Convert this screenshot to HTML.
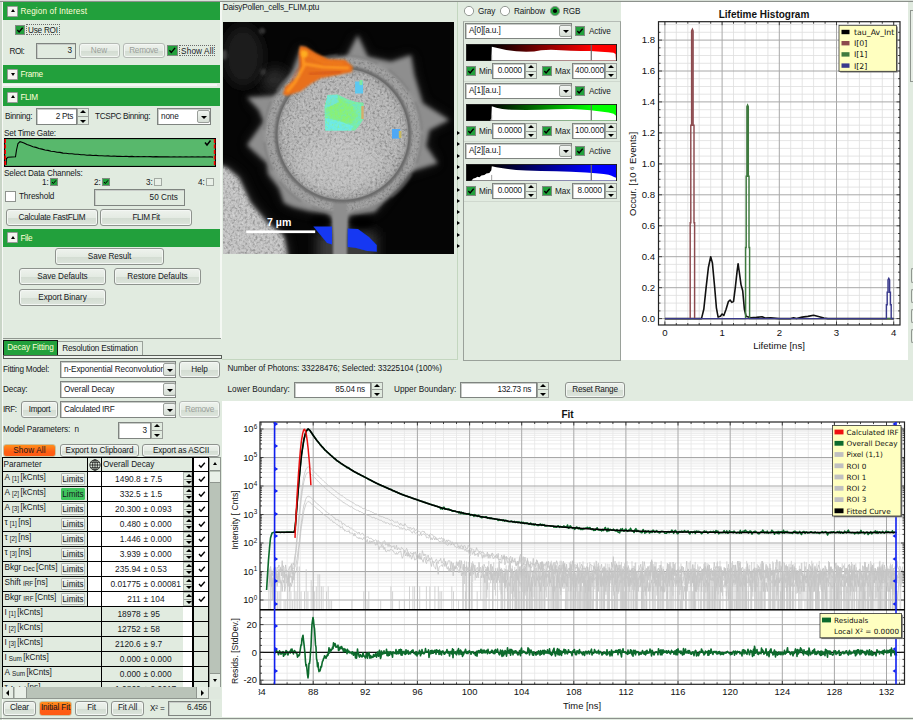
<!DOCTYPE html><html><head><meta charset="utf-8"><title>FLIM</title><style>
*{box-sizing:border-box;margin:0;padding:0}
html,body{width:913px;height:720px;overflow:hidden;background:#e1ebe0}
body{position:relative;font-family:"Liberation Sans",sans-serif;font-size:8.2px;color:#15181c;line-height:13px}
.a{position:absolute;white-space:nowrap}
.hdr{position:absolute;left:3px;width:217px;background:#22a03c;color:#ffffd8;height:18px}
.hdr span{position:absolute;left:17.5px;top:3.3px}
.hdr i{position:absolute;left:4px;top:3.6px;width:11px;height:11px;background:#f4f4f0;border:1px solid #9a9a9a;border-radius:1px}
.hdr i:after{content:"";position:absolute;left:2.5px;top:2.5px;border:2.5px solid transparent;border-bottom:3px solid #000;border-top:0}
.hdr i.dn:after{border-bottom:0;border-top:3px solid #000;top:3px}
.btn{position:absolute;border:1px solid #8e938e;border-radius:3px;background:linear-gradient(#eef2ed 0%,#e4ebe3 50%,#d3dcd2 52%,#dde5dc 100%);text-align:center;white-space:nowrap;box-shadow:inset 0 0 0 1px #f4f7f4}
.btn.dis{color:#9aa09a;border-color:#b5bab5}
.fld{position:absolute;border:1px solid #7f8480;background:#fff;box-shadow:inset 1px 1px 0 #c8ccc8;text-align:right;white-space:nowrap}
.fld.g{background:#e1ebe0}
.cb{position:absolute;width:11px;height:11px;background:#22a03c;border:1px solid #7f8a80}
.cb.off{background:#fff;border-color:#8e938e}
.cb.off.s{background:#e9f0e8;border-color:#a3aaa3}
.cb svg{position:absolute;left:0;top:0}
.spin{position:absolute;width:12px;border:1px solid #9a9f9a;background:#e1ebe0}
.spin:before,.spin:after{content:"";position:absolute;left:2px;border:3px solid transparent}
.spin:before{top:1px;border-top:0;border-bottom:3.5px solid #000}
.spin:after{bottom:1px;border-bottom:0;border-top:3.5px solid #000}
.spin b{position:absolute;left:0;right:0;top:50%;height:1px;background:#9a9f9a;margin-top:-0.5px}
.dd{position:absolute;width:13px;border:1px solid #9a9f9a;background:linear-gradient(#f2f5f2,#d5ddd4);border-radius:2px}
.dd:after{content:"";position:absolute;left:2.5px;top:50%;margin-top:-1px;border:3.5px solid transparent;border-top:3.5px solid #000;border-bottom:0}
</style></head><body>
<div class="a" style="left:0;top:0;width:913px;height:2px;background:linear-gradient(#d9e0d8 0,#d9e0d8 50%,#8c918c 50%,#8c918c 100%)"></div>
<div class="a" style="left:0;top:2px;width:3px;height:718px;background:linear-gradient(90deg,#c9d5c7 0,#c9d5c7 62%,#f6f9f5 62%,#f6f9f5 100%)"></div>
<div class="a" style="left:219.8px;top:2px;width:2.6px;height:337px;background:linear-gradient(90deg,#f4f8f3 0,#f4f8f3 27%,#a3a3a8 27%,#a3a3a8 73%,#f4f8f3 73%)"></div>
<div class="hdr" style="top:2px"><i class=""></i><span style="letter-spacing:0.11px;">Region of Interest</span></div>
<div class="cb" style="left:14.5px;top:25px;width:10px;height:10px"><svg width="8" height="8" viewBox="0 0 9 9"><path d="M1.5 4.5 L3.5 6.8 L7.5 2" stroke="#000" stroke-width="1.5" fill="none"/></svg></div>
<div class="a" style="left:26.3px;top:24.3px;letter-spacing:-0.25px;border:1px dotted #6a6a6a;padding:0 0.8px;height:11.2px;line-height:11px">Use ROI</div>
<div class="a" style="left:9.5px;top:44.5px;letter-spacing:-0.49px;">ROI:</div>
<div class="fld g" style="left:36px;top:43px;width:40px;height:16px;line-height:14px;padding:0 3px;text-align:right;letter-spacing:-0.12px;">3</div>
<div class="btn dis" style="left:78.5px;top:43.3px;width:41px;height:15.2px;line-height:13.2px;letter-spacing:-0.00px;">New</div>
<div class="btn dis" style="left:122.8px;top:43.3px;width:41.8px;height:15.2px;line-height:13.2px;letter-spacing:-0.26px;">Remove</div>
<div class="cb" style="left:167px;top:45px;width:10.5px;height:10.5px"><svg width="8.5" height="8.5" viewBox="0 0 9 9"><path d="M1.5 4.5 L3.5 6.8 L7.5 2" stroke="#000" stroke-width="1.5" fill="none"/></svg></div>
<div class="a" style="left:179.3px;top:44.7px;letter-spacing:0.14px;border:1px dotted #6a6a6a;padding:0 0.8px;height:11.2px;line-height:11px">Show All</div>
<div class="hdr" style="top:65px"><i class="dn"></i><span style="letter-spacing:-0.30px;">Frame</span></div>
<div class="a" style="left:3px;top:84px;width:214px;height:2px;background:#f4f7f4"></div>
<div class="hdr" style="top:88px"><i class=""></i><span style="letter-spacing:-0.39px;">FLIM</span></div>
<div class="a" style="left:5px;top:110px;letter-spacing:-0.30px;">Binning:</div>
<div class="fld " style="left:36px;top:108px;width:41px;height:17px;line-height:15px;padding:0 3px;text-align:right;letter-spacing:-0.26px;">2 Pts</div>
<div class="spin" style="left:77px;top:108px;height:17px"><b></b></div>
<div class="a" style="left:95px;top:110px;letter-spacing:-0.32px;">TCSPC Binning:</div>
<div class="fld " style="left:157px;top:108px;width:54px;height:17px;line-height:15px;padding:0 3px;text-align:left;letter-spacing:-0.16px;">none</div>
<div class="dd" style="left:197px;top:110px;height:13px"></div>
<div class="a" style="left:4px;top:127px;letter-spacing:-0.19px;">Set Time Gate:</div>
<svg class="a" style="left:4px;top:138px" width="212" height="29" viewBox="0 0 212 29"><rect x="0.5" y="0.5" width="211" height="28" fill="#58b86c" stroke="#000" stroke-width="1.2"/><path d="M2 27 L2.5 20.5 L4 19.2 L8 19 L11.5 18.8 L12.5 12 L14 5.5 L16 3.6 L18 4.2 L20 5.1 L23 6.6 L26 7.5 L29 8.7 L32 9.4 L35 10.5 L38 11.1 L41 12.0 L44 12.4 L47 13.2 L50 13.5 L53 14.2 L56 14.4 L59 15.1 L62 15.2 L65 15.8 L68 15.8 L71 16.3 L74 16.3 L77 16.8 L80 16.8 L83 17.2 L86 17.1 L89 17.5 L92 17.4 L95 17.8 L98 17.7 L101 18.0 L104 17.9 L107 18.2 L110 18.0 L113 18.4 L116 18.2 L119 18.5 L122 18.3 L125 18.6 L128 18.4 L131 18.7 L134 18.5 L137 18.7 L140 18.5 L143 18.8 L146 18.6 L149 18.9 L152 18.6 L155 18.9 L158 18.7 L161 18.9 L164 18.7 L167 19.0 L170 18.7 L173 19.0 L176 18.7 L179 19.0 L182 18.8 L185 19.0 L188 18.8 L191 19.0 L194 18.8 L197 19.0 L200 18.8 L203 19.0 L206 18.8 L209 19.1 " fill="none" stroke="#000" stroke-width="1.1"/><path d="M1.2 1 V28 M210.6 1 V28" stroke="#f00" stroke-width="1.6" stroke-dasharray="4 1.5"/><path d="M201 4.5 L203 7 L206.5 2.5" stroke="#000" stroke-width="1.5" fill="none"/></svg>
<div class="a" style="left:4px;top:167px;letter-spacing:-0.14px;">Select Data Channels:</div>
<div class="a" style="left:42px;top:176px;letter-spacing:-0.12px;">1:</div>
<div class="cb" style="left:50px;top:178px;width:8px;height:8px"><svg width="6" height="6" viewBox="0 0 9 9"><path d="M1.5 4.5 L3.5 6.8 L7.5 2" stroke="#000" stroke-width="1.5" fill="none"/></svg></div>
<div class="a" style="left:94px;top:176px;letter-spacing:-0.12px;">2:</div>
<div class="cb" style="left:102px;top:178px;width:8px;height:8px"><svg width="6" height="6" viewBox="0 0 9 9"><path d="M1.5 4.5 L3.5 6.8 L7.5 2" stroke="#000" stroke-width="1.5" fill="none"/></svg></div>
<div class="a" style="left:146px;top:176px;letter-spacing:-0.12px;">3:</div>
<div class="cb off s" style="left:154px;top:178px;width:8px;height:8px"></div>
<div class="a" style="left:198px;top:176px;letter-spacing:-0.12px;">4:</div>
<div class="cb off s" style="left:206px;top:178px;width:8px;height:8px"></div>
<div class="cb off" style="left:5px;top:191px;width:11px;height:11px"></div>
<div class="a" style="left:19px;top:190px;letter-spacing:-0.13px;">Threshold</div>
<div class="fld g" style="left:94px;top:189px;width:91px;height:17px;line-height:15px;padding:0 6px;text-align:right;letter-spacing:0.03px;">50 Cnts</div>
<div class="btn " style="left:6px;top:209px;width:92px;height:17px;line-height:15px;letter-spacing:-0.23px;">Calculate FastFLIM</div>
<div class="btn " style="left:100px;top:209px;width:92px;height:17px;line-height:15px;letter-spacing:-0.36px;">FLIM Fit</div>
<div class="hdr" style="top:228.5px"><i class=""></i><span style="letter-spacing:-0.40px;">File</span></div>
<div class="btn " style="left:55px;top:248px;width:109px;height:17px;line-height:15px;letter-spacing:-0.08px;">Save Result</div>
<div class="btn " style="left:19px;top:268px;width:87px;height:17px;line-height:15px;letter-spacing:-0.05px;">Save Defaults</div>
<div class="btn " style="left:114px;top:268px;width:87px;height:17px;line-height:15px;letter-spacing:-0.04px;">Restore Defaults</div>
<div class="btn " style="left:19px;top:289px;width:87px;height:17px;line-height:15px;letter-spacing:-0.05px;">Export Binary</div>
<div class="a" style="left:3px;top:338px;width:218px;height:1px;background:#8f968f"></div>
<div class="a" style="left:2.5px;top:355.2px;width:219px;height:4.2px;background:#eef3ed;border:1.2px solid #5a5f5a"></div>
<div class="a" style="left:3px;top:339.8px;width:55px;height:15.6px;background:#22a03c;border:1.5px solid #111;border-bottom:0;color:#ffffd8;text-align:center;line-height:14.5px;letter-spacing:-0.1px">Decay Fitting</div>
<div class="a" style="left:58px;top:341px;width:85px;height:14.4px;background:#e6eee5;border:1px solid #9aa19a;border-bottom:0;border-left:0;text-align:center;line-height:14px;letter-spacing:-0.17px">Resolution Estimation</div>
<div class="a" style="left:3px;top:363px;letter-spacing:-0.22px;">Fitting Model:</div>
<div class="fld " style="left:60px;top:361px;width:116px;height:17px;line-height:15px;padding:0 3px;text-align:left;letter-spacing:-0.12px;">n-Exponential Reconvolution</div>
<div class="dd" style="left:163px;top:363px;height:13px"></div>
<div class="btn " style="left:179px;top:361px;width:41px;height:17px;line-height:15px;letter-spacing:-0.07px;">Help</div>
<div class="a" style="left:3px;top:383px;letter-spacing:-0.17px;">Decay:</div>
<div class="fld " style="left:60px;top:381px;width:116px;height:17px;line-height:15px;padding:0 3px;text-align:left;letter-spacing:-0.09px;">Overall Decay</div>
<div class="dd" style="left:163px;top:383px;height:13px"></div>
<div class="a" style="left:3px;top:403px;letter-spacing:-0.45px;">IRF:</div>
<div class="btn " style="left:21px;top:401px;width:37px;height:17px;line-height:15px;letter-spacing:-0.27px;">Import</div>
<div class="fld " style="left:60px;top:401px;width:116px;height:17px;line-height:15px;padding:0 3px;text-align:left;letter-spacing:-0.27px;">Calculated IRF</div>
<div class="dd" style="left:163px;top:403px;height:13px"></div>
<div class="btn dis" style="left:179px;top:401px;width:41px;height:17px;line-height:15px;letter-spacing:-0.26px;">Remove</div>
<div class="a" style="left:3px;top:423px;letter-spacing:-0.12px;">Model Parameters:&nbsp; n</div>
<div class="fld " style="left:118px;top:422px;width:33px;height:17px;line-height:15px;padding:0 3px;text-align:right;letter-spacing:-0.12px;">3</div>
<div class="spin" style="left:151px;top:422px;height:17px"><b></b></div>
<div class="btn " style="left:3px;top:444px;width:53px;height:13px;line-height:11px;letter-spacing:0.14px;background:linear-gradient(#ff8f1c,#ff5f14 60%,#ff5a14);box-shadow:none;border-color:#c9c2a0">Show All</div>
<div class="btn " style="left:60px;top:444px;width:79px;height:13px;line-height:11px;letter-spacing:-0.12px;">Export to Clipboard</div>
<div class="btn " style="left:142px;top:444px;width:78px;height:13px;line-height:11px;letter-spacing:-0.11px;">Export as ASCII</div>
<div class="a" style="left:2px;top:457px;width:207px;height:231px;overflow:hidden;background:#000"><div class="a" style="left:1px;top:1px;width:84px;height:13px;background:#e1ebe0;padding-left:0.5px;line-height:13px">Parameter</div><div class="a" style="left:86px;top:1px;width:13px;height:13px;background:#e1ebe0;"><svg width="12" height="12" viewBox="0 0 12 12" style="position:absolute;left:0.5px;top:0.5px"><g fill="none" stroke="#000" stroke-width="0.7"><circle cx="6" cy="6" r="5.2"/><ellipse cx="6" cy="6" rx="2.4" ry="5.2"/><path d="M6 .8V11.2M.8 6H11.2M1.6 3.3H10.4M1.6 8.7H10.4"/></g></svg></div><div class="a" style="left:100px;top:1px;width:90px;height:13px;background:#e1ebe0;padding-left:1px;line-height:13px">Overall Decay</div><div class="a" style="left:192px;top:1px;width:14px;height:13px;background:#fff;"><svg width="10" height="10" viewBox="0 0 10 10" style="position:absolute;left:3px;top:2px"><path d="M2 5 L4 7.3 L7.8 2.8" stroke="#000" stroke-width="1.35" fill="none"/></svg></div><div class="a" style="left:1px;top:15px;width:84px;height:14px;background:#e1ebe0;"><span style="position:absolute;left:1.5px;top:-1px;line-height:13px">A<span style="font-size:6.4px;position:relative;top:1.3px;margin:0 1.3px 0 2px">[1]</span>[kCnts]</span><div class="btn" style="left:58px;top:1px;width:24px;height:12px;line-height:11px;border-radius:1px;border-color:#b4bab4">Limits</div></div><div class="a" style="left:86px;top:15px;width:13px;height:14px;background:#fff;"></div><div class="a" style="left:100px;top:15px;width:90px;height:14px;background:#fff;"><span style="position:absolute;line-height:14px;top:0;font-size:8.4px;white-space:nowrap;right:51.3px">1490.8</span><span style="position:absolute;line-height:14px;top:0;font-size:8.4px;white-space:nowrap;left:41.6px">±</span><span style="position:absolute;line-height:14px;top:0;font-size:8.4px;white-space:nowrap;left:48.6px">7.5</span><div class="spin" style="left:81px;top:0;height:14px;width:9px;border-color:#b0b6b0"><b></b></div></div><div class="a" style="left:192px;top:15px;width:14px;height:14px;background:#fff;"><svg width="10" height="10" viewBox="0 0 10 10" style="position:absolute;left:3px;top:2px"><path d="M2 5 L4 7.3 L7.8 2.8" stroke="#000" stroke-width="1.35" fill="none"/></svg></div><div class="a" style="left:1px;top:30px;width:84px;height:14px;background:#e1ebe0;"><span style="position:absolute;left:1.5px;top:-1px;line-height:13px">A<span style="font-size:6.4px;position:relative;top:1.3px;margin:0 1.3px 0 2px">[2]</span>[kCnts]</span><div class="btn" style="left:58px;top:1px;width:24px;height:12px;line-height:11px;border-radius:1px;background:#40c45e;border-color:#40c45e;box-shadow:none">Limits</div></div><div class="a" style="left:86px;top:30px;width:13px;height:14px;background:#fff;"></div><div class="a" style="left:100px;top:30px;width:90px;height:14px;background:#fff;"><span style="position:absolute;line-height:14px;top:0;font-size:8.4px;white-space:nowrap;right:51.3px">332.5</span><span style="position:absolute;line-height:14px;top:0;font-size:8.4px;white-space:nowrap;left:41.6px">±</span><span style="position:absolute;line-height:14px;top:0;font-size:8.4px;white-space:nowrap;left:48.6px">1.5</span><div class="spin" style="left:81px;top:0;height:14px;width:9px;border-color:#b0b6b0"><b></b></div></div><div class="a" style="left:192px;top:30px;width:14px;height:14px;background:#fff;"><svg width="10" height="10" viewBox="0 0 10 10" style="position:absolute;left:3px;top:2px"><path d="M2 5 L4 7.3 L7.8 2.8" stroke="#000" stroke-width="1.35" fill="none"/></svg></div><div class="a" style="left:1px;top:45px;width:84px;height:14px;background:#e1ebe0;"><span style="position:absolute;left:1.5px;top:-1px;line-height:13px">A<span style="font-size:6.4px;position:relative;top:1.3px;margin:0 1.3px 0 2px">[3]</span>[kCnts]</span><div class="btn" style="left:58px;top:1px;width:24px;height:12px;line-height:11px;border-radius:1px;border-color:#b4bab4">Limits</div></div><div class="a" style="left:86px;top:45px;width:13px;height:14px;background:#fff;"></div><div class="a" style="left:100px;top:45px;width:90px;height:14px;background:#fff;"><span style="position:absolute;line-height:14px;top:0;font-size:8.4px;white-space:nowrap;right:51.3px">20.300</span><span style="position:absolute;line-height:14px;top:0;font-size:8.4px;white-space:nowrap;left:41.6px">±</span><span style="position:absolute;line-height:14px;top:0;font-size:8.4px;white-space:nowrap;left:48.6px">0.093</span><div class="spin" style="left:81px;top:0;height:14px;width:9px;border-color:#b0b6b0"><b></b></div></div><div class="a" style="left:192px;top:45px;width:14px;height:14px;background:#fff;"><svg width="10" height="10" viewBox="0 0 10 10" style="position:absolute;left:3px;top:2px"><path d="M2 5 L4 7.3 L7.8 2.8" stroke="#000" stroke-width="1.35" fill="none"/></svg></div><div class="a" style="left:1px;top:60px;width:84px;height:14px;background:#e1ebe0;"><span style="position:absolute;left:1.5px;top:-1px;line-height:13px">τ<span style="font-size:6.4px;position:relative;top:1.3px;margin:0 1.3px 0 2px">[1]</span>[ns]</span><div class="btn" style="left:58px;top:1px;width:24px;height:12px;line-height:11px;border-radius:1px;border-color:#b4bab4">Limits</div></div><div class="a" style="left:86px;top:60px;width:13px;height:14px;background:#fff;"></div><div class="a" style="left:100px;top:60px;width:90px;height:14px;background:#fff;"><span style="position:absolute;line-height:14px;top:0;font-size:8.4px;white-space:nowrap;right:51.3px">0.480</span><span style="position:absolute;line-height:14px;top:0;font-size:8.4px;white-space:nowrap;left:41.6px">±</span><span style="position:absolute;line-height:14px;top:0;font-size:8.4px;white-space:nowrap;left:48.6px">0.000</span><div class="spin" style="left:81px;top:0;height:14px;width:9px;border-color:#b0b6b0"><b></b></div></div><div class="a" style="left:192px;top:60px;width:14px;height:14px;background:#fff;"><svg width="10" height="10" viewBox="0 0 10 10" style="position:absolute;left:3px;top:2px"><path d="M2 5 L4 7.3 L7.8 2.8" stroke="#000" stroke-width="1.35" fill="none"/></svg></div><div class="a" style="left:1px;top:75px;width:84px;height:14px;background:#e1ebe0;"><span style="position:absolute;left:1.5px;top:-1px;line-height:13px">τ<span style="font-size:6.4px;position:relative;top:1.3px;margin:0 1.3px 0 2px">[2]</span>[ns]</span><div class="btn" style="left:58px;top:1px;width:24px;height:12px;line-height:11px;border-radius:1px;border-color:#b4bab4">Limits</div></div><div class="a" style="left:86px;top:75px;width:13px;height:14px;background:#fff;"></div><div class="a" style="left:100px;top:75px;width:90px;height:14px;background:#fff;"><span style="position:absolute;line-height:14px;top:0;font-size:8.4px;white-space:nowrap;right:51.3px">1.446</span><span style="position:absolute;line-height:14px;top:0;font-size:8.4px;white-space:nowrap;left:41.6px">±</span><span style="position:absolute;line-height:14px;top:0;font-size:8.4px;white-space:nowrap;left:48.6px">0.000</span><div class="spin" style="left:81px;top:0;height:14px;width:9px;border-color:#b0b6b0"><b></b></div></div><div class="a" style="left:192px;top:75px;width:14px;height:14px;background:#fff;"><svg width="10" height="10" viewBox="0 0 10 10" style="position:absolute;left:3px;top:2px"><path d="M2 5 L4 7.3 L7.8 2.8" stroke="#000" stroke-width="1.35" fill="none"/></svg></div><div class="a" style="left:1px;top:90px;width:84px;height:14px;background:#e1ebe0;"><span style="position:absolute;left:1.5px;top:-1px;line-height:13px">τ<span style="font-size:6.4px;position:relative;top:1.3px;margin:0 1.3px 0 2px">[3]</span>[ns]</span><div class="btn" style="left:58px;top:1px;width:24px;height:12px;line-height:11px;border-radius:1px;border-color:#b4bab4">Limits</div></div><div class="a" style="left:86px;top:90px;width:13px;height:14px;background:#fff;"></div><div class="a" style="left:100px;top:90px;width:90px;height:14px;background:#fff;"><span style="position:absolute;line-height:14px;top:0;font-size:8.4px;white-space:nowrap;right:51.3px">3.939</span><span style="position:absolute;line-height:14px;top:0;font-size:8.4px;white-space:nowrap;left:41.6px">±</span><span style="position:absolute;line-height:14px;top:0;font-size:8.4px;white-space:nowrap;left:48.6px">0.000</span><div class="spin" style="left:81px;top:0;height:14px;width:9px;border-color:#b0b6b0"><b></b></div></div><div class="a" style="left:192px;top:90px;width:14px;height:14px;background:#fff;"><svg width="10" height="10" viewBox="0 0 10 10" style="position:absolute;left:3px;top:2px"><path d="M2 5 L4 7.3 L7.8 2.8" stroke="#000" stroke-width="1.35" fill="none"/></svg></div><div class="a" style="left:1px;top:105px;width:84px;height:14px;background:#e1ebe0;"><span style="position:absolute;left:1.5px;top:-1px;line-height:13px">Bkgr<span style="font-size:6.4px;position:relative;top:1.3px;margin:0 1.3px 0 2px">Dec</span>[Cnts]</span><div class="btn" style="left:58px;top:1px;width:24px;height:12px;line-height:11px;border-radius:1px;border-color:#b4bab4">Limits</div></div><div class="a" style="left:86px;top:105px;width:13px;height:14px;background:#fff;"></div><div class="a" style="left:100px;top:105px;width:90px;height:14px;background:#fff;"><span style="position:absolute;line-height:14px;top:0;font-size:8.4px;white-space:nowrap;right:51.3px">235.94</span><span style="position:absolute;line-height:14px;top:0;font-size:8.4px;white-space:nowrap;left:41.6px">±</span><span style="position:absolute;line-height:14px;top:0;font-size:8.4px;white-space:nowrap;left:48.6px">0.53</span><div class="spin" style="left:81px;top:0;height:14px;width:9px;border-color:#b0b6b0"><b></b></div></div><div class="a" style="left:192px;top:105px;width:14px;height:14px;background:#fff;"><svg width="10" height="10" viewBox="0 0 10 10" style="position:absolute;left:3px;top:2px"><path d="M2 5 L4 7.3 L7.8 2.8" stroke="#000" stroke-width="1.35" fill="none"/></svg></div><div class="a" style="left:1px;top:120px;width:84px;height:14px;background:#e1ebe0;"><span style="position:absolute;left:1.5px;top:-1px;line-height:13px">Shift<span style="font-size:6.4px;position:relative;top:1.3px;margin:0 1.3px 0 2px">IRF</span>[ns]</span><div class="btn" style="left:58px;top:1px;width:24px;height:12px;line-height:11px;border-radius:1px;border-color:#b4bab4">Limits</div></div><div class="a" style="left:86px;top:120px;width:13px;height:14px;background:#fff;"></div><div class="a" style="left:100px;top:120px;width:90px;height:14px;background:#fff;"><span style="position:absolute;line-height:14px;top:0;font-size:8.4px;white-space:nowrap;right:51.3px">0.01775</span><span style="position:absolute;line-height:14px;top:0;font-size:8.4px;white-space:nowrap;left:41.6px">±</span><span style="position:absolute;line-height:14px;top:0;font-size:8.4px;white-space:nowrap;left:48.6px">0.00081</span><div class="spin" style="left:81px;top:0;height:14px;width:9px;border-color:#b0b6b0"><b></b></div></div><div class="a" style="left:192px;top:120px;width:14px;height:14px;background:#fff;"><svg width="10" height="10" viewBox="0 0 10 10" style="position:absolute;left:3px;top:2px"><path d="M2 5 L4 7.3 L7.8 2.8" stroke="#000" stroke-width="1.35" fill="none"/></svg></div><div class="a" style="left:1px;top:135px;width:84px;height:14px;background:#e1ebe0;"><span style="position:absolute;left:1.5px;top:-1px;line-height:13px">Bkgr<span style="font-size:6.4px;position:relative;top:1.3px;margin:0 1.3px 0 2px">IRF</span>[Cnts]</span><div class="btn" style="left:58px;top:1px;width:24px;height:12px;line-height:11px;border-radius:1px;border-color:#b4bab4">Limits</div></div><div class="a" style="left:86px;top:135px;width:13px;height:14px;background:#fff;"></div><div class="a" style="left:100px;top:135px;width:90px;height:14px;background:#fff;"><span style="position:absolute;line-height:14px;top:0;font-size:8.4px;white-space:nowrap;right:51.3px">211</span><span style="position:absolute;line-height:14px;top:0;font-size:8.4px;white-space:nowrap;left:41.6px">±</span><span style="position:absolute;line-height:14px;top:0;font-size:8.4px;white-space:nowrap;left:48.6px">104</span><div class="spin" style="left:81px;top:0;height:14px;width:9px;border-color:#b0b6b0"><b></b></div></div><div class="a" style="left:192px;top:135px;width:14px;height:14px;background:#fff;"><svg width="10" height="10" viewBox="0 0 10 10" style="position:absolute;left:3px;top:2px"><path d="M2 5 L4 7.3 L7.8 2.8" stroke="#000" stroke-width="1.35" fill="none"/></svg></div><div class="a" style="left:1px;top:150px;width:98px;height:14px;background:#e1ebe0;"><span style="position:absolute;left:1.5px;top:-1px;line-height:13px">I<span style="font-size:6.4px;position:relative;top:1.3px;margin:0 1.3px 0 2px">[1]</span>[kCnts]</span></div><div class="a" style="left:100px;top:150px;width:90px;height:14px;background:#e1ebe0;"><span style="position:absolute;line-height:14px;top:0;font-size:8.4px;white-space:nowrap;right:51.3px">18978</span><span style="position:absolute;line-height:14px;top:0;font-size:8.4px;white-space:nowrap;left:41.6px">±</span><span style="position:absolute;line-height:14px;top:0;font-size:8.4px;white-space:nowrap;left:48.6px">95</span><div style="position:absolute;left:81px;top:0;width:9px;height:14px;background:#fff"></div></div><div class="a" style="left:192px;top:150px;width:14px;height:14px;background:#e1ebe0;"></div><div class="a" style="left:1px;top:165px;width:98px;height:14px;background:#e1ebe0;"><span style="position:absolute;left:1.5px;top:-1px;line-height:13px">I<span style="font-size:6.4px;position:relative;top:1.3px;margin:0 1.3px 0 2px">[2]</span>[kCnts]</span></div><div class="a" style="left:100px;top:165px;width:90px;height:14px;background:#e1ebe0;"><span style="position:absolute;line-height:14px;top:0;font-size:8.4px;white-space:nowrap;right:51.3px">12752</span><span style="position:absolute;line-height:14px;top:0;font-size:8.4px;white-space:nowrap;left:41.6px">±</span><span style="position:absolute;line-height:14px;top:0;font-size:8.4px;white-space:nowrap;left:48.6px">58</span><div style="position:absolute;left:81px;top:0;width:9px;height:14px;background:#fff"></div></div><div class="a" style="left:192px;top:165px;width:14px;height:14px;background:#e1ebe0;"></div><div class="a" style="left:1px;top:180px;width:98px;height:14px;background:#e1ebe0;"><span style="position:absolute;left:1.5px;top:-1px;line-height:13px">I<span style="font-size:6.4px;position:relative;top:1.3px;margin:0 1.3px 0 2px">[3]</span>[kCnts]</span></div><div class="a" style="left:100px;top:180px;width:90px;height:14px;background:#e1ebe0;"><span style="position:absolute;line-height:14px;top:0;font-size:8.4px;white-space:nowrap;right:51.3px">2120.6</span><span style="position:absolute;line-height:14px;top:0;font-size:8.4px;white-space:nowrap;left:41.6px">±</span><span style="position:absolute;line-height:14px;top:0;font-size:8.4px;white-space:nowrap;left:48.6px">9.7</span><div style="position:absolute;left:81px;top:0;width:9px;height:14px;background:#fff"></div></div><div class="a" style="left:192px;top:180px;width:14px;height:14px;background:#e1ebe0;"></div><div class="a" style="left:1px;top:195px;width:98px;height:14px;background:#e1ebe0;"><span style="position:absolute;left:1.5px;top:-1px;line-height:13px">I<span style="font-size:6.4px;position:relative;top:1.3px;margin:0 1.3px 0 2px">Sum</span>[kCnts]</span></div><div class="a" style="left:100px;top:195px;width:90px;height:14px;background:#e1ebe0;"><span style="position:absolute;line-height:14px;top:0;font-size:8.4px;white-space:nowrap;right:51.3px">0.000</span><span style="position:absolute;line-height:14px;top:0;font-size:8.4px;white-space:nowrap;left:41.6px">±</span><span style="position:absolute;line-height:14px;top:0;font-size:8.4px;white-space:nowrap;left:48.6px">0.000</span><div style="position:absolute;left:81px;top:0;width:9px;height:14px;background:#fff"></div></div><div class="a" style="left:192px;top:195px;width:14px;height:14px;background:#e1ebe0;"></div><div class="a" style="left:1px;top:210px;width:98px;height:14px;background:#e1ebe0;"><span style="position:absolute;left:1.5px;top:-1px;line-height:13px">A<span style="font-size:6.4px;position:relative;top:1.3px;margin:0 1.3px 0 2px">Sum</span>[kCnts]</span></div><div class="a" style="left:100px;top:210px;width:90px;height:14px;background:#e1ebe0;"><span style="position:absolute;line-height:14px;top:0;font-size:8.4px;white-space:nowrap;right:51.3px">0.000</span><span style="position:absolute;line-height:14px;top:0;font-size:8.4px;white-space:nowrap;left:41.6px">±</span><span style="position:absolute;line-height:14px;top:0;font-size:8.4px;white-space:nowrap;left:48.6px">0.000</span><div style="position:absolute;left:81px;top:0;width:9px;height:14px;background:#fff"></div></div><div class="a" style="left:192px;top:210px;width:14px;height:14px;background:#e1ebe0;"></div><div class="a" style="left:1px;top:225px;width:98px;height:14px;background:#e1ebe0;"><span style="position:absolute;left:1.5px;top:-1px;line-height:13px">τ<span style="font-size:6.4px;position:relative;top:1.3px;margin:0 1.3px 0 2px">Av Int</span>[ns]</span></div><div class="a" style="left:100px;top:225px;width:90px;height:14px;background:#e1ebe0;"><span style="position:absolute;line-height:14px;top:0;font-size:8.4px;white-space:nowrap;right:51.3px">1.0860</span><span style="position:absolute;line-height:14px;top:0;font-size:8.4px;white-space:nowrap;left:41.6px">±</span><span style="position:absolute;line-height:14px;top:0;font-size:8.4px;white-space:nowrap;left:48.6px">0.0017</span><div style="position:absolute;left:81px;top:0;width:9px;height:14px;background:#fff"></div></div><div class="a" style="left:192px;top:225px;width:14px;height:14px;background:#e1ebe0;"></div></div>
<div class="a" style="left:209px;top:457px;width:12px;height:231px;background:#b9c3b8;border:1px solid #8f968f"></div>
<div class="a" style="left:210px;top:458px;width:10px;height:13px;background:#e6eee5;border-bottom:1px solid #8f968f"></div>
<div class="a" style="left:212.5px;top:462px;border:2.5px solid transparent;border-top:0;border-bottom:3px solid #000"></div>
<div class="a" style="left:210px;top:472px;width:10px;height:11px;background:#e9f0e8;border-bottom:1px solid #8f968f"></div>
<div class="a" style="left:210px;top:673px;width:10px;height:14px;background:#e6eee5;border-top:1px solid #8f968f"></div>
<div class="a" style="left:212.5px;top:679px;border:2.5px solid transparent;border-bottom:0;border-top:3px solid #000"></div>
<div class="a" style="left:2px;top:687.3px;width:219px;height:12px;background:#dfe8de"></div>
<div class="a" style="left:2px;top:687.3px;width:207px;height:11.7px;background:#b9c3b8;border:1px solid #8f968f;border-top:0"></div>
<div class="a" style="left:3px;top:687.3px;width:11px;height:10.7px;background:#e6eee5;border-right:1px solid #8f968f"></div>
<div class="a" style="left:5.5px;top:689.7px;border:3px solid transparent;border-left:0;border-right:3.5px solid #000"></div>
<div class="a" style="left:15px;top:687.3px;width:12px;height:10.7px;background:#e9f0e8;border-right:1px solid #8f968f"></div>
<div class="a" style="left:196px;top:687.3px;width:12px;height:10.7px;background:#e6eee5;border-left:1px solid #8f968f"></div>
<div class="a" style="left:200.5px;top:689.7px;border:3px solid transparent;border-right:0;border-left:3.5px solid #000"></div>
<div class="btn " style="left:3px;top:701.3px;width:33px;height:14.8px;line-height:12.8px;letter-spacing:-0.12px;">Clear</div>
<div class="btn " style="left:39px;top:701.3px;width:33px;height:14.8px;line-height:12.8px;letter-spacing:-0.12px;background:linear-gradient(#ff8f1c,#ff5f14 60%,#ff5a14);box-shadow:none;border-color:#c9c2a0">Initial Fit</div>
<div class="btn " style="left:75px;top:701.3px;width:33px;height:14.8px;line-height:12.8px;letter-spacing:-0.12px;">Fit</div>
<div class="btn " style="left:111px;top:701.3px;width:33px;height:14.8px;line-height:12.8px;letter-spacing:-0.12px;">Fit All</div>
<div class="a" style="left:150px;top:702px;letter-spacing:-0.12px;">X² =</div>
<div class="fld g" style="left:168px;top:701.3px;width:43px;height:14.8px;line-height:12.8px;padding:0 3px;text-align:right;letter-spacing:-0.12px;">6.456</div>
<div class="a" style="left:222.7px;top:1.2px;letter-spacing:-0.18px;">DaisyPollen_cells_FLIM.ptu</div>
<div class="a" style="left:222px;top:2px;width:235.5px;height:358px;border:1px solid #c3d6bf;border-top:0;border-left:0"></div>
<svg class="a" style="left:223px;top:22px" width="231" height="232" viewBox="0 0 231 232"><defs><filter id="b1" x="-20%" y="-20%" width="140%" height="140%"><feGaussianBlur stdDeviation="2.2"/></filter><filter id="b2" x="-20%" y="-20%" width="140%" height="140%"><feGaussianBlur stdDeviation="1.1"/></filter><filter id="b3" x="-20%" y="-20%" width="140%" height="140%"><feGaussianBlur stdDeviation="0.6"/></filter><filter id="b4" x="-30%" y="-30%" width="160%" height="160%"><feGaussianBlur stdDeviation="6"/></filter><filter id="nz" x="0" y="0" width="100%" height="100%"><feTurbulence type="fractalNoise" baseFrequency="0.42" numOctaves="2" seed="3" result="t"/><feColorMatrix in="t" type="matrix" values="0 0 0 0 0  0 0 0 0 0  0 0 0 0 0  2.0 0 0 0 -0.95" result="a"/><feComposite in="SourceGraphic" in2="a" operator="in"/></filter><filter id="nz2" x="0" y="0" width="100%" height="100%"><feTurbulence type="fractalNoise" baseFrequency="0.4" numOctaves="2" seed="8" result="t"/><feColorMatrix in="t" type="matrix" values="0 0 0 0 0  0 0 0 0 0  0 0 0 0 0  0 2.0 0 0 -0.9" result="a"/><feComposite in="SourceGraphic" in2="a" operator="in"/></filter><radialGradient id="disc" cx="0.5" cy="0.5" r="0.5"><stop offset="0" stop-color="#bcbcbc"/><stop offset="0.85" stop-color="#b4b4b4"/><stop offset="0.96" stop-color="#a6a6a6"/><stop offset="1" stop-color="#8c8c8c"/></radialGradient><clipPath id="cl"><rect width="231" height="232"/></clipPath></defs><rect width="231" height="232" fill="#050505"/><g clip-path="url(#cl)"><circle cx="39" cy="9" r="3.2" fill="#363636" filter="url(#b2)"/><circle cx="40" cy="50" r="3.2" fill="#3a3a3a" filter="url(#b2)"/><ellipse cx="2" cy="33" rx="3" ry="5" fill="#6a6a6a" filter="url(#b2)"/><ellipse cx="52" cy="58" rx="14" ry="12" fill="#2a2a2a" filter="url(#b4)"/><ellipse cx="20" cy="34" rx="20" ry="30" fill="#1f1f1f" filter="url(#b4)"/><polygon points="79,24 90,42 108,40 123,36.3 134.7,13 144.7,34.7 168,39.7 188,33 191.3,53 199.7,81.3 226.3,98 206.3,108 203,124 214.8,141.3 181.4,151.3 161.4,178 152,190 128,192.5 124.8,196 124.8,236 109.2,236 109.2,196 104,191 86,189 70,185 61,181 56,166 45,152 44,141.3 24,123 40.7,99.7 36,88 24,75.5 50,74 60.7,71.3" fill="#484848" filter="url(#b4)" opacity="0.5"/><polygon points="79,24 90,42 108,40 123,36.3 134.7,13 144.7,34.7 168,39.7 188,33 191.3,53 199.7,81.3 226.3,98 206.3,108 203,124 214.8,141.3 181.4,151.3 161.4,178 152,190 128,192.5 124.8,196 124.8,236 109.2,236 109.2,196 104,191 86,189 70,185 61,181 56,166 45,152 44,141.3 24,123 40.7,99.7 36,88 24,75.5 50,74 60.7,71.3" fill="#8e8e8e" filter="url(#b1)"/><rect x="94" y="210" width="60" height="34" fill="#3a3a3a" filter="url(#b4)"/><polygon points="-6,142 4,146 15.7,155.7 27.3,180.7 44,200.7 60.7,214 65,236 -6,236" fill="#707070" filter="url(#b4)" opacity="0.6"/><polygon points="-6,142 4,146 15.7,155.7 27.3,180.7 44,200.7 60.7,214 65,236 -6,236" fill="#c4c4c4" filter="url(#b1)"/><polygon points="-6,142 4,146 15.7,155.7 27.3,180.7 44,200.7 60.7,214 65,236 -6,236" fill="#fff" filter="url(#nz)" opacity="0.4"/><polygon points="-6,142 4,146 15.7,155.7 27.3,180.7 44,200.7 60.7,214 65,236 -6,236" fill="#444" filter="url(#nz2)" opacity="0.5"/><circle cx="120" cy="112.3" r="78" fill="#a0a0a0" filter="url(#b1)" opacity="0.9"/><circle cx="120" cy="112.3" r="77" fill="#333" filter="url(#nz)" opacity="0.4"/><circle cx="120" cy="112.3" r="77" fill="#fff" filter="url(#nz2)" opacity="0.15"/><circle cx="120" cy="112.3" r="79" fill="none" stroke="#707070" stroke-width="2" filter="url(#b2)" opacity="0.55" stroke-dasharray="30 12"/><rect x="110" y="180" width="14" height="60" fill="#8e8e8e" filter="url(#b2)"/><ellipse cx="96" cy="200" rx="10" ry="5" fill="#060606" filter="url(#b1)"/><ellipse cx="139.5" cy="200.5" rx="11.5" ry="5" fill="#060606" filter="url(#b1)"/><circle cx="120" cy="112.3" r="68.5" fill="#6a6a6a" filter="url(#b2)"/><circle cx="120" cy="112.3" r="65.5" fill="url(#disc)" filter="url(#b3)"/><circle cx="120" cy="112.3" r="64.5" fill="#303030" filter="url(#nz)" opacity="0.5"/><circle cx="120" cy="112.3" r="64.5" fill="#fff" filter="url(#nz2)" opacity="0.35"/><ellipse cx="116" cy="142.3" rx="42" ry="26" fill="#d4d4d4" opacity="0.3" filter="url(#b4)"/><path d="M76.9 24 L83 24.7 L93 30.9 L105.3 37 L122.2 37.8 L129.8 44.7 L129 50 L114.5 53.1 L97.6 56.2 L88.4 61.5 L77.7 69.2 L63.9 73.8 L60 72.3 L62.3 64.6 L76.1 53.9 L76.9 41.6 L76.1 29.3 Z" fill="#e8701c" filter="url(#b2)"/><path d="M79 28 L81 44 L72 60 L64 70 M82 42 L100 45 L126 46" fill="none" stroke="#ff9a22" stroke-width="3.2" filter="url(#b2)" opacity="0.9"/><path d="M86 33 L100 40 L120 42" fill="none" stroke="#f07c1c" stroke-width="3" filter="url(#b2)" opacity="0.8"/><path d="M86 52 L100 51 L118 50" fill="none" stroke="#d0501a" stroke-width="1.8" filter="url(#b2)" opacity="0.8"/><path d="M76.5 30 L77 44 L68 60" fill="none" stroke="#c84a14" stroke-width="1.4" filter="url(#b2)" opacity="0.7"/><circle cx="81.5" cy="32" r="3.4" fill="#ffb020" filter="url(#b2)" opacity="0.95"/><path d="M104.5 73 L114.5 72.5 L124 77 L133 80 L140.5 80.7 L140.5 96.8 L136 104 L132 108.5 L102.2 108.5 L101.5 85 Z" fill="#78ecb0" filter="url(#b3)"/><path d="M104 80 L116 76 L128 82 L134 94 L128 102 L114 100 L104 92 Z" fill="#8cf268" opacity="0.7" filter="url(#b2)"/><path d="M102 96 L116 99 L130 104 L128 108.5 L102.2 108.5 Z" fill="#70ece8" opacity="0.9" filter="url(#b3)"/><path d="M104.5 73.5 L114 73 L116 80 L108 84 L102 86Z" fill="#70e4e8" opacity="0.75" filter="url(#b3)"/><path d="M104.5 73 L114.5 72.5 L124 77 L133 80 L140.5 80.7 L140.5 96.8 L136 104 L132 108.5 L102.2 108.5 L101.5 85 Z" fill="#a8f040" filter="url(#nz)" opacity="0.55"/><path d="M104.5 73 L114.5 72.5 L124 77 L133 80 L140.5 80.7 L140.5 96.8 L136 104 L132 108.5 L102.2 108.5 L101.5 85 Z" fill="#60d8f8" filter="url(#nz2)" opacity="0.5"/><rect x="138.3" y="84" width="2.4" height="13" fill="#e8a060" opacity="0.85"/><rect x="132.1" y="59.5" width="8" height="12" fill="#5cc8f0" filter="url(#b3)"/><rect x="136.5" y="58" width="3" height="5" fill="#7fe8a0"/><rect x="169" y="107" width="8.2" height="9.6" fill="#50a8f6" filter="url(#b3)"/><rect x="175.8" y="109" width="2.6" height="7" fill="#c8b860"/><path d="M90.3 204.5 L109 204.5 L109 222.5 L104 221 Z" fill="#1238f2" filter="url(#b3)"/><path d="M124.7 206.5 L135 207 L146 215 L153.8 223 L153.8 229.8 L144 229 L133 226 L124.7 225 Z" fill="#1238f2" filter="url(#b3)"/><rect x="23.2" y="208.4" width="69" height="2.7" fill="#fff"/><text x="44" y="204" font-family="Liberation Sans, sans-serif" font-weight="bold" font-size="10.6" fill="#fff">7 µm</text></g></svg>
<div class="a" style="left:457px;top:131.0px;border:2px solid transparent;border-right:0;border-left:3px solid #000"></div>
<div class="a" style="left:457px;top:142.3px;border:2px solid transparent;border-right:0;border-left:3px solid #000"></div>
<div class="a" style="left:457px;top:153.6px;border:2px solid transparent;border-right:0;border-left:3px solid #000"></div>
<div class="a" style="left:457px;top:164.9px;border:2px solid transparent;border-right:0;border-left:3px solid #000"></div>
<div class="a" style="left:457px;top:176.2px;border:2px solid transparent;border-right:0;border-left:3px solid #000"></div>
<div class="a" style="left:457px;top:187.5px;border:2px solid transparent;border-right:0;border-left:3px solid #000"></div>
<div class="a" style="left:457px;top:198.8px;border:2px solid transparent;border-right:0;border-left:3px solid #000"></div>
<div class="a" style="left:457px;top:210.1px;border:2px solid transparent;border-right:0;border-left:3px solid #000"></div>
<div class="a" style="left:457px;top:221.4px;border:2px solid transparent;border-right:0;border-left:3px solid #000"></div>
<div class="a" style="left:457px;top:232.7px;border:2px solid transparent;border-right:0;border-left:3px solid #000"></div>
<div class="a" style="left:457px;top:244.0px;border:2px solid transparent;border-right:0;border-left:3px solid #000"></div>
<svg class="a" style="left:463px;top:5px" width="12" height="12"><circle cx="6" cy="6" r="4.6" fill="#fff" stroke="#8a908a" stroke-width="0.9"/></svg>
<div class="a" style="left:478px;top:5px;letter-spacing:-0.12px;">Gray</div>
<svg class="a" style="left:499px;top:5px" width="12" height="12"><circle cx="6" cy="6" r="4.6" fill="#fff" stroke="#8a908a" stroke-width="0.9"/></svg>
<div class="a" style="left:514px;top:5px;letter-spacing:-0.12px;">Rainbow</div>
<svg class="a" style="left:548.5px;top:5px" width="12" height="12"><circle cx="6" cy="6" r="4.6" fill="#22a03c" stroke="#8a908a" stroke-width="0.9"/><circle cx="6" cy="6" r="2.1" fill="#000"/></svg>
<div class="a" style="left:563px;top:5px;letter-spacing:-0.12px;">RGB</div>
<div class="a" style="left:463px;top:21px;width:158px;height:339.6px;border:1px solid #9aa19a;border-top-color:#b5bcb5"></div>
<div class="a" style="left:464px;top:22px;width:156px;height:60px;border-bottom:1px solid #cfd8ce"></div>
<div class="fld " style="left:465px;top:23px;width:107px;height:16px;line-height:14px;padding:0 3px;text-align:left;letter-spacing:-0.12px;">A[0][a.u.]</div>
<div class="dd" style="left:559px;top:25px;height:12px"></div>
<div class="cb" style="left:575px;top:26px;width:10px;height:10px"><svg width="8" height="8" viewBox="0 0 9 9"><path d="M1.5 4.5 L3.5 6.8 L7.5 2" stroke="#000" stroke-width="1.5" fill="none"/></svg></div>
<div class="a" style="left:589px;top:25px;letter-spacing:-0.12px;">Active</div>
<svg class="a" style="left:465.5px;top:43.8px" width="151" height="17.3" viewBox="0 0 152 19" preserveAspectRatio="none"><defs><linearGradient id="cg0" x1="0" x2="1"><stop offset="0" stop-color="#000"/><stop offset="1" stop-color="#ff0000"/></linearGradient></defs><rect width="152" height="19" fill="#222"/><rect x="1" y="1" width="25" height="17" fill="#000"/><rect x="26" y="1" width="100" height="17" fill="url(#cg0)"/><rect x="126" y="1" width="25" height="17" fill="#ff0000"/><polygon points="25,17 25.5,2 30,3.2 40,5.5 50,7 60,7.6 68,7.2 75,5.8 85,5.2 95,5.8 105,6.4 115,6.6 125,6.8 135,7.4 143,8 148,8.6 150,10 150.5,17" fill="#fff" transform="translate(0.5,1)"/><rect x="125.5" y="1" width="1.2" height="17" fill="#6a6a6a"/><rect x="25.5" y="12" width="0.8" height="6" fill="#888"/></svg>
<div class="cb" style="left:466px;top:66px;width:10px;height:10px"><svg width="8" height="8" viewBox="0 0 9 9"><path d="M1.5 4.5 L3.5 6.8 L7.5 2" stroke="#000" stroke-width="1.5" fill="none"/></svg></div>
<div class="a" style="left:479px;top:65px;letter-spacing:-0.12px;">Min</div>
<div class="fld " style="left:492px;top:63px;width:33px;height:16px;line-height:14px;padding:0 2px;text-align:right;letter-spacing:-0.12px;">0.0000</div>
<div class="spin" style="left:525px;top:63px;height:16px"><b></b></div>
<div class="cb" style="left:542px;top:66px;width:10px;height:10px"><svg width="8" height="8" viewBox="0 0 9 9"><path d="M1.5 4.5 L3.5 6.8 L7.5 2" stroke="#000" stroke-width="1.5" fill="none"/></svg></div>
<div class="a" style="left:555px;top:65px;letter-spacing:-0.12px;">Max</div>
<div class="fld" style="left:572px;top:63px;width:33px;height:16px;line-height:14px;padding:0 2px;text-align:left;overflow:hidden;letter-spacing:-0.1px">400.000</div>
<div class="spin" style="left:605px;top:63px;height:16px"><b></b></div>
<div class="a" style="left:464px;top:82px;width:156px;height:60px;border-bottom:1px solid #cfd8ce"></div>
<div class="fld " style="left:465px;top:83px;width:107px;height:16px;line-height:14px;padding:0 3px;text-align:left;letter-spacing:-0.12px;">A[1][a.u.]</div>
<div class="dd" style="left:559px;top:85px;height:12px"></div>
<div class="cb" style="left:575px;top:86px;width:10px;height:10px"><svg width="8" height="8" viewBox="0 0 9 9"><path d="M1.5 4.5 L3.5 6.8 L7.5 2" stroke="#000" stroke-width="1.5" fill="none"/></svg></div>
<div class="a" style="left:589px;top:85px;letter-spacing:-0.12px;">Active</div>
<svg class="a" style="left:465.5px;top:103.8px" width="151" height="17.3" viewBox="0 0 152 19" preserveAspectRatio="none"><defs><linearGradient id="cg1" x1="0" x2="1"><stop offset="0" stop-color="#000"/><stop offset="1" stop-color="#00ff00"/></linearGradient></defs><rect width="152" height="19" fill="#222"/><rect x="1" y="1" width="25" height="17" fill="#000"/><rect x="26" y="1" width="100" height="17" fill="url(#cg1)"/><rect x="126" y="1" width="25" height="17" fill="#00ff00"/><polygon points="24,17 25,14 25.5,1.5 30,3 36,4.6 45,5.4 60,5.6 75,5.2 90,4.8 105,4.6 115,5 125,6 135,7.2 143,8.4 148,9.6 150.5,12 150.5,17" fill="#fff" transform="translate(0.5,1)"/><rect x="125.5" y="1" width="1.2" height="17" fill="#6a6a6a"/><rect x="25.5" y="12" width="0.8" height="6" fill="#888"/></svg>
<div class="cb" style="left:466px;top:126px;width:10px;height:10px"><svg width="8" height="8" viewBox="0 0 9 9"><path d="M1.5 4.5 L3.5 6.8 L7.5 2" stroke="#000" stroke-width="1.5" fill="none"/></svg></div>
<div class="a" style="left:479px;top:125px;letter-spacing:-0.12px;">Min</div>
<div class="fld " style="left:492px;top:123px;width:33px;height:16px;line-height:14px;padding:0 2px;text-align:right;letter-spacing:-0.12px;">0.0000</div>
<div class="spin" style="left:525px;top:123px;height:16px"><b></b></div>
<div class="cb" style="left:542px;top:126px;width:10px;height:10px"><svg width="8" height="8" viewBox="0 0 9 9"><path d="M1.5 4.5 L3.5 6.8 L7.5 2" stroke="#000" stroke-width="1.5" fill="none"/></svg></div>
<div class="a" style="left:555px;top:125px;letter-spacing:-0.12px;">Max</div>
<div class="fld" style="left:572px;top:123px;width:33px;height:16px;line-height:14px;padding:0 2px;text-align:left;overflow:hidden;letter-spacing:-0.1px">100.000</div>
<div class="spin" style="left:605px;top:123px;height:16px"><b></b></div>
<div class="a" style="left:464px;top:142px;width:156px;height:60px;border-bottom:1px solid #cfd8ce"></div>
<div class="fld " style="left:465px;top:143px;width:107px;height:16px;line-height:14px;padding:0 3px;text-align:left;letter-spacing:-0.12px;">A[2][a.u.]</div>
<div class="dd" style="left:559px;top:145px;height:12px"></div>
<div class="cb" style="left:575px;top:146px;width:10px;height:10px"><svg width="8" height="8" viewBox="0 0 9 9"><path d="M1.5 4.5 L3.5 6.8 L7.5 2" stroke="#000" stroke-width="1.5" fill="none"/></svg></div>
<div class="a" style="left:589px;top:145px;letter-spacing:-0.12px;">Active</div>
<svg class="a" style="left:465.5px;top:163.8px" width="151" height="17.3" viewBox="0 0 152 19" preserveAspectRatio="none"><defs><linearGradient id="cg2" x1="0" x2="1"><stop offset="0" stop-color="#000"/><stop offset="1" stop-color="#0000ff"/></linearGradient></defs><rect width="152" height="19" fill="#222"/><rect x="1" y="1" width="25" height="17" fill="#000"/><rect x="26" y="1" width="100" height="17" fill="url(#cg2)"/><rect x="126" y="1" width="25" height="17" fill="#0000ff"/><polygon points="5,17 7,15 9,14.5 11,13 13,13.5 15,11.5 18,11 20,9.5 23,9 25,6 25.5,1.5 30,2.6 40,4.2 50,5.6 60,6.2 75,6.6 90,7 105,7.4 120,8.4 130,9.2 138,10 143,10.8 146,12 148,13 150.5,14 150.5,17" fill="#fff" transform="translate(0.5,1)"/><rect x="125.5" y="1" width="1.2" height="17" fill="#6a6a6a"/><rect x="25.5" y="12" width="0.8" height="6" fill="#888"/></svg>
<div class="cb" style="left:466px;top:186px;width:10px;height:10px"><svg width="8" height="8" viewBox="0 0 9 9"><path d="M1.5 4.5 L3.5 6.8 L7.5 2" stroke="#000" stroke-width="1.5" fill="none"/></svg></div>
<div class="a" style="left:479px;top:185px;letter-spacing:-0.12px;">Min</div>
<div class="fld " style="left:492px;top:183px;width:33px;height:16px;line-height:14px;padding:0 2px;text-align:right;letter-spacing:-0.12px;">0.0000</div>
<div class="spin" style="left:525px;top:183px;height:16px"><b></b></div>
<div class="cb" style="left:542px;top:186px;width:10px;height:10px"><svg width="8" height="8" viewBox="0 0 9 9"><path d="M1.5 4.5 L3.5 6.8 L7.5 2" stroke="#000" stroke-width="1.5" fill="none"/></svg></div>
<div class="a" style="left:555px;top:185px;letter-spacing:-0.12px;">Max</div>
<div class="fld" style="left:572px;top:183px;width:33px;height:16px;line-height:14px;padding:0 2px;text-align:right;overflow:hidden;letter-spacing:-0.1px">8.0000</div>
<div class="spin" style="left:605px;top:183px;height:16px"><b></b></div>
<div class="a" style="left:621.2px;top:2px;width:286.6px;height:358.3px;background:#fff"></div>
<svg class="a" style="left:622px;top:2px" width="286" height="357" viewBox="622 2 286 357"><rect x="622" y="2" width="286" height="357" fill="#fff"/><path d="M676.3 21.7V325M687.8 21.7V325M699.2 21.7V325M710.7 21.7V325M733.5 21.7V325M745.0 21.7V325M756.4 21.7V325M767.9 21.7V325M790.7 21.7V325M802.2 21.7V325M813.6 21.7V325M825.1 21.7V325M847.9 21.7V325M859.4 21.7V325M870.8 21.7V325M882.3 21.7V325M658.5 310.9H900M658.5 303.1H900M658.5 295.4H900M658.5 279.9H900M658.5 272.2H900M658.5 264.4H900M658.5 249.0H900M658.5 241.2H900M658.5 233.5H900M658.5 218.0H900M658.5 210.3H900M658.5 202.5H900M658.5 187.1H900M658.5 179.3H900M658.5 171.6H900M658.5 156.1H900M658.5 148.4H900M658.5 140.6H900M658.5 125.2H900M658.5 117.4H900M658.5 109.7H900M658.5 94.2H900M658.5 86.5H900M658.5 78.7H900M658.5 63.3H900M658.5 55.5H900M658.5 47.8H900M658.5 32.3H900M658.5 24.6H900" stroke="#dedede" stroke-width="0.8" fill="none"/><path d="M664.9 21.7V325M722.1 21.7V325M779.3 21.7V325M836.5 21.7V325M893.7 21.7V325M658.5 318.6H900M658.5 287.7H900M658.5 256.7H900M658.5 225.8H900M658.5 194.8H900M658.5 163.9H900M658.5 132.9H900M658.5 101.9H900M658.5 71.0H900M658.5 40.1H900" stroke="#a8a8a8" stroke-width="1" fill="none"/><path d="M664.9 21.7v3.5M664.9 325v-3.5M676.3 21.7v2M676.3 325v-2M687.8 21.7v2M687.8 325v-2M699.2 21.7v2M699.2 325v-2M710.7 21.7v2M710.7 325v-2M722.1 21.7v3.5M722.1 325v-3.5M733.5 21.7v2M733.5 325v-2M745.0 21.7v2M745.0 325v-2M756.4 21.7v2M756.4 325v-2M767.9 21.7v2M767.9 325v-2M779.3 21.7v3.5M779.3 325v-3.5M790.7 21.7v2M790.7 325v-2M802.2 21.7v2M802.2 325v-2M813.6 21.7v2M813.6 325v-2M825.1 21.7v2M825.1 325v-2M836.5 21.7v3.5M836.5 325v-3.5M847.9 21.7v2M847.9 325v-2M859.4 21.7v2M859.4 325v-2M870.8 21.7v2M870.8 325v-2M882.3 21.7v2M882.3 325v-2M893.7 21.7v3.5M893.7 325v-3.5M658.5 318.6h3.5M900 318.6h-3.5M658.5 310.9h2M900 310.9h-2M658.5 303.1h2M900 303.1h-2M658.5 295.4h2M900 295.4h-2M658.5 287.7h3.5M900 287.7h-3.5M658.5 279.9h2M900 279.9h-2M658.5 272.2h2M900 272.2h-2M658.5 264.4h2M900 264.4h-2M658.5 256.7h3.5M900 256.7h-3.5M658.5 249.0h2M900 249.0h-2M658.5 241.2h2M900 241.2h-2M658.5 233.5h2M900 233.5h-2M658.5 225.8h3.5M900 225.8h-3.5M658.5 218.0h2M900 218.0h-2M658.5 210.3h2M900 210.3h-2M658.5 202.5h2M900 202.5h-2M658.5 194.8h3.5M900 194.8h-3.5M658.5 187.1h2M900 187.1h-2M658.5 179.3h2M900 179.3h-2M658.5 171.6h2M900 171.6h-2M658.5 163.9h3.5M900 163.9h-3.5M658.5 156.1h2M900 156.1h-2M658.5 148.4h2M900 148.4h-2M658.5 140.6h2M900 140.6h-2M658.5 132.9h3.5M900 132.9h-3.5M658.5 125.2h2M900 125.2h-2M658.5 117.4h2M900 117.4h-2M658.5 109.7h2M900 109.7h-2M658.5 101.9h3.5M900 101.9h-3.5M658.5 94.2h2M900 94.2h-2M658.5 86.5h2M900 86.5h-2M658.5 78.7h2M900 78.7h-2M658.5 71.0h3.5M900 71.0h-3.5M658.5 63.3h2M900 63.3h-2M658.5 55.5h2M900 55.5h-2M658.5 47.8h2M900 47.8h-2M658.5 40.1h3.5M900 40.1h-3.5M658.5 32.3h2M900 32.3h-2" stroke="#222" stroke-width="0.8" fill="none"/><rect x="658.5" y="21.7" width="241.5" height="303.3" fill="none" stroke="#222" stroke-width="1.2"/><path d="M664.9 318.6 L701.5 318.6 L703.8 309.3 L706.1 287.7 L708.4 267.5 L710.7 256.7 L712.4 262.9 L714.7 287.7 L716.4 307.8 L718.1 317.1 L720.4 316.3 L722.1 314.0 L723.8 315.5 L726.1 309.3 L728.4 301.6 L730.1 300.0 L731.8 302.4 L733.5 301.6 L735.3 287.7 L737.0 272.2 L738.1 263.7 L739.3 272.2 L741.0 284.6 L742.7 290.7 L744.4 309.3 L746.1 316.3 L750.7 317.8 L756.4 317.4 L762.1 316.7 L765.0 318.0 L770.7 317.7 L779.3 318.6 L790.7 318.6 L793.6 317.7 L796.5 318.6 L802.2 317.1 L807.9 316.4 L813.6 315.2 L819.3 316.7 L823.9 318.0 L827.9 318.6 L893.7 318.6" fill="none" stroke="#111" stroke-width="1.6" stroke-linejoin="round"/><path d="M664.9 318.6 L689.7 318.6 L690.2 318.6 L690.2 222.7 L690.8 222.7 L690.8 125.2 L691.6 125.2 L691.6 30.8 L692.4 29.2 L693.1 30.8 L693.1 125.2 L694.0 125.2 L694.0 222.7 L694.6 222.7 L694.6 318.6 L893.7 318.6" fill="none" stroke="#8c4a4e" stroke-width="1.45"/><path d="M664.9 318.6 L745.1 318.6 L745.6 318.6 L745.6 247.4 L746.2 247.4 L746.2 176.2 L746.9 176.2 L746.9 106.6 L747.6 105.0 L748.3 106.6 L748.3 176.2 L749.0 176.2 L749.0 247.4 L749.6 247.4 L749.6 318.6 L893.7 318.6" fill="none" stroke="#3f7a3f" stroke-width="1.45"/><path d="M664.9 318.6 L885.9 318.6 L886.4 318.6 L886.4 304.7 L887.2 304.7 L887.2 292.3 L888.0 292.3 L888.0 279.9 L888.8 278.4 L889.6 279.9 L889.6 292.3 L890.4 292.3 L890.4 304.7 L891.2 304.7 L891.2 318.6 L893.7 318.6" fill="none" stroke="#3a3a8c" stroke-width="1.45"/><rect x="840.2" y="26.5" width="57.5" height="46" fill="#777"/><rect x="839" y="25.3" width="57.5" height="46" fill="#ffffc0" stroke="#333" stroke-width="0.8"/><rect x="841.5" y="29.8" width="8" height="4.4" fill="#000"/><text x="854" y="35.0" font-family="DejaVu Sans, Liberation Sans, sans-serif" font-size="7.8" fill="#111">tau_Av_Int</text><rect x="841.5" y="41.0" width="8" height="4.4" fill="#8c4a4e"/><text x="854" y="46.2" font-family="DejaVu Sans, Liberation Sans, sans-serif" font-size="7.8" fill="#111">I[0]</text><rect x="841.5" y="52.2" width="8" height="4.4" fill="#3f7a3f"/><text x="854" y="57.4" font-family="DejaVu Sans, Liberation Sans, sans-serif" font-size="7.8" fill="#111">I[1]</text><rect x="841.5" y="63.4" width="8" height="4.4" fill="#3a3a8c"/><text x="854" y="68.6" font-family="DejaVu Sans, Liberation Sans, sans-serif" font-size="7.8" fill="#111">I[2]</text><text x="764" y="18" text-anchor="middle" font-family="Liberation Sans, sans-serif" font-weight="bold" font-size="10" fill="#111">Lifetime Histogram</text><text x="655" y="321.8" text-anchor="end" font-family="Liberation Sans, sans-serif" font-size="9.6" fill="#111">0.0</text><text x="655" y="290.9" text-anchor="end" font-family="Liberation Sans, sans-serif" font-size="9.6" fill="#111">0.2</text><text x="655" y="259.9" text-anchor="end" font-family="Liberation Sans, sans-serif" font-size="9.6" fill="#111">0.4</text><text x="655" y="228.9" text-anchor="end" font-family="Liberation Sans, sans-serif" font-size="9.6" fill="#111">0.6</text><text x="655" y="198.0" text-anchor="end" font-family="Liberation Sans, sans-serif" font-size="9.6" fill="#111">0.8</text><text x="655" y="167.1" text-anchor="end" font-family="Liberation Sans, sans-serif" font-size="9.6" fill="#111">1.0</text><text x="655" y="136.1" text-anchor="end" font-family="Liberation Sans, sans-serif" font-size="9.6" fill="#111">1.2</text><text x="655" y="105.1" text-anchor="end" font-family="Liberation Sans, sans-serif" font-size="9.6" fill="#111">1.4</text><text x="655" y="74.2" text-anchor="end" font-family="Liberation Sans, sans-serif" font-size="9.6" fill="#111">1.6</text><text x="655" y="43.3" text-anchor="end" font-family="Liberation Sans, sans-serif" font-size="9.6" fill="#111">1.8</text><text x="664.9" y="336" text-anchor="middle" font-family="Liberation Sans, sans-serif" font-size="9.6" fill="#111">0</text><text x="722.1" y="336" text-anchor="middle" font-family="Liberation Sans, sans-serif" font-size="9.6" fill="#111">1</text><text x="779.3" y="336" text-anchor="middle" font-family="Liberation Sans, sans-serif" font-size="9.6" fill="#111">2</text><text x="836.5" y="336" text-anchor="middle" font-family="Liberation Sans, sans-serif" font-size="9.6" fill="#111">3</text><text x="893.7" y="336" text-anchor="middle" font-family="Liberation Sans, sans-serif" font-size="9.6" fill="#111">4</text><text x="779" y="349" text-anchor="middle" font-family="Liberation Sans, sans-serif" font-size="9.6" fill="#111">Lifetime [ns]</text><text transform="translate(635.5,174) rotate(-90)" text-anchor="middle" font-family="Liberation Sans, sans-serif" font-size="9.6" fill="#111">Occur. [10 <tspan font-size="5.5" dy="-1.5">6</tspan><tspan dy="1.5"> Events]</tspan></text></svg>
<div class="a" style="left:910px;top:10px;width:4px;height:72px;background:#e6ede5;border:1px solid #8f968f;border-right:0"></div>
<div class="a" style="left:911px;top:268px;width:4px;height:14.5px;background:#e6eee5;border:1px solid #8f968f;border-right:0;border-radius:2px 0 0 2px"></div>
<div class="a" style="left:911px;top:288.5px;width:4px;height:14.5px;background:#e6eee5;border:1px solid #8f968f;border-right:0;border-radius:2px 0 0 2px"></div>
<div class="a" style="left:911px;top:308.5px;width:4px;height:14.5px;background:#e6eee5;border:1px solid #8f968f;border-right:0;border-radius:2px 0 0 2px"></div>
<div class="a" style="left:911px;top:328.5px;width:4px;height:14.5px;background:#e6eee5;border:1px solid #8f968f;border-right:0;border-radius:2px 0 0 2px"></div>
<div class="a" style="left:227.5px;top:362.3px;letter-spacing:-0.06px;">Number of Photons: 33228476; Selected: 33225104 (100%)</div>
<div class="a" style="left:227.5px;top:382.5px;letter-spacing:0.03px;">Lower Boundary:</div>
<div class="fld " style="left:294px;top:381.5px;width:77px;height:16px;line-height:14px;padding:0 5px;text-align:right;letter-spacing:-0.22px;">85.04 ns</div>
<div class="spin" style="left:371px;top:381.5px;height:16px"><b></b></div>
<div class="a" style="left:394px;top:382.5px;letter-spacing:0.03px;">Upper Boundary:</div>
<div class="fld " style="left:460px;top:381.5px;width:77px;height:16px;line-height:14px;padding:0 5px;text-align:right;letter-spacing:-0.27px;">132.73 ns</div>
<div class="spin" style="left:537px;top:381.5px;height:16px"><b></b></div>
<div class="btn " style="left:565px;top:381.5px;width:60px;height:16px;line-height:14px;letter-spacing:-0.21px;">Reset Range</div>
<svg class="a" style="left:222px;top:401px" width="691" height="319" viewBox="222 401 691 319"><rect x="222" y="401" width="691" height="319" fill="#fff"/><defs><clipPath id="cu"><rect x="260" y="422" width="644.5" height="187.70000000000005"/></clipPath><clipPath id="cd"><rect x="260" y="609.7" width="644.5" height="74.59999999999991"/></clipPath></defs><path d="M274.1 422V684.3M287.1 422V684.3M300.2 422V684.3M326.2 422V684.3M339.3 422V684.3M352.3 422V684.3M378.3 422V684.3M391.4 422V684.3M404.4 422V684.3M430.5 422V684.3M443.5 422V684.3M456.5 422V684.3M482.6 422V684.3M495.6 422V684.3M508.6 422V684.3M534.7 422V684.3M547.7 422V684.3M560.8 422V684.3M586.8 422V684.3M599.9 422V684.3M612.9 422V684.3M639.0 422V684.3M652.0 422V684.3M665.0 422V684.3M691.1 422V684.3M704.1 422V684.3M717.1 422V684.3M743.2 422V684.3M756.2 422V684.3M769.2 422V684.3M795.3 422V684.3M808.3 422V684.3M821.4 422V684.3M847.4 422V684.3M860.5 422V684.3M873.5 422V684.3M899.5 422V684.3M260 591.4H904.5M260 586.4H904.5M260 582.8H904.5M260 580.1H904.5M260 577.8H904.5M260 575.9H904.5M260 574.3H904.5M260 572.8H904.5M260 562.9H904.5M260 557.9H904.5M260 554.3H904.5M260 551.6H904.5M260 549.3H904.5M260 547.4H904.5M260 545.8H904.5M260 544.3H904.5M260 534.4H904.5M260 529.4H904.5M260 525.8H904.5M260 523.1H904.5M260 520.8H904.5M260 518.9H904.5M260 517.3H904.5M260 515.8H904.5M260 505.9H904.5M260 500.9H904.5M260 497.3H904.5M260 494.6H904.5M260 492.3H904.5M260 490.4H904.5M260 488.8H904.5M260 487.3H904.5M260 477.4H904.5M260 472.4H904.5M260 468.8H904.5M260 466.1H904.5M260 463.8H904.5M260 461.9H904.5M260 460.3H904.5M260 458.8H904.5M260 448.9H904.5M260 443.9H904.5M260 440.3H904.5M260 437.6H904.5M260 435.3H904.5M260 433.4H904.5M260 431.8H904.5M260 430.3H904.5M260 673.2H904.5M260 666.3H904.5M260 659.4H904.5M260 645.4H904.5M260 638.5H904.5M260 631.5H904.5M260 617.6H904.5M260 610.7H904.5" stroke="#e6e6e6" stroke-width="0.8" fill="none"/><path d="M313.2 422V684.3M365.3 422V684.3M417.4 422V684.3M469.6 422V684.3M521.7 422V684.3M573.8 422V684.3M625.9 422V684.3M678.0 422V684.3M730.2 422V684.3M782.3 422V684.3M834.4 422V684.3M886.5 422V684.3M260 600.0H904.5M260 571.5H904.5M260 543.0H904.5M260 514.5H904.5M260 486.0H904.5M260 457.5H904.5M260 429.0H904.5M260 680.2H904.5M260 652.4H904.5M260 624.6H904.5" stroke="#a8a8a8" stroke-width="1" fill="none"/><g clip-path="url(#cu)"><path d="M268.9 574.3 L269.7 569.2 L270.6 566.5 L271.4 572.8 L272.2 575.9 L273.1 570.3 L273.9 568.3 L274.7 566.5 L275.6 574.3 L276.4 575.9 L277.2 567.3 L278.1 568.3 L278.9 564.9 L279.7 566.5 L280.6 570.3 L281.4 571.5 L282.2 560.7 L283.1 571.5 L283.9 572.8 L284.7 574.3 L285.6 570.3 L286.4 570.3 L287.2 571.5 L288.1 570.3 L288.9 569.2 L289.7 567.3 L290.6 565.7 L291.4 568.3 L292.2 574.3 L293.1 562.9 L293.9 564.9 L294.7 556.7 L295.6 552.6 L296.4 542.9 L297.3 535.5 L298.1 525.9 L298.9 515.5 L299.8 508.1 L300.6 499.7 L301.4 492.8 L302.3 486.2 L303.1 480.6 L303.9 476.2 L304.8 472.7 L305.6 470.1 L306.4 468.5 L307.3 467.3 L308.1 467.0 L308.9 466.9 L309.8 467.5 L310.6 468.1 L311.4 469.0 L312.3 469.8 L313.1 470.8 L313.9 471.5 L314.8 472.4 L315.6 473.2 L316.4 474.1 L317.3 474.9 L318.1 475.8 L318.9 476.5 L319.8 477.4 L320.6 478.1 L321.4 479.0 L322.3 479.7 L323.1 480.5 L323.9 481.3 L324.8 482.1 L325.6 482.9 L326.4 483.7 L327.3 484.5 L328.1 485.2 L328.9 485.8 L329.8 486.4 L330.6 487.1 L331.4 487.8 L332.3 488.5 L333.1 489.2 L333.9 490.0 L334.8 490.5 L335.6 491.0 L336.4 492.0 L337.3 492.7 L338.1 492.9 L338.9 493.8 L339.8 494.3 L340.6 494.9 L341.4 495.8 L342.3 495.7 L343.1 496.4 L344.0 497.3 L344.8 497.7 L345.6 498.4 L346.5 499.2 L347.3 499.5 L348.1 499.9 L349.0 500.3 L349.8 500.9 L350.6 501.5 L351.5 501.7 L352.3 502.7 L353.1 502.8 L354.0 503.2 L354.8 504.0 L355.6 504.9 L356.5 505.1 L357.3 505.2 L358.1 505.6 L359.0 505.7 L359.8 506.9 L360.6 507.0 L361.5 507.2 L362.3 507.9 L363.1 509.0 L364.0 508.4 L364.8 508.3 L365.6 509.1 L366.5 510.2 L367.3 510.4 L368.1 510.6 L369.0 510.2 L369.8 511.2 L370.6 511.7 L371.5 511.6 L372.3 512.5 L373.1 512.2 L374.0 513.5 L374.8 513.8 L375.6 513.7 L376.5 513.8 L377.3 514.4 L378.1 514.9 L379.0 516.1 L379.8 516.0 L380.6 516.3 L381.5 516.7 L382.3 516.5 L383.1 517.3 L384.0 517.1 L384.8 517.8 L385.6 518.3 L386.5 518.4 L387.3 518.6 L388.1 518.7 L389.0 519.7 L389.8 519.9 L390.7 520.8 L391.5 519.7 L392.3 520.0 L393.2 521.2 L394.0 521.7 L394.8 522.4 L395.7 522.0 L396.5 522.3 L397.3 521.5 L398.2 522.9 L399.0 523.8 L399.8 525.1 L400.7 523.2 L401.5 524.2 L402.3 525.6 L403.2 524.8 L404.0 526.2 L404.8 523.5 L405.7 525.2 L406.5 525.9 L407.3 526.6 L408.2 528.2 L409.0 527.2 L409.8 528.5 L410.7 527.4 L411.5 529.5 L412.3 529.0 L413.2 527.9 L414.0 527.9 L414.8 530.2 L415.7 530.7 L416.5 529.3 L417.3 529.6 L418.2 531.3 L419.0 531.4 L419.8 531.7 L420.7 532.4 L421.5 532.3 L422.3 531.1 L423.2 531.8 L424.0 531.0 L424.8 533.1 L425.7 533.4 L426.5 534.4 L427.3 534.0 L428.2 535.3 L429.0 536.1 L429.8 534.2 L430.7 533.8 L431.5 534.6 L432.3 534.5 L433.2 535.8 L434.0 537.0 L434.8 536.5 L435.7 537.3 L436.5 538.3 L437.3 539.2 L438.2 539.3 L439.0 538.1 L439.9 538.2 L440.7 539.2 L441.5 537.5 L442.4 539.1 L443.2 538.9 L444.0 538.5 L444.9 541.0 L445.7 542.6 L446.5 539.9 L447.4 541.8 L448.2 539.8 L449.0 541.2 L449.9 540.7 L450.7 541.2 L451.5 544.9 L452.4 541.8 L453.2 543.8 L454.0 544.2 L454.9 544.1 L455.7 542.8 L456.5 543.0 L457.4 543.1 L458.2 546.9 L459.0 545.7 L459.9 548.4 L460.7 545.6 L461.5 544.9 L462.4 547.1 L463.2 546.0 L464.0 546.2 L464.9 545.4 L465.7 548.3 L466.5 548.6 L467.4 548.8 L468.2 545.3 L469.0 546.5 L469.9 548.6 L470.7 548.4 L471.5 548.8 L472.4 548.9 L473.2 549.7 L474.0 550.4 L474.9 552.1 L475.7 551.3 L476.5 547.7 L477.4 550.0 L478.2 550.9 L479.0 551.6 L479.9 551.3 L480.7 551.1 L481.5 553.2 L482.4 551.8 L483.2 552.1 L484.0 554.0 L484.9 554.3 L485.7 555.0 L486.6 555.3 L487.4 552.1 L488.2 558.3 L489.1 554.7 L489.9 555.6 L490.7 556.0 L491.6 554.7 L492.4 552.9 L493.2 555.0 L494.1 555.6 L494.9 557.1 L495.7 556.4 L496.6 554.3 L497.4 557.1 L498.2 559.2 L499.1 559.7 L499.9 559.2 L500.7 560.2 L501.6 555.0 L502.4 556.7 L503.2 558.3 L504.1 554.7 L504.9 559.7 L505.7 556.7 L506.6 556.7 L507.4 562.3 L508.2 562.9 L509.1 561.2 L509.9 557.1 L510.7 556.4 L511.6 562.9 L512.4 557.5 L513.2 561.2 L514.1 561.2 L514.9 561.7 L515.7 561.2 L516.6 565.7 L517.4 563.6 L518.2 564.2 L519.1 560.2 L519.9 556.0 L520.7 554.3 L521.6 562.9 L522.4 566.5 L523.2 562.9 L524.1 564.9 L524.9 557.1 L525.7 561.2 L526.6 564.9 L527.4 560.2 L528.2 561.7 L529.1 567.3 L529.9 564.9 L530.7 564.2 L531.6 563.6 L532.4 563.6 L533.3 564.9 L534.1 563.6 L534.9 565.7 L535.8 566.5 L536.6 559.7 L537.4 563.6 L538.3 563.6 L539.1 569.2 L539.9 564.9 L540.8 562.3 L541.6 569.2 L542.4 561.7 L543.3 566.5 L544.1 564.2 L544.9 565.7 L545.8 564.9 L546.6 561.7 L547.4 567.3 L548.3 561.2 L549.1 568.3 L549.9 569.2 L550.8 563.6 L551.6 569.2 L552.4 567.3 L553.3 563.6 L554.1 562.3 L554.9 572.8 L555.8 564.9 L556.6 560.7 L557.4 562.9 L558.3 567.3 L559.1 569.2 L559.9 568.3 L560.8 570.3 L561.6 568.3 L562.4 568.3 L563.3 567.3 L564.1 563.6 L564.9 568.3 L565.8 572.8 L566.6 564.2 L567.4 571.5 L568.3 569.2 L569.1 568.3 L569.9 569.2 L570.8 571.5 L571.6 569.2 L572.4 560.7 L573.3 570.3 L574.1 568.3 L574.9 564.2 L575.8 565.7 L576.6 565.7 L577.4 565.7 L578.3 575.9 L579.1 571.5 L580.0 568.3 L580.8 566.5 L581.6 564.2 L582.5 567.3 L583.3 569.2 L584.1 568.3 L585.0 569.2 L585.8 568.3 L586.6 566.5 L587.5 570.3 L588.3 571.5 L589.1 571.5 L590.0 564.9 L590.8 564.2 L591.6 565.7 L592.5 565.7 L593.3 566.5 L594.1 569.2 L595.0 566.5 L595.8 572.8 L596.6 570.3 L597.5 571.5 L598.3 566.5 L599.1 571.5 L600.0 569.2 L600.8 568.3 L601.6 564.2 L602.5 572.8 L603.3 572.8 L604.1 566.5 L605.0 572.8 L605.8 568.3 L606.6 571.5 L607.5 570.3 L608.3 575.9 L609.1 567.3 L610.0 571.5 L610.8 572.8 L611.6 562.3 L612.5 567.3 L613.3 556.7 L614.1 568.3 L615.0 571.5 L615.8 569.2 L616.6 563.6 L617.5 570.3 L618.3 568.3 L619.1 568.3 L620.0 572.8 L620.8 569.2 L621.6 571.5 L622.5 574.3 L623.3 566.5 L624.1 567.3 L625.0 569.2 L625.8 572.8 L626.6 577.8 L627.5 568.3 L628.3 570.3 L629.2 575.9 L630.0 570.3 L630.8 575.9 L631.7 570.3 L632.5 569.2 L633.3 568.3 L634.2 569.2 L635.0 569.2 L635.8 574.3 L636.7 571.5 L637.5 571.5 L638.3 570.3 L639.2 569.2 L640.0 567.3 L640.8 564.2 L641.7 580.1 L642.5 568.3 L643.3 570.3 L644.2 561.7 L645.0 566.5 L645.8 575.9 L646.7 568.3 L647.5 571.5 L648.3 566.5 L649.2 574.3 L650.0 570.3 L650.8 570.3 L651.7 570.3 L652.5 572.8 L653.3 577.8 L654.2 568.3 L655.0 566.5 L655.8 570.3 L656.7 574.3 L657.5 569.2 L658.3 568.3 L659.2 570.3 L660.0 570.3 L660.8 564.9 L661.7 574.3 L662.5 572.8 L663.3 577.8 L664.2 572.8 L665.0 572.8 L665.8 574.3 L666.7 572.8 L667.5 563.6 L668.3 571.5 L669.2 570.3 L670.0 562.3 L670.8 570.3 L671.7 575.9 L672.5 568.3 L673.3 574.3 L674.2 564.2 L675.0 574.3 L675.9 572.8 L676.7 575.9 L677.5 570.3 L678.4 574.3 L679.2 570.3 L680.0 571.5 L680.9 572.8 L681.7 566.5 L682.5 566.5 L683.4 570.3 L684.2 574.3 L685.0 574.3 L685.9 569.2 L686.7 561.2 L687.5 571.5 L688.4 572.8 L689.2 572.8 L690.0 574.3 L690.9 574.3 L691.7 571.5 L692.5 564.9 L693.4 570.3 L694.2 572.8 L695.0 575.9 L695.9 569.2 L696.7 570.3 L697.5 574.3 L698.4 574.3 L699.2 570.3 L700.0 566.5 L700.9 568.3 L701.7 569.2 L702.5 571.5 L703.4 569.2 L704.2 570.3 L705.0 562.3 L705.9 574.3 L706.7 571.5 L707.5 565.7 L708.4 571.5 L709.2 564.9 L710.0 570.3 L710.9 569.2 L711.7 571.5 L712.5 575.9 L713.4 574.3 L714.2 562.3 L715.0 568.3 L715.9 568.3 L716.7 566.5 L717.5 568.3 L718.4 566.5 L719.2 571.5 L720.0 571.5 L720.9 566.5 L721.7 571.5 L722.6 575.9 L723.4 571.5 L724.2 572.8 L725.1 568.3 L725.9 572.8 L726.7 574.3 L727.6 571.5 L728.4 564.2 L729.2 570.3 L730.1 569.2 L730.9 570.3 L731.7 569.2 L732.6 566.5 L733.4 564.9 L734.2 575.9 L735.1 564.9 L735.9 570.3 L736.7 571.5 L737.6 561.2 L738.4 571.5 L739.2 562.9 L740.1 566.5 L740.9 574.3 L741.7 568.3 L742.6 567.3 L743.4 570.3 L744.2 580.1 L745.1 571.5 L745.9 571.5 L746.7 574.3 L747.6 563.6 L748.4 571.5 L749.2 571.5 L750.1 571.5 L750.9 572.8 L751.7 572.8 L752.6 570.3 L753.4 569.2 L754.2 572.8 L755.1 570.3 L755.9 575.9 L756.7 568.3 L757.6 572.8 L758.4 569.2 L759.2 574.3 L760.1 572.8 L760.9 569.2 L761.7 574.3 L762.6 561.2 L763.4 570.3 L764.2 570.3 L765.1 572.8 L765.9 564.2 L766.7 564.9 L767.6 569.2 L768.4 575.9 L769.2 572.8 L770.1 568.3 L770.9 572.8 L771.8 574.3 L772.6 574.3 L773.4 572.8 L774.3 570.3 L775.1 572.8 L775.9 570.3 L776.8 559.7 L777.6 563.6 L778.4 574.3 L779.3 569.2 L780.1 570.3 L780.9 570.3 L781.8 566.5 L782.6 571.5 L783.4 571.5 L784.3 571.5 L785.1 570.3 L785.9 565.7 L786.8 567.3 L787.6 575.9 L788.4 571.5 L789.3 572.8 L790.1 567.3 L790.9 569.2 L791.8 567.3 L792.6 570.3 L793.4 577.8 L794.3 568.3 L795.1 569.2 L795.9 568.3 L796.8 575.9 L797.6 570.3 L798.4 572.8 L799.3 572.8 L800.1 569.2 L800.9 569.2 L801.8 574.3 L802.6 575.9 L803.4 580.1 L804.3 572.8 L805.1 566.5 L805.9 570.3 L806.8 577.8 L807.6 574.3 L808.4 569.2 L809.3 564.2 L810.1 565.7 L810.9 569.2 L811.8 569.2 L812.6 574.3 L813.4 571.5 L814.3 571.5 L815.1 572.8 L815.9 570.3 L816.8 571.5 L817.6 569.2 L818.5 564.9 L819.3 567.3 L820.1 569.2 L821.0 571.5 L821.8 575.9 L822.6 570.3 L823.5 568.3 L824.3 574.3 L825.1 565.7 L826.0 571.5 L826.8 569.2 L827.6 571.5 L828.5 574.3 L829.3 562.3 L830.1 574.3 L831.0 566.5 L831.8 572.8 L832.6 569.2 L833.5 572.8 L834.3 571.5 L835.1 566.5 L836.0 562.9 L836.8 572.8 L837.6 570.3 L838.5 566.5 L839.3 572.8 L840.1 567.3 L841.0 572.8 L841.8 568.3 L842.6 568.3 L843.5 565.7 L844.3 569.2 L845.1 574.3 L846.0 568.3 L846.8 574.3 L847.6 567.3 L848.5 564.9 L849.3 568.3 L850.1 572.8 L851.0 565.7 L851.8 569.2 L852.6 574.3 L853.5 571.5 L854.3 564.9 L855.1 571.5 L856.0 570.3 L856.8 571.5 L857.6 575.9 L858.5 572.8 L859.3 569.2 L860.1 569.2 L861.0 571.5 L861.8 577.8 L862.6 565.7 L863.5 567.3 L864.3 566.5 L865.2 565.7 L866.0 571.5 L866.8 572.8 L867.7 569.2 L868.5 564.2 L869.3 575.9 L870.2 571.5 L871.0 572.8 L871.8 568.3 L872.7 564.9 L873.5 571.5 L874.3 574.3 L875.2 570.3 L876.0 571.5 L876.8 575.9 L877.7 567.3 L878.5 572.8 L879.3 567.3 L880.2 575.9 L881.0 566.5 L881.8 575.9 L882.7 566.5 L883.5 577.8 L884.3 564.9 L885.2 571.5 L886.0 575.9 L886.8 571.5 L887.7 569.2 L888.5 574.3 L889.3 572.8 L890.2 569.2 L891.0 571.5 L891.8 582.8 L892.7 571.5 L893.5 568.3 L894.3 569.2 L895.2 566.5 L896.0 572.8 L896.8 560.7 L897.7 567.3 L898.5 569.2 L899.3 566.5 L900.2 566.5 L901.0 570.3 L901.8 572.8 L902.7 566.5" fill="none" stroke="#c4c4c4" stroke-width="0.8" stroke-linejoin="round"/><path d="M268.9 572.8 L269.7 582.8 L270.6 580.1 L271.4 572.8 L272.2 574.3 L273.1 572.8 L273.9 571.5 L274.7 574.3 L275.6 567.3 L276.4 577.8 L277.2 575.9 L278.1 572.8 L278.9 571.5 L279.7 570.3 L280.6 567.3 L281.4 575.9 L282.2 569.2 L283.1 572.8 L283.9 577.8 L284.7 574.3 L285.6 564.9 L286.4 570.3 L287.2 575.9 L288.1 586.4 L288.9 577.8 L289.7 577.8 L290.6 574.3 L291.4 563.6 L292.2 569.2 L293.1 568.3 L293.9 569.2 L294.7 564.2 L295.6 555.3 L296.4 548.5 L297.3 536.6 L298.1 531.6 L298.9 522.7 L299.8 513.1 L300.6 505.3 L301.4 498.3 L302.3 491.4 L303.1 486.2 L303.9 481.8 L304.8 478.1 L305.6 475.6 L306.4 473.9 L307.3 472.8 L308.1 472.3 L308.9 472.5 L309.8 473.1 L310.6 473.8 L311.4 474.5 L312.3 475.3 L313.1 476.1 L313.9 477.0 L314.8 477.8 L315.6 478.8 L316.4 479.5 L317.3 480.6 L318.1 481.2 L318.9 482.1 L319.8 482.9 L320.6 483.8 L321.4 484.7 L322.3 485.3 L323.1 485.9 L323.9 486.9 L324.8 487.6 L325.6 488.5 L326.4 489.1 L327.3 490.0 L328.1 490.6 L328.9 491.4 L329.8 492.0 L330.6 492.8 L331.4 493.6 L332.3 494.2 L333.1 494.6 L333.9 495.2 L334.8 496.2 L335.6 496.6 L336.4 497.2 L337.3 497.9 L338.1 499.0 L338.9 499.2 L339.8 500.0 L340.6 500.2 L341.4 500.8 L342.3 501.4 L343.1 502.7 L344.0 502.5 L344.8 503.0 L345.6 504.1 L346.5 504.0 L347.3 504.8 L348.1 505.3 L349.0 506.0 L349.8 506.5 L350.6 506.9 L351.5 506.3 L352.3 507.6 L353.1 508.1 L354.0 508.8 L354.8 509.2 L355.6 509.6 L356.5 510.2 L357.3 510.0 L358.1 510.8 L359.0 510.9 L359.8 512.0 L360.6 511.6 L361.5 512.4 L362.3 512.5 L363.1 513.2 L364.0 513.9 L364.8 513.4 L365.6 514.4 L366.5 514.7 L367.3 515.4 L368.1 515.3 L369.0 515.9 L369.8 516.0 L370.6 516.3 L371.5 517.1 L372.3 517.7 L373.1 517.3 L374.0 517.4 L374.8 517.8 L375.6 519.0 L376.5 518.5 L377.3 519.0 L378.1 519.3 L379.0 519.6 L379.8 520.3 L380.6 520.3 L381.5 520.3 L382.3 521.3 L383.1 522.1 L384.0 521.8 L384.8 521.9 L385.6 523.3 L386.5 523.0 L387.3 522.6 L388.1 523.4 L389.0 523.5 L389.8 524.6 L390.7 523.7 L391.5 523.5 L392.3 524.9 L393.2 525.5 L394.0 526.1 L394.8 525.2 L395.7 525.9 L396.5 526.8 L397.3 525.8 L398.2 526.4 L399.0 526.8 L399.8 528.7 L400.7 527.9 L401.5 527.7 L402.3 529.2 L403.2 528.0 L404.0 528.0 L404.8 528.5 L405.7 530.1 L406.5 530.3 L407.3 529.4 L408.2 529.7 L409.0 529.8 L409.8 530.1 L410.7 531.4 L411.5 531.9 L412.3 533.3 L413.2 531.5 L414.0 530.6 L414.8 533.1 L415.7 533.4 L416.5 532.7 L417.3 533.3 L418.2 535.0 L419.0 534.8 L419.8 535.4 L420.7 532.9 L421.5 535.6 L422.3 534.5 L423.2 533.8 L424.0 534.1 L424.8 534.8 L425.7 534.9 L426.5 537.9 L427.3 537.3 L428.2 538.0 L429.0 537.8 L429.8 535.2 L430.7 539.8 L431.5 537.8 L432.3 539.9 L433.2 537.5 L434.0 537.8 L434.8 540.0 L435.7 537.5 L436.5 539.9 L437.3 538.9 L438.2 540.2 L439.0 541.5 L439.9 541.6 L440.7 541.5 L441.5 540.9 L442.4 541.8 L443.2 539.4 L444.0 542.7 L444.9 543.3 L445.7 543.9 L446.5 544.3 L447.4 545.4 L448.2 545.1 L449.0 542.9 L449.9 544.3 L450.7 544.9 L451.5 544.4 L452.4 543.7 L453.2 544.6 L454.0 544.6 L454.9 546.7 L455.7 546.6 L456.5 547.6 L457.4 546.9 L458.2 548.2 L459.0 547.8 L459.9 547.8 L460.7 548.1 L461.5 548.5 L462.4 549.1 L463.2 546.5 L464.0 549.3 L464.9 550.6 L465.7 549.0 L466.5 551.3 L467.4 551.6 L468.2 550.0 L469.0 553.2 L469.9 556.0 L470.7 550.4 L471.5 549.3 L472.4 554.3 L473.2 553.2 L474.0 550.9 L474.9 555.6 L475.7 554.0 L476.5 554.7 L477.4 553.2 L478.2 556.7 L479.0 551.6 L479.9 553.7 L480.7 553.2 L481.5 554.7 L482.4 558.3 L483.2 554.7 L484.0 557.5 L484.9 555.0 L485.7 556.7 L486.6 556.0 L487.4 556.0 L488.2 554.3 L489.1 554.3 L489.9 558.3 L490.7 556.7 L491.6 553.7 L492.4 556.0 L493.2 558.8 L494.1 557.5 L494.9 558.3 L495.7 555.6 L496.6 557.9 L497.4 557.5 L498.2 553.4 L499.1 561.7 L499.9 561.2 L500.7 562.9 L501.6 562.9 L502.4 557.5 L503.2 559.2 L504.1 556.0 L504.9 564.9 L505.7 562.3 L506.6 556.7 L507.4 558.3 L508.2 558.8 L509.1 558.8 L509.9 561.2 L510.7 561.7 L511.6 561.7 L512.4 559.7 L513.2 562.3 L514.1 561.2 L514.9 558.3 L515.7 565.7 L516.6 564.9 L517.4 561.2 L518.2 563.6 L519.1 563.6 L519.9 557.5 L520.7 562.3 L521.6 564.9 L522.4 560.7 L523.2 556.7 L524.1 567.3 L524.9 566.5 L525.7 564.2 L526.6 566.5 L527.4 558.3 L528.2 563.6 L529.1 566.5 L529.9 564.2 L530.7 568.3 L531.6 567.3 L532.4 565.7 L533.3 558.3 L534.1 572.8 L534.9 564.9 L535.8 562.3 L536.6 564.2 L537.4 560.7 L538.3 565.7 L539.1 566.5 L539.9 567.3 L540.8 570.3 L541.6 561.7 L542.4 571.5 L543.3 568.3 L544.1 569.2 L544.9 570.3 L545.8 575.9 L546.6 569.2 L547.4 567.3 L548.3 567.3 L549.1 565.7 L549.9 569.2 L550.8 570.3 L551.6 567.3 L552.4 566.5 L553.3 571.5 L554.1 574.3 L554.9 572.8 L555.8 565.7 L556.6 565.7 L557.4 572.8 L558.3 569.2 L559.1 566.5 L559.9 564.9 L560.8 572.8 L561.6 570.3 L562.4 564.9 L563.3 561.2 L564.1 564.2 L564.9 574.3 L565.8 568.3 L566.6 571.5 L567.4 570.3 L568.3 572.8 L569.1 572.8 L569.9 570.3 L570.8 564.2 L571.6 568.3 L572.4 569.2 L573.3 570.3 L574.1 574.3 L574.9 571.5 L575.8 566.5 L576.6 568.3 L577.4 563.6 L578.3 570.3 L579.1 571.5 L580.0 577.8 L580.8 570.3 L581.6 577.8 L582.5 565.7 L583.3 574.3 L584.1 571.5 L585.0 577.8 L585.8 574.3 L586.6 575.9 L587.5 567.3 L588.3 571.5 L589.1 575.9 L590.0 580.1 L590.8 572.8 L591.6 574.3 L592.5 575.9 L593.3 570.3 L594.1 572.8 L595.0 571.5 L595.8 574.3 L596.6 574.3 L597.5 574.3 L598.3 580.1 L599.1 570.3 L600.0 571.5 L600.8 580.1 L601.6 572.8 L602.5 568.3 L603.3 571.5 L604.1 567.3 L605.0 574.3 L605.8 572.8 L606.6 577.8 L607.5 575.9 L608.3 580.1 L609.1 575.9 L610.0 571.5 L610.8 570.3 L611.6 568.3 L612.5 572.8 L613.3 577.8 L614.1 571.5 L615.0 574.3 L615.8 565.7 L616.6 564.9 L617.5 569.2 L618.3 577.8 L619.1 575.9 L620.0 572.8 L620.8 575.9 L621.6 571.5 L622.5 570.3 L623.3 570.3 L624.1 572.8 L625.0 577.8 L625.8 577.8 L626.6 574.3 L627.5 568.3 L628.3 566.5 L629.2 569.2 L630.0 571.5 L630.8 570.3 L631.7 570.3 L632.5 568.3 L633.3 570.3 L634.2 580.1 L635.0 569.2 L635.8 571.5 L636.7 575.9 L637.5 571.5 L638.3 572.8 L639.2 574.3 L640.0 580.1 L640.8 572.8 L641.7 571.5 L642.5 574.3 L643.3 580.1 L644.2 571.5 L645.0 570.3 L645.8 572.8 L646.7 571.5 L647.5 575.9 L648.3 575.9 L649.2 571.5 L650.0 575.9 L650.8 572.8 L651.7 559.7 L652.5 570.3 L653.3 572.8 L654.2 580.1 L655.0 572.8 L655.8 570.3 L656.7 577.8 L657.5 574.3 L658.3 582.8 L659.2 571.5 L660.0 575.9 L660.8 571.5 L661.7 568.3 L662.5 574.3 L663.3 569.2 L664.2 572.8 L665.0 574.3 L665.8 575.9 L666.7 577.8 L667.5 568.3 L668.3 570.3 L669.2 577.8 L670.0 570.3 L670.8 577.8 L671.7 580.1 L672.5 569.2 L673.3 580.1 L674.2 569.2 L675.0 572.8 L675.9 570.3 L676.7 571.5 L677.5 569.2 L678.4 572.8 L679.2 571.5 L680.0 572.8 L680.9 569.2 L681.7 575.9 L682.5 569.2 L683.4 567.3 L684.2 574.3 L685.0 572.8 L685.9 575.9 L686.7 575.9 L687.5 572.8 L688.4 575.9 L689.2 577.8 L690.0 574.3 L690.9 572.8 L691.7 572.8 L692.5 571.5 L693.4 582.8 L694.2 568.3 L695.0 574.3 L695.9 577.8 L696.7 575.9 L697.5 572.8 L698.4 570.3 L699.2 575.9 L700.0 572.8 L700.9 580.1 L701.7 572.8 L702.5 574.3 L703.4 575.9 L704.2 570.3 L705.0 566.5 L705.9 569.2 L706.7 577.8 L707.5 567.3 L708.4 575.9 L709.2 574.3 L710.0 575.9 L710.9 572.8 L711.7 571.5 L712.5 574.3 L713.4 575.9 L714.2 574.3 L715.0 575.9 L715.9 570.3 L716.7 575.9 L717.5 574.3 L718.4 575.9 L719.2 577.8 L720.0 575.9 L720.9 580.1 L721.7 572.8 L722.6 571.5 L723.4 575.9 L724.2 567.3 L725.1 577.8 L725.9 571.5 L726.7 571.5 L727.6 575.9 L728.4 575.9 L729.2 570.3 L730.1 574.3 L730.9 572.8 L731.7 568.3 L732.6 572.8 L733.4 582.8 L734.2 577.8 L735.1 570.3 L735.9 574.3 L736.7 580.1 L737.6 582.8 L738.4 572.8 L739.2 567.3 L740.1 580.1 L740.9 582.8 L741.7 571.5 L742.6 575.9 L743.4 575.9 L744.2 575.9 L745.1 577.8 L745.9 572.8 L746.7 570.3 L747.6 572.8 L748.4 575.9 L749.2 569.2 L750.1 574.3 L750.9 571.5 L751.7 577.8 L752.6 571.5 L753.4 571.5 L754.2 568.3 L755.1 574.3 L755.9 572.8 L756.7 575.9 L757.6 570.3 L758.4 570.3 L759.2 569.2 L760.1 575.9 L760.9 580.1 L761.7 574.3 L762.6 575.9 L763.4 577.8 L764.2 571.5 L765.1 570.3 L765.9 572.8 L766.7 569.2 L767.6 572.8 L768.4 577.8 L769.2 575.9 L770.1 575.9 L770.9 571.5 L771.8 570.3 L772.6 574.3 L773.4 570.3 L774.3 577.8 L775.1 574.3 L775.9 567.3 L776.8 572.8 L777.6 569.2 L778.4 582.8 L779.3 582.8 L780.1 577.8 L780.9 570.3 L781.8 567.3 L782.6 577.8 L783.4 577.8 L784.3 577.8 L785.1 577.8 L785.9 571.5 L786.8 575.9 L787.6 566.5 L788.4 571.5 L789.3 577.8 L790.1 572.8 L790.9 574.3 L791.8 570.3 L792.6 570.3 L793.4 575.9 L794.3 570.3 L795.1 571.5 L795.9 574.3 L796.8 572.8 L797.6 571.5 L798.4 575.9 L799.3 577.8 L800.1 569.2 L800.9 574.3 L801.8 575.9 L802.6 572.8 L803.4 580.1 L804.3 574.3 L805.1 580.1 L805.9 575.9 L806.8 582.8 L807.6 577.8 L808.4 570.3 L809.3 574.3 L810.1 580.1 L810.9 566.5 L811.8 577.8 L812.6 568.3 L813.4 575.9 L814.3 580.1 L815.1 566.5 L815.9 575.9 L816.8 571.5 L817.6 569.2 L818.5 580.1 L819.3 574.3 L820.1 575.9 L821.0 571.5 L821.8 574.3 L822.6 580.1 L823.5 574.3 L824.3 571.5 L825.1 575.9 L826.0 571.5 L826.8 575.9 L827.6 574.3 L828.5 572.8 L829.3 574.3 L830.1 569.2 L831.0 570.3 L831.8 570.3 L832.6 571.5 L833.5 574.3 L834.3 580.1 L835.1 569.2 L836.0 566.5 L836.8 572.8 L837.6 575.9 L838.5 574.3 L839.3 569.2 L840.1 572.8 L841.0 577.8 L841.8 574.3 L842.6 577.8 L843.5 575.9 L844.3 577.8 L845.1 577.8 L846.0 568.3 L846.8 569.2 L847.6 580.1 L848.5 577.8 L849.3 575.9 L850.1 575.9 L851.0 580.1 L851.8 570.3 L852.6 580.1 L853.5 571.5 L854.3 571.5 L855.1 575.9 L856.0 577.8 L856.8 574.3 L857.6 574.3 L858.5 582.8 L859.3 580.1 L860.1 571.5 L861.0 574.3 L861.8 575.9 L862.6 577.8 L863.5 577.8 L864.3 577.8 L865.2 562.3 L866.0 580.1 L866.8 567.3 L867.7 572.8 L868.5 572.8 L869.3 572.8 L870.2 575.9 L871.0 567.3 L871.8 571.5 L872.7 574.3 L873.5 574.3 L874.3 572.8 L875.2 580.1 L876.0 575.9 L876.8 577.8 L877.7 571.5 L878.5 571.5 L879.3 582.8 L880.2 575.9 L881.0 570.3 L881.8 580.1 L882.7 580.1 L883.5 570.3 L884.3 574.3 L885.2 575.9 L886.0 580.1 L886.8 572.8 L887.7 575.9 L888.5 572.8 L889.3 572.8 L890.2 571.5 L891.0 575.9 L891.8 575.9 L892.7 574.3 L893.5 574.3 L894.3 572.8 L895.2 575.9 L896.0 575.9 L896.8 575.9 L897.7 575.9 L898.5 574.3 L899.3 569.2 L900.2 575.9 L901.0 571.5 L901.8 572.8 L902.7 574.3" fill="none" stroke="#c4c4c4" stroke-width="0.8" stroke-linejoin="round"/><path d="M268.9 574.3 L269.7 580.1 L270.6 574.3 L271.4 575.9 L272.2 600.0 L273.1 575.9 L273.9 574.3 L274.7 568.3 L275.6 582.8 L276.4 577.8 L277.2 575.9 L278.1 582.8 L278.9 571.5 L279.7 575.9 L280.6 582.8 L281.4 582.8 L282.2 580.1 L283.1 565.7 L283.9 567.3 L284.7 591.4 L285.6 586.4 L286.4 574.3 L287.2 577.8 L288.1 580.1 L288.9 574.3 L289.7 577.8 L290.6 575.9 L291.4 575.9 L292.2 582.8 L293.1 570.3 L293.9 575.9 L294.7 567.3 L295.6 565.7 L296.4 562.9 L297.3 557.1 L298.1 550.9 L298.9 545.9 L299.8 536.4 L300.6 528.4 L301.4 522.5 L302.3 516.0 L303.1 509.6 L303.9 505.3 L304.8 502.4 L305.6 499.4 L306.4 497.8 L307.3 496.5 L308.1 496.3 L308.9 496.3 L309.8 496.8 L310.6 497.2 L311.4 498.1 L312.3 499.0 L313.1 499.8 L313.9 500.6 L314.8 501.1 L315.6 502.3 L316.4 503.2 L317.3 503.8 L318.1 504.1 L318.9 505.3 L319.8 505.7 L320.6 506.4 L321.4 507.5 L322.3 507.9 L323.1 508.7 L323.9 509.5 L324.8 510.5 L325.6 511.0 L326.4 512.1 L327.3 512.4 L328.1 513.2 L328.9 513.5 L329.8 514.2 L330.6 515.2 L331.4 515.3 L332.3 515.8 L333.1 516.9 L333.9 517.9 L334.8 517.9 L335.6 519.9 L336.4 519.6 L337.3 519.7 L338.1 519.5 L338.9 521.5 L339.8 520.9 L340.6 521.0 L341.4 521.8 L342.3 524.6 L343.1 523.2 L344.0 524.3 L344.8 524.3 L345.6 525.5 L346.5 526.3 L347.3 526.6 L348.1 526.0 L349.0 526.9 L349.8 528.1 L350.6 528.1 L351.5 528.2 L352.3 528.9 L353.1 529.8 L354.0 530.7 L354.8 531.2 L355.6 531.4 L356.5 531.9 L357.3 533.2 L358.1 533.5 L359.0 532.0 L359.8 534.1 L360.6 534.7 L361.5 534.0 L362.3 533.1 L363.1 533.6 L364.0 535.5 L364.8 536.4 L365.6 536.4 L366.5 537.1 L367.3 537.1 L368.1 536.5 L369.0 538.4 L369.8 538.5 L370.6 538.3 L371.5 538.4 L372.3 539.6 L373.1 539.9 L374.0 540.7 L374.8 540.6 L375.6 539.6 L376.5 540.7 L377.3 544.3 L378.1 540.4 L379.0 541.5 L379.8 542.8 L380.6 542.4 L381.5 546.1 L382.3 544.8 L383.1 541.6 L384.0 540.7 L384.8 540.9 L385.6 544.9 L386.5 544.3 L387.3 543.6 L388.1 546.6 L389.0 542.9 L389.8 546.5 L390.7 545.3 L391.5 547.7 L392.3 545.9 L393.2 546.8 L394.0 545.5 L394.8 549.0 L395.7 547.6 L396.5 545.2 L397.3 550.0 L398.2 547.9 L399.0 548.1 L399.8 549.7 L400.7 549.7 L401.5 547.3 L402.3 548.0 L403.2 549.2 L404.0 550.0 L404.8 552.6 L405.7 550.9 L406.5 548.2 L407.3 549.7 L408.2 554.3 L409.0 556.0 L409.8 553.7 L410.7 552.3 L411.5 554.0 L412.3 553.7 L413.2 552.9 L414.0 552.1 L414.8 553.7 L415.7 551.8 L416.5 557.5 L417.3 553.7 L418.2 554.3 L419.0 558.3 L419.8 552.9 L420.7 559.2 L421.5 559.2 L422.3 550.6 L423.2 553.7 L424.0 556.0 L424.8 554.0 L425.7 554.7 L426.5 560.2 L427.3 556.7 L428.2 555.0 L429.0 558.8 L429.8 558.3 L430.7 559.7 L431.5 557.5 L432.3 560.7 L433.2 561.2 L434.0 562.9 L434.8 562.3 L435.7 559.7 L436.5 559.2 L437.3 561.7 L438.2 563.6 L439.0 560.2 L439.9 560.7 L440.7 558.3 L441.5 562.9 L442.4 562.9 L443.2 560.7 L444.0 558.3 L444.9 562.9 L445.7 562.9 L446.5 565.7 L447.4 564.2 L448.2 560.7 L449.0 561.2 L449.9 560.7 L450.7 569.2 L451.5 561.7 L452.4 567.3 L453.2 562.9 L454.0 571.5 L454.9 565.7 L455.7 568.3 L456.5 561.7 L457.4 565.7 L458.2 561.7 L459.0 567.3 L459.9 560.2 L460.7 568.3 L461.5 560.7 L462.4 568.3 L463.2 570.3 L464.0 564.2 L464.9 568.3 L465.7 567.3 L466.5 572.8 L467.4 569.2 L468.2 567.3 L469.0 570.3 L469.9 567.3 L470.7 575.9 L471.5 565.7 L472.4 570.3 L473.2 563.6 L474.0 570.3 L474.9 571.5 L475.7 571.5 L476.5 568.3 L477.4 567.3 L478.2 571.5 L479.0 572.8 L479.9 568.3 L480.7 567.3 L481.5 577.8 L482.4 574.3 L483.2 572.8 L484.0 564.2 L484.9 566.5 L485.7 568.3 L486.6 569.2 L487.4 575.9 L488.2 567.3 L489.1 572.8 L489.9 574.3 L490.7 564.2 L491.6 577.8 L492.4 566.5 L493.2 571.5 L494.1 575.9 L494.9 571.5 L495.7 575.9 L496.6 571.5 L497.4 575.9 L498.2 577.8 L499.1 561.7 L499.9 575.9 L500.7 569.2 L501.6 572.8 L502.4 570.3 L503.2 577.8 L504.1 577.8 L504.9 586.4 L505.7 569.2 L506.6 571.5 L507.4 580.1 L508.2 570.3 L509.1 571.5 L509.9 561.2 L510.7 572.8 L511.6 570.3 L512.4 571.5 L513.2 571.5 L514.1 574.3 L514.9 575.9 L515.7 571.5 L516.6 569.2 L517.4 580.1 L518.2 580.1 L519.1 574.3 L519.9 566.5 L520.7 575.9 L521.6 582.8 L522.4 571.5 L523.2 571.5 L524.1 566.5 L524.9 574.3 L525.7 566.5 L526.6 577.8 L527.4 571.5 L528.2 574.3 L529.1 580.1 L529.9 577.8 L530.7 569.2 L531.6 570.3 L532.4 577.8 L533.3 570.3 L534.1 571.5 L534.9 571.5 L535.8 574.3 L536.6 574.3 L537.4 580.1 L538.3 575.9 L539.1 575.9 L539.9 580.1 L540.8 577.8 L541.6 575.9 L542.4 575.9 L543.3 571.5 L544.1 580.1 L544.9 577.8 L545.8 575.9 L546.6 577.8 L547.4 574.3 L548.3 577.8 L549.1 570.3 L549.9 577.8 L550.8 582.8 L551.6 572.8 L552.4 568.3 L553.3 586.4 L554.1 577.8 L554.9 575.9 L555.8 571.5 L556.6 569.2 L557.4 577.8 L558.3 582.8 L559.1 574.3 L559.9 571.5 L560.8 574.3 L561.6 575.9 L562.4 580.1 L563.3 564.9 L564.1 582.8 L564.9 582.8 L565.8 572.8 L566.6 575.9 L567.4 574.3 L568.3 575.9 L569.1 568.3 L569.9 570.3 L570.8 580.1 L571.6 571.5 L572.4 582.8 L573.3 586.4 L574.1 571.5 L574.9 580.1 L575.8 586.4 L576.6 577.8 L577.4 580.1 L578.3 574.3 L579.1 577.8 L580.0 580.1 L580.8 580.1 L581.6 572.8 L582.5 582.8 L583.3 575.9 L584.1 582.8 L585.0 574.3 L585.8 568.3 L586.6 574.3 L587.5 571.5 L588.3 575.9 L589.1 582.8 L590.0 577.8 L590.8 577.8 L591.6 575.9 L592.5 580.1 L593.3 574.3 L594.1 580.1 L595.0 577.8 L595.8 577.8 L596.6 582.8 L597.5 572.8 L598.3 577.8 L599.1 577.8 L600.0 577.8 L600.8 586.4 L601.6 586.4 L602.5 582.8 L603.3 572.8 L604.1 580.1 L605.0 574.3 L605.8 582.8 L606.6 582.8 L607.5 580.1 L608.3 572.8 L609.1 586.4 L610.0 577.8 L610.8 575.9 L611.6 577.8 L612.5 577.8 L613.3 574.3 L614.1 575.9 L615.0 582.8 L615.8 574.3 L616.6 582.8 L617.5 580.1 L618.3 570.3 L619.1 564.9 L620.0 570.3 L620.8 575.9 L621.6 582.8 L622.5 582.8 L623.3 569.2 L624.1 575.9 L625.0 586.4 L625.8 569.2 L626.6 574.3 L627.5 571.5 L628.3 575.9 L629.2 586.4 L630.0 582.8 L630.8 577.8 L631.7 577.8 L632.5 570.3 L633.3 580.1 L634.2 577.8 L635.0 577.8 L635.8 577.8 L636.7 582.8 L637.5 582.8 L638.3 591.4 L639.2 575.9 L640.0 577.8 L640.8 575.9 L641.7 582.8 L642.5 577.8 L643.3 582.8 L644.2 582.8 L645.0 575.9 L645.8 574.3 L646.7 574.3 L647.5 577.8 L648.3 580.1 L649.2 570.3 L650.0 571.5 L650.8 580.1 L651.7 582.8 L652.5 575.9 L653.3 575.9 L654.2 582.8 L655.0 566.5 L655.8 586.4 L656.7 582.8 L657.5 575.9 L658.3 572.8 L659.2 586.4 L660.0 580.1 L660.8 570.3 L661.7 570.3 L662.5 580.1 L663.3 577.8 L664.2 582.8 L665.0 575.9 L665.8 582.8 L666.7 586.4 L667.5 586.4 L668.3 577.8 L669.2 582.8 L670.0 571.5 L670.8 571.5 L671.7 572.8 L672.5 574.3 L673.3 571.5 L674.2 575.9 L675.0 572.8 L675.9 575.9 L676.7 574.3 L677.5 582.8 L678.4 580.1 L679.2 582.8 L680.0 574.3 L680.9 575.9 L681.7 582.8 L682.5 582.8 L683.4 580.1 L684.2 572.8 L685.0 577.8 L685.9 580.1 L686.7 580.1 L687.5 577.8 L688.4 569.2 L689.2 580.1 L690.0 580.1 L690.9 569.2 L691.7 574.3 L692.5 582.8 L693.4 572.8 L694.2 582.8 L695.0 574.3 L695.9 591.4 L696.7 582.8 L697.5 572.8 L698.4 580.1 L699.2 582.8 L700.0 577.8 L700.9 577.8 L701.7 580.1 L702.5 580.1 L703.4 568.3 L704.2 570.3 L705.0 575.9 L705.9 582.8 L706.7 580.1 L707.5 580.1 L708.4 575.9 L709.2 569.2 L710.0 580.1 L710.9 577.8 L711.7 580.1 L712.5 577.8 L713.4 580.1 L714.2 575.9 L715.0 571.5 L715.9 580.1 L716.7 580.1 L717.5 577.8 L718.4 582.8 L719.2 568.3 L720.0 586.4 L720.9 580.1 L721.7 582.8 L722.6 570.3 L723.4 580.1 L724.2 580.1 L725.1 568.3 L725.9 577.8 L726.7 582.8 L727.6 577.8 L728.4 575.9 L729.2 582.8 L730.1 577.8 L730.9 577.8 L731.7 574.3 L732.6 574.3 L733.4 574.3 L734.2 577.8 L735.1 574.3 L735.9 577.8 L736.7 571.5 L737.6 575.9 L738.4 580.1 L739.2 571.5 L740.1 586.4 L740.9 582.8 L741.7 582.8 L742.6 577.8 L743.4 582.8 L744.2 582.8 L745.1 586.4 L745.9 577.8 L746.7 582.8 L747.6 566.5 L748.4 574.3 L749.2 582.8 L750.1 571.5 L750.9 577.8 L751.7 572.8 L752.6 582.8 L753.4 571.5 L754.2 572.8 L755.1 580.1 L755.9 582.8 L756.7 580.1 L757.6 575.9 L758.4 565.7 L759.2 568.3 L760.1 570.3 L760.9 577.8 L761.7 580.1 L762.6 575.9 L763.4 580.1 L764.2 580.1 L765.1 577.8 L765.9 572.8 L766.7 577.8 L767.6 575.9 L768.4 580.1 L769.2 577.8 L770.1 580.1 L770.9 571.5 L771.8 575.9 L772.6 570.3 L773.4 577.8 L774.3 572.8 L775.1 586.4 L775.9 580.1 L776.8 577.8 L777.6 580.1 L778.4 577.8 L779.3 582.8 L780.1 577.8 L780.9 580.1 L781.8 577.8 L782.6 580.1 L783.4 582.8 L784.3 580.1 L785.1 577.8 L785.9 582.8 L786.8 577.8 L787.6 571.5 L788.4 580.1 L789.3 574.3 L790.1 574.3 L790.9 582.8 L791.8 571.5 L792.6 564.9 L793.4 582.8 L794.3 566.5 L795.1 580.1 L795.9 570.3 L796.8 586.4 L797.6 571.5 L798.4 577.8 L799.3 582.8 L800.1 582.8 L800.9 582.8 L801.8 582.8 L802.6 575.9 L803.4 577.8 L804.3 591.4 L805.1 580.1 L805.9 575.9 L806.8 577.8 L807.6 569.2 L808.4 586.4 L809.3 575.9 L810.1 577.8 L810.9 574.3 L811.8 586.4 L812.6 582.8 L813.4 577.8 L814.3 577.8 L815.1 586.4 L815.9 575.9 L816.8 577.8 L817.6 574.3 L818.5 591.4 L819.3 575.9 L820.1 582.8 L821.0 580.1 L821.8 574.3 L822.6 569.2 L823.5 577.8 L824.3 577.8 L825.1 571.5 L826.0 582.8 L826.8 577.8 L827.6 580.1 L828.5 582.8 L829.3 575.9 L830.1 567.3 L831.0 575.9 L831.8 575.9 L832.6 577.8 L833.5 571.5 L834.3 577.8 L835.1 582.8 L836.0 577.8 L836.8 570.3 L837.6 577.8 L838.5 571.5 L839.3 577.8 L840.1 567.3 L841.0 575.9 L841.8 574.3 L842.6 580.1 L843.5 574.3 L844.3 580.1 L845.1 586.4 L846.0 575.9 L846.8 582.8 L847.6 570.3 L848.5 574.3 L849.3 577.8 L850.1 574.3 L851.0 591.4 L851.8 570.3 L852.6 580.1 L853.5 574.3 L854.3 564.9 L855.1 586.4 L856.0 580.1 L856.8 575.9 L857.6 575.9 L858.5 586.4 L859.3 582.8 L860.1 570.3 L861.0 580.1 L861.8 574.3 L862.6 586.4 L863.5 582.8 L864.3 586.4 L865.2 575.9 L866.0 571.5 L866.8 577.8 L867.7 580.1 L868.5 575.9 L869.3 575.9 L870.2 580.1 L871.0 574.3 L871.8 568.3 L872.7 566.5 L873.5 580.1 L874.3 582.8 L875.2 568.3 L876.0 572.8 L876.8 571.5 L877.7 574.3 L878.5 580.1 L879.3 572.8 L880.2 571.5 L881.0 571.5 L881.8 582.8 L882.7 572.8 L883.5 580.1 L884.3 580.1 L885.2 575.9 L886.0 580.1 L886.8 565.7 L887.7 574.3 L888.5 575.9 L889.3 577.8 L890.2 575.9 L891.0 580.1 L891.8 574.3 L892.7 572.8 L893.5 574.3 L894.3 582.8 L895.2 580.1 L896.0 577.8 L896.8 582.8 L897.7 575.9 L898.5 577.8 L899.3 577.8 L900.2 575.9 L901.0 580.1 L901.8 570.3 L902.7 572.8" fill="none" stroke="#c4c4c4" stroke-width="0.8" stroke-linejoin="round"/><path d="M268.9 586.4 L269.7 580.1 L270.6 577.8 L271.4 586.4 L272.2 586.4 L273.1 577.8 L273.9 600.0 L274.7 591.4 L275.6 580.1 L276.4 580.1 L277.2 586.4 L278.1 577.8 L278.9 569.2 L279.7 582.8 L280.6 582.8 L281.4 582.8 L282.2 591.4 L283.1 580.1 L283.9 582.8 L284.7 577.8 L285.6 574.3 L286.4 582.8 L287.2 582.8 L288.1 580.1 L288.9 571.5 L289.7 591.4 L290.6 582.8 L291.4 586.4 L292.2 582.8 L293.1 575.9 L293.9 580.1 L294.7 572.8 L295.6 572.8 L296.4 570.3 L297.3 564.2 L298.1 559.2 L298.9 548.8 L299.8 542.1 L300.6 533.5 L301.4 526.6 L302.3 521.5 L303.1 516.1 L303.9 510.9 L304.8 507.9 L305.6 505.1 L306.4 503.2 L307.3 502.4 L308.1 501.4 L308.9 502.0 L309.8 502.0 L310.6 502.9 L311.4 504.2 L312.3 504.3 L313.1 505.1 L313.9 505.6 L314.8 506.6 L315.6 507.5 L316.4 508.2 L317.3 508.9 L318.1 509.3 L318.9 510.3 L319.8 510.5 L320.6 511.4 L321.4 512.7 L322.3 512.7 L323.1 514.7 L323.9 514.5 L324.8 515.6 L325.6 515.9 L326.4 516.0 L327.3 517.2 L328.1 517.9 L328.9 517.9 L329.8 519.5 L330.6 520.2 L331.4 519.9 L332.3 520.7 L333.1 522.4 L333.9 522.2 L334.8 522.4 L335.6 523.6 L336.4 524.3 L337.3 524.5 L338.1 525.1 L338.9 526.2 L339.8 525.8 L340.6 527.9 L341.4 527.5 L342.3 526.5 L343.1 529.2 L344.0 529.0 L344.8 531.2 L345.6 530.6 L346.5 531.4 L347.3 531.0 L348.1 531.9 L349.0 530.5 L349.8 533.2 L350.6 533.0 L351.5 533.2 L352.3 533.3 L353.1 533.5 L354.0 536.1 L354.8 533.2 L355.6 535.9 L356.5 536.7 L357.3 538.0 L358.1 537.3 L359.0 539.0 L359.8 537.5 L360.6 538.7 L361.5 538.1 L362.3 539.7 L363.1 539.2 L364.0 537.2 L364.8 538.7 L365.6 540.2 L366.5 541.8 L367.3 539.4 L368.1 543.4 L369.0 543.5 L369.8 540.6 L370.6 543.2 L371.5 541.2 L372.3 542.5 L373.1 540.7 L374.0 541.5 L374.8 543.4 L375.6 545.3 L376.5 544.0 L377.3 543.2 L378.1 545.3 L379.0 549.7 L379.8 546.6 L380.6 546.9 L381.5 546.8 L382.3 547.5 L383.1 545.6 L384.0 549.5 L384.8 547.3 L385.6 551.3 L386.5 551.8 L387.3 550.4 L388.1 550.4 L389.0 550.9 L389.8 550.9 L390.7 549.0 L391.5 549.3 L392.3 550.4 L393.2 550.6 L394.0 552.3 L394.8 553.2 L395.7 554.3 L396.5 552.6 L397.3 554.3 L398.2 553.2 L399.0 551.6 L399.8 552.1 L400.7 550.9 L401.5 555.3 L402.3 558.3 L403.2 556.4 L404.0 550.4 L404.8 553.2 L405.7 556.0 L406.5 552.6 L407.3 556.4 L408.2 552.3 L409.0 556.7 L409.8 557.1 L410.7 555.0 L411.5 559.2 L412.3 557.5 L413.2 552.9 L414.0 556.7 L414.8 560.2 L415.7 558.8 L416.5 558.3 L417.3 560.2 L418.2 557.9 L419.0 556.0 L419.8 559.2 L420.7 557.5 L421.5 559.2 L422.3 559.7 L423.2 562.3 L424.0 557.9 L424.8 557.1 L425.7 562.3 L426.5 563.6 L427.3 560.2 L428.2 561.2 L429.0 558.8 L429.8 560.7 L430.7 562.9 L431.5 566.5 L432.3 561.2 L433.2 562.9 L434.0 566.5 L434.8 567.3 L435.7 569.2 L436.5 562.3 L437.3 565.7 L438.2 574.3 L439.0 567.3 L439.9 566.5 L440.7 565.7 L441.5 564.9 L442.4 566.5 L443.2 563.6 L444.0 562.9 L444.9 566.5 L445.7 561.2 L446.5 567.3 L447.4 569.2 L448.2 566.5 L449.0 571.5 L449.9 568.3 L450.7 571.5 L451.5 569.2 L452.4 567.3 L453.2 575.9 L454.0 567.3 L454.9 567.3 L455.7 569.2 L456.5 566.5 L457.4 568.3 L458.2 570.3 L459.0 572.8 L459.9 567.3 L460.7 567.3 L461.5 575.9 L462.4 572.8 L463.2 574.3 L464.0 567.3 L464.9 572.8 L465.7 575.9 L466.5 565.7 L467.4 569.2 L468.2 570.3 L469.0 570.3 L469.9 572.8 L470.7 571.5 L471.5 568.3 L472.4 570.3 L473.2 574.3 L474.0 572.8 L474.9 564.9 L475.7 575.9 L476.5 577.8 L477.4 572.8 L478.2 577.8 L479.0 562.3 L479.9 571.5 L480.7 571.5 L481.5 572.8 L482.4 565.7 L483.2 577.8 L484.0 574.3 L484.9 582.8 L485.7 569.2 L486.6 575.9 L487.4 567.3 L488.2 575.9 L489.1 580.1 L489.9 577.8 L490.7 571.5 L491.6 580.1 L492.4 574.3 L493.2 580.1 L494.1 580.1 L494.9 577.8 L495.7 568.3 L496.6 582.8 L497.4 574.3 L498.2 572.8 L499.1 580.1 L499.9 582.8 L500.7 569.2 L501.6 568.3 L502.4 577.8 L503.2 582.8 L504.1 572.8 L504.9 577.8 L505.7 582.8 L506.6 580.1 L507.4 591.4 L508.2 582.8 L509.1 582.8 L509.9 586.4 L510.7 575.9 L511.6 577.8 L512.4 569.2 L513.2 591.4 L514.1 582.8 L514.9 582.8 L515.7 571.5 L516.6 572.8 L517.4 577.8 L518.2 577.8 L519.1 582.8 L519.9 582.8 L520.7 582.8 L521.6 591.4 L522.4 569.2 L523.2 575.9 L524.1 568.3 L524.9 572.8 L525.7 577.8 L526.6 575.9 L527.4 591.4 L528.2 586.4 L529.1 575.9 L529.9 582.8 L530.7 591.4 L531.6 580.1 L532.4 586.4 L533.3 580.1 L534.1 571.5 L534.9 586.4 L535.8 582.8 L536.6 577.8 L537.4 580.1 L538.3 580.1 L539.1 586.4 L539.9 582.8 L540.8 591.4 L541.6 582.8 L542.4 572.8 L543.3 586.4 L544.1 582.8 L544.9 575.9 L545.8 574.3 L546.6 574.3 L547.4 586.4 L548.3 582.8 L549.1 570.3 L549.9 582.8 L550.8 580.1 L551.6 586.4 L552.4 586.4 L553.3 600.0 L554.1 586.4 L554.9 591.4 L555.8 586.4 L556.6 586.4 L557.4 572.8 L558.3 577.8 L559.1 580.1 L559.9 586.4 L560.8 591.4 L561.6 577.8 L562.4 586.4 L563.3 582.8 L564.1 575.9 L564.9 582.8 L565.8 582.8 L566.6 586.4 L567.4 575.9 L568.3 577.8 L569.1 577.8 L569.9 572.8 L570.8 591.4 L571.6 582.8 L572.4 577.8 L573.3 580.1 L574.1 580.1 L574.9 580.1 L575.8 591.4 L576.6 582.8 L577.4 574.3 L578.3 582.8 L579.1 582.8 L580.0 577.8 L580.8 591.4 L581.6 580.1 L582.5 572.8 L583.3 582.8 L584.1 586.4 L585.0 580.1 L585.8 586.4 L586.6 586.4 L587.5 580.1 L588.3 591.4 L589.1 577.8 L590.0 591.4 L590.8 586.4 L591.6 577.8 L592.5 582.8 L593.3 580.1 L594.1 574.3 L595.0 572.8 L595.8 569.2 L596.6 586.4 L597.5 575.9 L598.3 591.4 L599.1 577.8 L600.0 574.3 L600.8 586.4 L601.6 580.1 L602.5 577.8 L603.3 582.8 L604.1 586.4 L605.0 572.8 L605.8 591.4 L606.6 582.8 L607.5 575.9 L608.3 580.1 L609.1 572.8 L610.0 572.8 L610.8 580.1 L611.6 571.5 L612.5 577.8 L613.3 591.4 L614.1 586.4 L615.0 580.1 L615.8 582.8 L616.6 591.4 L617.5 568.3 L618.3 591.4 L619.1 591.4 L620.0 580.1 L620.8 582.8 L621.6 572.8 L622.5 580.1 L623.3 580.1 L624.1 577.8 L625.0 586.4 L625.8 591.4 L626.6 586.4 L627.5 575.9 L628.3 586.4 L629.2 574.3 L630.0 586.4 L630.8 577.8 L631.7 582.8 L632.5 577.8 L633.3 582.8 L634.2 582.8 L635.0 586.4 L635.8 574.3 L636.7 582.8 L637.5 580.1 L638.3 577.8 L639.2 586.4 L640.0 586.4 L640.8 582.8 L641.7 574.3 L642.5 591.4 L643.3 591.4 L644.2 591.4 L645.0 586.4 L645.8 591.4 L646.7 586.4 L647.5 580.1 L648.3 591.4 L649.2 582.8 L650.0 591.4 L650.8 582.8 L651.7 580.1 L652.5 600.0 L653.3 582.8 L654.2 582.8 L655.0 582.8 L655.8 580.1 L656.7 580.1 L657.5 591.4 L658.3 582.8 L659.2 577.8 L660.0 574.3 L660.8 591.4 L661.7 586.4 L662.5 591.4 L663.3 582.8 L664.2 591.4 L665.0 591.4 L665.8 577.8 L666.7 569.2 L667.5 600.0 L668.3 572.8 L669.2 586.4 L670.0 577.8 L670.8 580.1 L671.7 575.9 L672.5 582.8 L673.3 586.4 L674.2 582.8 L675.0 577.8 L675.9 586.4 L676.7 580.1 L677.5 582.8 L678.4 582.8 L679.2 582.8 L680.0 580.1 L680.9 577.8 L681.7 586.4 L682.5 586.4 L683.4 600.0 L684.2 586.4 L685.0 591.4 L685.9 577.8 L686.7 591.4 L687.5 586.4 L688.4 580.1 L689.2 575.9 L690.0 575.9 L690.9 586.4 L691.7 582.8 L692.5 575.9 L693.4 586.4 L694.2 582.8 L695.0 591.4 L695.9 586.4 L696.7 577.8 L697.5 582.8 L698.4 586.4 L699.2 586.4 L700.0 572.8 L700.9 577.8 L701.7 591.4 L702.5 569.2 L703.4 586.4 L704.2 582.8 L705.0 586.4 L705.9 586.4 L706.7 580.1 L707.5 591.4 L708.4 582.8 L709.2 586.4 L710.0 571.5 L710.9 580.1 L711.7 580.1 L712.5 580.1 L713.4 580.1 L714.2 582.8 L715.0 600.0 L715.9 580.1 L716.7 586.4 L717.5 577.8 L718.4 580.1 L719.2 586.4 L720.0 586.4 L720.9 591.4 L721.7 580.1 L722.6 582.8 L723.4 586.4 L724.2 586.4 L725.1 580.1 L725.9 586.4 L726.7 582.8 L727.6 586.4 L728.4 600.0 L729.2 582.8 L730.1 582.8 L730.9 577.8 L731.7 574.3 L732.6 586.4 L733.4 580.1 L734.2 580.1 L735.1 582.8 L735.9 577.8 L736.7 577.8 L737.6 591.4 L738.4 574.3 L739.2 582.8 L740.1 586.4 L740.9 586.4 L741.7 582.8 L742.6 591.4 L743.4 575.9 L744.2 580.1 L745.1 586.4 L745.9 577.8 L746.7 582.8 L747.6 582.8 L748.4 577.8 L749.2 582.8 L750.1 586.4 L750.9 580.1 L751.7 591.4 L752.6 591.4 L753.4 580.1 L754.2 575.9 L755.1 591.4 L755.9 582.8 L756.7 586.4 L757.6 586.4 L758.4 580.1 L759.2 574.3 L760.1 571.5 L760.9 577.8 L761.7 580.1 L762.6 582.8 L763.4 591.4 L764.2 580.1 L765.1 591.4 L765.9 591.4 L766.7 582.8 L767.6 591.4 L768.4 571.5 L769.2 580.1 L770.1 580.1 L770.9 580.1 L771.8 582.8 L772.6 582.8 L773.4 577.8 L774.3 586.4 L775.1 580.1 L775.9 582.8 L776.8 577.8 L777.6 591.4 L778.4 580.1 L779.3 582.8 L780.1 580.1 L780.9 580.1 L781.8 582.8 L782.6 580.1 L783.4 580.1 L784.3 574.3 L785.1 580.1 L785.9 580.1 L786.8 591.4 L787.6 582.8 L788.4 577.8 L789.3 575.9 L790.1 591.4 L790.9 582.8 L791.8 586.4 L792.6 582.8 L793.4 586.4 L794.3 586.4 L795.1 582.8 L795.9 582.8 L796.8 575.9 L797.6 586.4 L798.4 591.4 L799.3 577.8 L800.1 580.1 L800.9 582.8 L801.8 591.4 L802.6 575.9 L803.4 591.4 L804.3 575.9 L805.1 580.1 L805.9 582.8 L806.8 582.8 L807.6 577.8 L808.4 582.8 L809.3 591.4 L810.1 586.4 L810.9 600.0 L811.8 580.1 L812.6 577.8 L813.4 575.9 L814.3 591.4 L815.1 569.2 L815.9 571.5 L816.8 582.8 L817.6 600.0 L818.5 586.4 L819.3 575.9 L820.1 570.3 L821.0 586.4 L821.8 591.4 L822.6 591.4 L823.5 571.5 L824.3 582.8 L825.1 591.4 L826.0 600.0 L826.8 580.1 L827.6 577.8 L828.5 586.4 L829.3 582.8 L830.1 582.8 L831.0 586.4 L831.8 586.4 L832.6 586.4 L833.5 586.4 L834.3 575.9 L835.1 580.1 L836.0 575.9 L836.8 571.5 L837.6 600.0 L838.5 582.8 L839.3 577.8 L840.1 582.8 L841.0 586.4 L841.8 580.1 L842.6 586.4 L843.5 586.4 L844.3 586.4 L845.1 582.8 L846.0 582.8 L846.8 577.8 L847.6 582.8 L848.5 586.4 L849.3 564.2 L850.1 582.8 L851.0 586.4 L851.8 582.8 L852.6 586.4 L853.5 591.4 L854.3 582.8 L855.1 574.3 L856.0 591.4 L856.8 586.4 L857.6 580.1 L858.5 586.4 L859.3 580.1 L860.1 582.8 L861.0 591.4 L861.8 582.8 L862.6 586.4 L863.5 580.1 L864.3 600.0 L865.2 580.1 L866.0 574.3 L866.8 582.8 L867.7 582.8 L868.5 586.4 L869.3 580.1 L870.2 582.8 L871.0 591.4 L871.8 591.4 L872.7 600.0 L873.5 580.1 L874.3 582.8 L875.2 575.9 L876.0 580.1 L876.8 577.8 L877.7 591.4 L878.5 591.4 L879.3 586.4 L880.2 586.4 L881.0 580.1 L881.8 582.8 L882.7 582.8 L883.5 582.8 L884.3 580.1 L885.2 582.8 L886.0 580.1 L886.8 586.4 L887.7 582.8 L888.5 591.4 L889.3 591.4 L890.2 586.4 L891.0 580.1 L891.8 586.4 L892.7 591.4 L893.5 577.8 L894.3 586.4 L895.2 591.4 L896.0 591.4 L896.8 591.4 L897.7 600.0 L898.5 586.4 L899.3 572.8 L900.2 586.4 L901.0 586.4 L901.8 575.9 L902.7 582.8" fill="none" stroke="#c4c4c4" stroke-width="0.8" stroke-linejoin="round"/><path d="M268.9 609.7V569.2M270.6 609.7V569.2M274.0 609.7V574.3M275.7 609.7V580.1M277.4 609.7V591.4M279.1 609.7V591.4M280.8 609.7V580.1M284.1 609.7V600.0M285.8 609.7V600.0M287.5 609.7V580.1M289.2 609.7V566.5M290.9 609.7V591.4M292.6 609.7V600.0M294.3 609.7V574.3M296.0 609.7V591.4M297.7 609.7V566.5M299.4 609.7V566.5M301.1 609.7V591.4M304.5 609.7V591.4M306.2 609.7V569.2M307.9 609.7V591.4M311.2 609.7V580.1M312.9 609.7V586.4M314.6 609.7V591.4M316.3 609.7V586.4M318.0 609.7V574.3M319.7 609.7V574.3M321.4 609.7V586.4M323.1 609.7V586.4M326.5 609.7V591.4M328.2 609.7V586.4M329.9 609.7V600.0M331.6 609.7V600.0M351.9 609.7V600.0M363.8 609.7V591.4M367.1 609.7V600.0M368.8 609.7V591.4M380.7 609.7V600.0M390.9 609.7V586.4M392.6 609.7V591.4M399.3 609.7V600.0M404.4 609.7V600.0M409.5 609.7V586.4M412.9 609.7V586.4M414.6 609.7V586.4M419.7 609.7V586.4M426.4 609.7V586.4M429.8 609.7V586.4M434.9 609.7V586.4M438.3 609.7V586.4M440.0 609.7V591.4M441.7 609.7V591.4M451.8 609.7V586.4M453.5 609.7V591.4M458.6 609.7V600.0M465.4 609.7V591.4M472.2 609.7V582.8M477.2 609.7V591.4M489.1 609.7V582.8M492.5 609.7V600.0M497.6 609.7V569.2M501.0 609.7V569.2M507.7 609.7V591.4M512.8 609.7V591.4M516.2 609.7V572.8M519.6 609.7V591.4M521.3 609.7V591.4M523.0 609.7V569.2M524.7 609.7V572.8M526.4 609.7V600.0M529.8 609.7V582.8M531.5 609.7V577.8M545.0 609.7V586.4M548.4 609.7V586.4M553.5 609.7V569.2M555.2 609.7V591.4M556.9 609.7V577.8M565.3 609.7V600.0M567.0 609.7V582.8M572.1 609.7V577.8M573.8 609.7V591.4M575.5 609.7V572.8M578.9 609.7V591.4M582.3 609.7V586.4M584.0 609.7V577.8M585.7 609.7V586.4M587.4 609.7V586.4M589.0 609.7V600.0M590.7 609.7V572.8M592.4 609.7V600.0M597.5 609.7V569.2M600.9 609.7V572.8M604.3 609.7V586.4M609.4 609.7V572.8M612.8 609.7V600.0M614.5 609.7V591.4M616.1 609.7V569.2M622.9 609.7V582.8M624.6 609.7V591.4M626.3 609.7V586.4M631.4 609.7V569.2M633.1 609.7V577.8M636.5 609.7V572.8M641.6 609.7V591.4M644.9 609.7V600.0M646.6 609.7V600.0M650.0 609.7V586.4M653.4 609.7V586.4M655.1 609.7V572.8M663.6 609.7V569.2M667.0 609.7V591.4M668.7 609.7V600.0M673.7 609.7V577.8M680.5 609.7V600.0M682.2 609.7V600.0M685.6 609.7V586.4M689.0 609.7V591.4M692.4 609.7V591.4M694.1 609.7V591.4M695.8 609.7V600.0M700.8 609.7V600.0M705.9 609.7V577.8M707.6 609.7V572.8M709.3 609.7V582.8M712.7 609.7V586.4M714.4 609.7V569.2M716.1 609.7V569.2M719.5 609.7V600.0M722.9 609.7V586.4M726.3 609.7V591.4M729.6 609.7V577.8M731.3 609.7V600.0M734.7 609.7V600.0M736.4 609.7V600.0M739.8 609.7V577.8M743.2 609.7V582.8M744.9 609.7V569.2M746.6 609.7V577.8M748.3 609.7V591.4M751.7 609.7V591.4M755.0 609.7V572.8M758.4 609.7V577.8M760.1 609.7V591.4M761.8 609.7V582.8M765.2 609.7V582.8M770.3 609.7V582.8M778.8 609.7V600.0M780.5 609.7V591.4M782.1 609.7V600.0M783.8 609.7V572.8M787.2 609.7V577.8M788.9 609.7V577.8M790.6 609.7V572.8M792.3 609.7V591.4M795.7 609.7V577.8M799.1 609.7V569.2M800.8 609.7V586.4M807.6 609.7V600.0M809.3 609.7V582.8M810.9 609.7V600.0M816.0 609.7V591.4M817.7 609.7V582.8M819.4 609.7V591.4M822.8 609.7V591.4M836.4 609.7V582.8M838.0 609.7V572.8M839.7 609.7V591.4M841.4 609.7V591.4M846.5 609.7V586.4M848.2 609.7V600.0M849.9 609.7V577.8M851.6 609.7V600.0M858.4 609.7V600.0M861.8 609.7V572.8M863.5 609.7V572.8M865.2 609.7V591.4M868.5 609.7V600.0M870.2 609.7V577.8M871.9 609.7V600.0M877.0 609.7V569.2M880.4 609.7V591.4M882.1 609.7V582.8M885.5 609.7V591.4M890.6 609.7V600.0M892.3 609.7V582.8M893.9 609.7V577.8M897.3 609.7V600.0M900.7 609.7V572.8" stroke="#c8c8c8" stroke-width="0.8" fill="none"/><path d="M462.73 571.1V609.7M463.35 564.1V609.7M464.59 560.7V584.0M465.83 571.8V609.7M466.45 561.5V609.7M468.31 561.9V609.7M471.41 562.9V609.7M472.65 561.2V582.3M475.13 569.3V580.2M480.71 575.7V600.0M483.81 567.1V609.7M485.05 574.4V609.7M486.29 567.3V609.7M486.91 576.1V597.6M487.53 565.9V589.7M488.77 560.9V578.9M490.63 573.1V583.2M491.25 563.9V580.0M492.49 572.9V609.7M493.11 574.4V609.7M493.73 562.3V583.3M494.35 573.0V589.9M495.59 573.7V595.6M497.45 567.6V580.4M498.07 572.6V580.0M499.93 567.4V590.3M501.17 570.5V594.4M501.79 575.6V609.7M502.41 569.8V609.7M504.27 568.3V609.7M504.89 573.6V609.7M505.51 571.0V588.3M506.13 565.4V586.9M507.37 569.5V609.7M508.61 565.4V609.7M509.85 576.5V609.7M510.47 562.3V609.7M511.09 568.1V577.1M511.71 568.8V593.8M512.33 565.6V609.7M512.95 576.1V600.0M513.57 571.9V581.1M514.19 576.0V597.2M514.81 566.9V609.7M515.43 569.9V609.7M516.05 570.6V609.7M516.67 570.0V609.7M517.29 563.7V579.3M517.91 570.8V609.7M518.53 561.3V609.7M519.15 569.1V592.7M519.77 566.8V586.3M521.01 565.9V609.7M522.25 567.0V592.0M523.49 572.0V609.7M524.11 574.8V609.7M524.73 572.2V593.1M525.35 575.4V595.6M525.97 571.7V591.4M526.59 561.5V609.7M527.21 563.2V609.7M527.83 573.9V609.7M528.45 570.9V586.7M529.07 567.0V609.7M529.69 570.8V609.7M530.31 561.3V609.7M530.93 561.7V569.2M531.55 576.6V596.7M532.17 577.1V609.7M532.79 572.1V609.7M534.03 575.0V597.3M534.65 576.4V609.7M535.27 568.1V609.7M535.89 563.3V586.7M536.51 567.6V609.7M537.75 564.6V609.7M538.37 563.7V582.3M538.99 564.0V609.7M539.61 571.4V609.7M540.23 562.5V609.7M540.85 568.7V579.4M541.47 576.2V609.7M542.09 565.9V576.0M542.71 561.8V609.7M543.33 565.8V582.6M543.95 563.5V609.7M544.57 571.4V609.7M545.19 574.3V590.6M545.81 563.1V587.0M546.43 573.6V597.5M547.05 562.2V576.5M548.91 577.0V609.7M549.53 567.2V586.3M550.15 561.8V609.7M551.39 560.7V609.7M552.01 565.0V578.8M552.63 570.5V609.7M553.25 563.7V609.7M553.87 576.8V609.7M554.49 576.8V587.8M555.11 561.9V609.7M556.35 575.2V609.7M556.97 566.6V587.7M557.59 573.0V609.7M558.21 569.1V609.7M558.83 569.6V609.7M559.45 567.5V588.3M560.07 560.8V609.7M560.69 577.1V595.0M561.31 560.7V609.7M561.93 565.1V581.1M562.55 571.1V587.5M563.17 570.8V589.0M563.79 562.9V577.0M564.41 564.3V588.6M565.03 563.2V571.7M565.65 566.7V609.7M566.27 572.8V585.4M566.89 573.8V609.7M567.51 573.6V586.9M568.13 571.1V609.7M568.75 576.2V591.0M569.37 562.6V570.2M569.99 567.4V609.7M570.61 561.3V609.7M571.23 566.7V609.7M571.85 564.7V580.3M572.47 573.5V581.0M573.09 569.7V609.7M573.71 567.6V609.7M574.33 574.5V587.7M574.95 573.6V609.7M575.57 574.7V597.5M576.19 575.4V609.7M576.81 570.5V581.4M577.43 568.3V609.7M578.05 567.3V609.7M578.67 567.7V584.4M579.29 577.1V609.7M579.91 562.1V609.7M580.53 576.6V609.7M581.77 567.6V609.7M583.01 561.3V581.7M583.63 574.5V609.7M584.25 566.4V609.7M584.87 576.3V609.7M585.49 571.8V592.9M586.11 572.1V609.7M586.73 569.9V609.7M587.35 562.9V609.7M587.97 566.8V609.7M588.59 571.2V609.7M589.21 572.2V609.7M589.83 562.1V609.7M590.45 576.7V609.7M591.69 566.2V609.7M592.31 569.8V586.7M592.93 572.6V609.7M593.55 565.8V609.7M594.17 562.5V572.3M594.79 564.4V589.4M596.03 560.7V609.7M596.65 561.1V609.7M597.27 566.9V609.7M597.89 564.1V585.0M598.51 562.8V585.2M599.75 565.6V609.7M600.99 570.1V582.7M601.61 570.8V609.7M602.23 575.7V609.7M602.85 576.4V585.6M603.47 572.3V609.7M604.09 570.4V609.7M604.71 575.3V609.7M605.33 563.4V575.3M605.95 572.0V594.8M606.57 571.5V585.2M607.19 563.7V609.7M607.81 577.1V609.7M608.43 571.5V609.7M609.05 563.9V609.7M609.67 568.0V590.9M610.29 574.4V583.3M611.53 573.0V609.7M612.15 564.1V585.1M612.77 573.2V609.7M613.39 570.0V595.6M614.01 561.3V576.9M614.63 564.2V609.7M615.25 561.0V585.0M615.87 565.4V609.7M617.11 568.1V609.7M617.73 565.3V609.7M618.35 574.9V593.7M618.97 561.5V576.8M619.59 571.2V585.7M620.21 564.8V609.7M620.83 564.6V609.7M621.45 562.1V609.7M622.07 572.0V609.7M622.69 568.3V609.7M623.31 576.4V609.7M623.93 573.2V609.7M624.55 563.4V579.3M625.17 565.9V609.7M625.79 564.9V609.7M626.41 566.7V578.8M627.03 561.1V609.7M628.27 565.2V609.7M628.89 570.2V609.7M629.51 573.0V592.0M630.13 575.3V609.7M631.37 568.3V584.9M631.99 561.2V572.7M632.61 570.3V589.9M633.23 565.8V609.7M633.85 572.4V609.7M634.47 566.1V590.5M635.09 563.0V609.7M635.71 562.4V609.7M636.33 571.0V609.7M636.95 576.3V600.0M637.57 574.1V609.7M638.19 573.5V583.8M638.81 565.3V574.0M640.05 569.2V587.5M640.67 570.6V586.4M641.29 574.5V609.7M641.91 566.6V609.7M642.53 561.3V609.7M643.15 573.8V609.7M643.77 575.3V609.7M644.39 570.9V588.2M645.01 569.3V609.7M645.63 570.6V595.7M646.25 573.1V609.7M646.87 571.9V609.7M647.49 566.4V587.6M648.73 570.4V578.5M649.35 565.5V609.7M649.97 572.7V587.7M650.59 561.9V576.1M651.21 561.6V572.2M651.83 564.2V576.5M652.45 561.3V609.7M653.07 566.2V590.9M653.69 564.1V577.4M654.31 572.9V582.6M654.93 561.8V609.7M655.55 568.4V585.1M656.17 562.3V572.1M656.79 570.6V595.6M657.41 570.3V609.7M658.03 573.8V609.7M658.65 576.4V609.7M659.27 565.0V609.7M660.51 575.7V609.7M661.13 560.9V580.7M661.75 573.2V609.7M662.37 571.5V609.7M662.99 566.4V609.7M663.61 575.1V592.4M664.23 572.0V592.3M665.47 572.7V580.8M666.09 572.1V581.7M666.71 574.4V609.7M667.33 563.2V609.7M667.95 564.1V576.1M668.57 564.3V577.8M669.19 564.2V609.7M669.81 566.7V578.4M670.43 573.6V609.7M671.05 566.5V591.2M671.67 568.4V609.7M672.29 562.0V609.7M672.91 576.5V595.8M673.53 562.0V572.8M675.39 562.9V609.7M676.01 570.3V582.9M676.63 573.8V584.3M677.25 571.6V609.7M678.49 568.5V586.3M679.11 566.5V609.7M679.73 577.1V594.8M680.35 574.6V590.1M680.97 563.5V609.7M681.59 566.5V609.7M682.83 576.5V609.7M684.69 572.8V585.2M685.31 573.1V609.7M685.93 576.1V609.7M686.55 571.5V609.7M687.17 570.0V586.1M687.79 568.7V590.9M688.41 569.1V583.2M689.03 562.6V583.9M690.27 560.8V609.7M691.51 570.9V609.7M692.13 568.6V582.6M692.75 564.0V571.5M693.37 577.2V609.7M693.99 564.6V609.7M694.61 576.0V609.7M695.23 561.9V609.7M695.85 570.6V579.2M696.47 575.9V592.1M697.09 575.0V598.8M697.71 564.3V589.8M698.33 566.5V609.7M698.95 572.1V590.8M700.19 575.6V609.7M700.81 570.6V582.6M701.43 569.7V609.7M702.05 570.0V579.5M703.29 569.6V609.7M703.91 563.9V609.7M704.53 568.4V609.7M705.77 569.3V592.6M707.01 563.2V609.7M707.63 570.1V590.6M708.25 563.8V609.7M708.87 575.5V609.7M709.49 565.1V609.7M710.73 569.8V609.7M711.35 567.9V609.7M712.59 570.0V609.7M713.21 572.6V581.1M713.83 567.3V609.7M714.45 569.2V609.7M715.07 570.0V585.1M715.69 566.4V609.7M716.31 574.0V591.1M716.93 562.7V588.2M717.55 561.4V609.7M718.17 569.7V594.5M718.79 572.2V609.7M719.41 566.1V574.4M720.03 560.8V609.7M720.65 569.5V609.7M721.27 568.4V592.7M721.89 573.6V592.0M722.51 571.3V595.9M724.99 576.7V588.4M725.61 569.5V584.8M726.23 573.8V596.1M726.85 561.3V609.7M727.47 567.9V584.1M728.09 568.0V582.7M728.71 569.8V609.7M729.33 573.4V609.7M730.57 564.5V609.7M731.19 567.6V609.7M731.81 562.9V609.7M732.43 561.0V609.7M733.05 571.7V609.7M734.29 573.2V585.4M734.91 565.3V609.7M735.53 564.7V584.6M736.15 575.5V609.7M736.77 571.8V609.7M737.39 569.5V609.7M738.01 576.1V609.7M738.63 561.0V609.7M739.25 569.7V609.7M739.87 561.0V575.6M740.49 562.0V609.7M741.73 567.8V609.7M742.35 575.7V609.7M742.97 573.5V609.7M743.59 570.2V584.6M744.83 568.7V609.7M745.45 575.0V609.7M746.07 566.9V609.7M746.69 560.9V609.7M748.55 575.9V609.7M749.79 564.8V574.0M750.41 574.7V609.7M751.03 572.3V589.2M751.65 562.0V609.7M752.27 572.5V590.9M752.89 573.6V596.6M754.13 561.9V581.4M754.75 567.2V609.7M755.37 568.1V591.7M755.99 573.8V609.7M756.61 571.7V609.7M757.23 564.1V609.7M759.09 573.3V609.7M759.71 567.0V574.5M760.33 563.6V609.7M761.57 561.1V609.7M762.19 563.6V578.4M762.81 564.2V609.7M763.43 562.8V585.3M764.05 571.5V609.7M764.67 576.4V609.7M765.29 569.6V578.1M765.91 572.8V586.5M766.53 565.8V575.9M767.15 570.5V578.7M767.77 566.5V582.0M768.39 568.1V609.7M769.01 576.3V585.3M769.63 563.6V609.7M770.25 564.1V609.7M770.87 568.3V590.6M772.11 576.2V609.7M772.73 561.3V609.7M773.35 562.7V609.7M773.97 574.6V609.7M774.59 569.5V609.7M775.83 562.1V609.7M776.45 575.1V599.9M777.07 570.4V595.4M777.69 573.5V609.7M778.31 575.0V609.7M778.93 561.6V609.7M779.55 561.3V570.0M780.17 561.4V571.7M780.79 565.4V609.7M781.41 574.6V609.7M782.03 563.3V609.7M783.27 571.0V590.7M783.89 561.8V609.7M784.51 563.1V609.7M785.13 576.7V587.9M785.75 565.3V575.8M786.37 564.2V609.7M786.99 566.0V581.5M787.61 575.0V609.7M788.23 571.3V585.1M788.85 564.3V587.1M789.47 569.7V609.7M790.09 563.7V609.7M790.71 576.1V609.7M791.33 560.8V585.0M791.95 570.0V578.5M792.57 566.9V609.7M793.19 564.2V609.7M793.81 570.2V609.7M795.05 562.7V580.1M795.67 571.7V583.7M796.29 573.9V593.7M797.53 575.4V593.2M798.77 571.8V609.7M799.39 565.7V588.7M800.01 573.8V594.1M800.63 569.6V587.4M801.25 562.9V573.7M801.87 562.9V609.7M803.11 577.0V599.5M804.35 561.6V577.5M804.97 574.4V609.7M806.21 562.2V577.7M806.83 576.8V609.7M807.45 576.3V609.7M808.07 574.5V609.7M808.69 569.6V585.1M809.31 565.4V587.2M809.93 576.4V609.7M810.55 571.6V609.7M811.17 572.4V609.7M811.79 560.7V570.5M812.41 564.0V609.7M813.03 562.9V609.7M813.65 574.4V592.1M814.27 566.9V582.3M814.89 565.5V590.4M815.51 569.2V609.7M816.13 568.2V609.7M816.75 563.5V609.7M817.99 574.1V609.7M818.61 572.5V609.7M819.23 560.9V585.7M820.47 573.6V584.7M821.09 571.0V589.9M821.71 575.1V609.7M822.33 569.0V609.7M822.95 567.7V591.9M823.57 571.2V609.7M824.19 574.3V589.6M824.81 570.7V609.7M825.43 576.8V598.9M826.05 567.3V609.7M826.67 572.7V609.7M827.29 575.0V609.7M828.53 561.1V582.0M829.15 566.0V609.7M829.77 569.7V578.7M830.39 567.5V609.7M831.01 575.8V609.7M831.63 567.4V609.7M832.25 576.5V588.7M832.87 572.4V609.7M833.49 576.4V609.7M834.11 568.3V609.7M834.73 570.7V583.1M835.35 574.1V609.7M836.59 572.6V609.7M837.21 564.8V609.7M837.83 565.7V582.7M838.45 565.8V609.7M839.07 569.8V609.7M839.69 572.8V592.3M840.31 567.6V609.7M840.93 572.9V594.7M841.55 568.0V609.7M842.17 563.4V572.5M843.41 575.4V609.7M844.03 575.3V600.0M844.65 563.5V609.7M845.27 573.1V609.7M847.13 567.9V593.0M847.75 575.3V609.7M848.37 569.3V609.7M848.99 574.0V609.7M849.61 569.5V587.4M850.23 576.0V595.7M850.85 575.8V600.0M851.47 562.0V571.4M852.09 569.5V609.7M852.71 563.7V609.7M853.33 573.0V581.5M853.95 576.4V609.7M854.57 565.7V609.7M855.81 563.4V577.5M856.43 567.3V609.7M857.05 574.7V609.7M857.67 570.1V580.4M858.91 575.6V609.7M859.53 569.0V609.7M860.15 562.2V609.7M862.01 575.9V609.7M862.63 575.1V609.7M863.25 567.3V609.7M863.87 566.9V609.7M864.49 561.9V569.9M865.11 571.9V609.7M865.73 576.4V585.9M866.97 566.9V609.7M867.59 575.3V609.7M868.21 574.6V609.7M868.83 563.7V609.7M869.45 575.3V596.7M870.69 561.1V609.7M871.31 563.5V609.7M871.93 565.7V609.7M872.55 569.0V609.7M873.17 573.8V609.7M873.79 563.2V578.5M875.03 568.0V609.7M875.65 573.6V598.6M876.27 571.9V580.5M876.89 576.5V597.6M878.13 566.3V609.7M878.75 568.3V609.7M879.37 561.7V609.7M879.99 560.8V609.7M880.61 568.2V609.7M881.23 572.7V609.7M881.85 564.6V589.0M882.47 564.3V583.0M883.09 562.0V609.7M884.33 571.3V609.7M884.95 569.6V609.7M885.57 569.2V609.7M886.19 566.9V609.7M886.81 568.5V586.6M887.43 570.0V591.4M888.05 567.8V580.1M888.67 569.0V609.7M889.29 568.9V592.0M889.91 565.6V609.7M890.53 563.6V609.7M891.15 567.1V579.8M891.77 565.1V589.0M892.39 564.0V609.7M893.01 571.4V595.0M893.63 568.0V575.6M894.25 569.7V609.7M894.87 572.6V609.7M895.49 571.1V594.0" stroke="#c6c6c6" stroke-width="0.75" fill="none"/></g><path d="M266.6 590.0 L267.5 575.0 L268.5 560.0 L269.5 548.0 L270.5 538.0 L272.0 533.0 L274.2 532.2 L275.0 532.2 L275.9 532.4 L276.8 532.1 L277.7 532.3 L278.6 532.2 L279.5 532.2 L280.4 532.5 L281.3 532.2 L282.2 532.2 L283.1 532.3 L284.0 532.4 L284.9 532.2 L285.8 532.3 L286.7 532.1 L287.6 532.1 L288.5 532.1 L289.4 532.0 L290.3 532.0 L291.2 532.0 L292.1 532.2 L293.0 532.2 L293.9 532.2 L294.8 529.9 L295.7 521.4 L296.6 510.1 L297.5 498.8 L298.4 487.6 L299.3 476.9 L300.2 467.9 L301.1 458.7 L302.0 451.7 L302.9 445.7 L303.8 440.1 L304.7 436.5 L305.6 432.7 L306.5 431.0 L307.4 429.7 L308.3 429.1 L309.2 429.9 L310.1 430.7 L311.0 432.2 L311.9 433.3 L312.8 434.7 L313.7 436.0 L314.6 437.2 L315.5 438.6 L316.4 439.7 L317.3 441.2 L318.2 441.9 L319.1 443.1 L320.0 444.3 L320.9 445.1 L321.8 446.7 L322.7 447.1 L323.6 448.4 L324.5 449.4 L325.4 450.6 L326.3 450.9 L327.2 452.2 L328.1 452.7 L329.0 453.6 L329.9 454.4 L330.8 455.4 L331.7 455.9 L332.6 456.8 L333.5 457.7 L334.4 458.7 L335.3 458.8 L336.2 460.1 L337.1 460.8 L338.0 461.2 L338.9 462.0 L339.8 462.5 L340.7 463.4 L341.6 463.8 L342.5 464.4 L343.4 465.0 L344.3 465.6 L345.2 466.2 L346.1 466.6 L347.0 467.6 L347.9 467.5 L348.8 467.8 L349.7 468.9 L350.6 469.4 L351.5 470.0 L352.4 470.5 L353.3 471.1 L354.2 471.7 L355.1 472.2 L356.0 472.5 L356.9 473.0 L357.8 473.8 L358.7 474.1 L359.6 474.3 L360.5 475.3 L361.4 475.5 L362.3 475.8 L363.2 476.2 L364.1 476.9 L365.0 477.2 L365.9 477.6 L366.8 478.1 L367.7 478.7 L368.6 479.4 L369.5 479.6 L370.4 479.9 L371.3 480.7 L372.2 481.0 L373.1 481.6 L374.0 482.1 L374.9 482.4 L375.8 482.9 L376.7 483.3 L377.6 483.6 L378.5 484.3 L379.4 484.8 L380.3 485.0 L381.2 485.4 L382.1 485.8 L383.0 486.1 L383.9 486.5 L384.8 486.9 L385.7 487.3 L386.6 487.7 L387.5 488.0 L388.4 488.7 L389.3 489.0 L390.2 489.2 L391.1 489.4 L392.0 490.2 L392.9 490.7 L393.8 490.8 L394.7 491.3 L395.6 491.7 L396.5 492.2 L397.4 492.4 L398.3 493.1 L399.2 493.2 L400.1 493.8 L401.0 494.1 L401.9 494.4 L402.8 494.6 L403.7 495.0 L404.6 495.4 L405.5 495.8 L406.4 496.1 L407.3 496.3 L408.2 496.7 L409.1 497.1 L410.0 497.3 L410.9 497.6 L411.8 497.9 L412.7 498.4 L413.6 498.6 L414.5 498.7 L415.4 499.3 L416.3 499.4 L417.2 499.7 L418.1 500.3 L419.0 500.6 L419.9 500.6 L420.8 501.1 L421.7 501.4 L422.6 501.6 L423.5 502.0 L424.4 502.4 L425.3 502.3 L426.2 503.0 L427.1 503.3 L428.0 503.6 L428.9 503.6 L429.8 504.2 L430.7 504.3 L431.6 504.8 L432.5 505.1 L433.4 505.3 L434.3 505.4 L435.2 505.8 L436.1 506.3 L437.0 506.3 L437.9 506.8 L438.8 507.1 L439.7 507.2 L440.6 508.8 L441.5 507.9 L442.4 509.2 L443.3 507.3 L444.2 507.4 L445.1 509.3 L446.0 509.3 L446.9 509.1 L447.8 509.5 L448.7 508.8 L449.6 509.6 L450.5 509.7 L451.4 510.3 L452.3 511.1 L453.2 510.9 L454.1 511.3 L455.0 511.0 L455.9 511.4 L456.8 511.8 L457.7 511.8 L458.6 512.8 L459.5 511.9 L460.4 513.5 L461.3 512.2 L462.2 513.5 L463.1 512.7 L464.0 514.1 L464.9 513.6 L465.8 513.9 L466.7 514.3 L467.6 513.8 L468.5 513.8 L469.4 513.5 L470.3 515.3 L471.2 514.5 L472.1 514.7 L473.0 515.1 L473.9 516.3 L474.8 514.6 L475.7 515.8 L476.6 515.6 L477.5 516.3 L478.4 515.3 L479.3 516.1 L480.2 516.9 L481.1 517.4 L482.0 517.6 L482.9 516.6 L483.8 517.2 L484.7 517.2 L485.6 516.7 L486.5 516.8 L487.4 518.1 L488.3 518.0 L489.2 517.9 L490.1 518.8 L491.0 517.8 L491.9 518.7 L492.8 518.6 L493.7 518.7 L494.6 519.1 L495.5 519.1 L496.4 519.3 L497.3 519.4 L498.2 520.4 L499.1 519.4 L500.0 520.3 L500.9 520.2 L501.8 519.9 L502.7 520.6 L503.6 519.9 L504.5 521.1 L505.4 520.2 L506.3 520.5 L507.2 521.1 L508.1 521.5 L509.0 521.7 L509.9 521.8 L510.8 521.3 L511.7 521.1 L512.6 522.0 L513.5 522.0 L514.4 521.4 L515.3 522.5 L516.2 522.3 L517.1 521.8 L518.0 522.6 L518.9 521.9 L519.8 522.2 L520.7 523.0 L521.6 522.1 L522.5 523.0 L523.4 522.4 L524.3 523.6 L525.2 523.0 L526.1 523.5 L527.0 522.8 L527.9 523.5 L528.8 524.2 L529.7 524.1 L530.6 523.0 L531.5 524.5 L532.4 524.6 L533.3 524.1 L534.2 525.1 L535.1 524.0 L536.0 524.6 L536.9 525.2 L537.8 525.4 L538.7 525.5 L539.6 524.4 L540.5 524.1 L541.4 525.3 L542.3 524.5 L543.2 525.2 L544.1 524.7 L545.0 526.0 L545.9 525.9 L546.8 525.9 L547.7 525.7 L548.6 525.8 L549.5 525.7 L550.4 526.1 L551.3 526.1 L552.2 526.3 L553.1 526.0 L554.0 527.2 L554.9 526.5 L555.8 527.1 L556.7 527.2 L557.6 526.1 L558.5 525.8 L559.4 527.3 L560.3 526.4 L561.2 527.0 L562.1 526.7 L563.0 527.2 L563.9 525.9 L564.8 527.1 L565.7 526.8 L566.6 527.3 L567.5 525.0 L568.4 528.3 L569.3 527.8 L570.2 525.9 L571.1 526.9 L572.0 527.7 L572.9 528.4 L573.8 527.8 L574.7 529.3 L575.6 528.0 L576.5 527.0 L577.4 527.4 L578.3 528.9 L579.2 527.6 L580.1 529.2 L581.0 529.4 L581.9 529.0 L582.8 529.5 L583.7 528.4 L584.6 528.6 L585.5 528.1 L586.4 528.2 L587.3 527.3 L588.2 528.3 L589.1 527.9 L590.0 527.6 L590.9 529.2 L591.8 529.5 L592.7 528.8 L593.6 530.5 L594.5 530.2 L595.4 530.3 L596.3 528.7 L597.2 527.9 L598.1 530.0 L599.0 529.8 L599.9 530.2 L600.8 530.0 L601.7 530.9 L602.6 529.4 L603.5 530.4 L604.4 528.9 L605.3 527.5 L606.2 529.4 L607.1 531.4 L608.0 528.2 L608.9 531.0 L609.8 529.3 L610.7 529.6 L611.6 530.1 L612.5 530.3 L613.4 529.2 L614.3 530.3 L615.2 530.7 L616.1 531.1 L617.0 529.5 L617.9 531.9 L618.8 532.3 L619.7 532.8 L620.6 529.1 L621.5 530.7 L622.4 528.7 L623.3 530.9 L624.2 531.2 L625.1 529.5 L626.0 529.1 L626.9 530.9 L627.8 531.4 L628.7 530.0 L629.6 530.5 L630.5 528.3 L631.4 530.1 L632.3 531.0 L633.2 531.0 L634.1 532.5 L635.0 529.8 L635.9 528.7 L636.8 531.5 L637.7 530.4 L638.6 531.3 L639.5 531.8 L640.4 531.7 L641.3 532.6 L642.2 532.5 L643.1 529.5 L644.0 531.2 L644.9 533.2 L645.8 530.9 L646.7 532.3 L647.6 531.3 L648.5 530.9 L649.4 533.0 L650.3 532.4 L651.2 531.2 L652.1 532.4 L653.0 530.2 L653.9 530.8 L654.8 532.4 L655.7 531.6 L656.6 530.5 L657.5 532.0 L658.4 531.9 L659.3 532.9 L660.2 532.6 L661.1 531.4 L662.0 531.2 L662.9 531.5 L663.8 531.5 L664.7 533.2 L665.6 533.3 L666.5 533.1 L667.4 532.1 L668.3 531.5 L669.2 532.7 L670.1 531.5 L671.0 532.1 L671.9 530.2 L672.8 531.5 L673.7 533.3 L674.6 530.9 L675.5 530.4 L676.4 531.8 L677.3 533.6 L678.2 533.4 L679.1 531.6 L680.0 531.5 L680.9 531.9 L681.8 531.1 L682.7 532.1 L683.6 531.7 L684.5 530.6 L685.4 531.5 L686.3 531.8 L687.2 531.2 L688.1 530.9 L689.0 533.0 L689.9 534.0 L690.8 531.8 L691.7 531.7 L692.6 532.6 L693.5 531.9 L694.4 531.3 L695.3 533.5 L696.2 531.1 L697.1 531.4 L698.0 531.5 L698.9 531.3 L699.8 531.9 L700.7 532.7 L701.6 533.6 L702.5 532.8 L703.4 532.2 L704.3 530.9 L705.2 532.1 L706.1 531.2 L707.0 532.1 L707.9 533.2 L708.8 532.4 L709.7 532.0 L710.6 531.5 L711.5 532.2 L712.4 532.3 L713.3 531.3 L714.2 531.7 L715.1 533.1 L716.0 530.6 L716.9 531.8 L717.8 531.1 L718.7 533.8 L719.6 532.9 L720.5 532.8 L721.4 532.7 L722.3 532.6 L723.2 532.6 L724.1 530.7 L725.0 532.6 L725.9 532.9 L726.8 530.9 L727.7 533.2 L728.6 533.0 L729.5 530.8 L730.4 531.9 L731.3 532.0 L732.2 531.8 L733.1 532.8 L734.0 531.1 L734.9 532.2 L735.8 532.6 L736.7 533.1 L737.6 532.4 L738.5 532.2 L739.4 533.1 L740.3 530.4 L741.2 533.3 L742.1 532.1 L743.0 531.2 L743.9 532.0 L744.8 530.6 L745.7 530.4 L746.6 532.1 L747.5 531.6 L748.4 533.1 L749.3 531.5 L750.2 531.1 L751.1 531.5 L752.0 534.1 L752.9 532.4 L753.8 531.8 L754.7 531.4 L755.6 531.3 L756.5 532.2 L757.4 532.8 L758.3 533.6 L759.2 533.6 L760.1 532.7 L761.0 531.8 L761.9 531.6 L762.8 530.1 L763.7 531.4 L764.6 532.8 L765.5 532.1 L766.4 532.8 L767.3 531.1 L768.2 533.3 L769.1 532.7 L770.0 532.5 L770.9 532.8 L771.8 530.2 L772.7 531.9 L773.6 531.5 L774.5 534.2 L775.4 532.2 L776.3 531.9 L777.2 533.3 L778.1 531.4 L779.0 533.8 L779.9 531.7 L780.8 532.4 L781.7 531.5 L782.6 533.2 L783.5 530.3 L784.4 533.1 L785.3 531.6 L786.2 532.5 L787.1 531.3 L788.0 532.7 L788.9 532.6 L789.8 533.0 L790.7 532.7 L791.6 533.1 L792.5 533.4 L793.4 532.0 L794.3 531.3 L795.2 531.2 L796.1 533.1 L797.0 532.1 L797.9 533.5 L798.8 532.5 L799.7 531.4 L800.6 533.3 L801.5 534.4 L802.4 532.3 L803.3 531.5 L804.2 531.6 L805.1 533.3 L806.0 531.9 L806.9 532.0 L807.8 533.1 L808.7 532.5 L809.6 532.6 L810.5 531.9 L811.4 531.8 L812.3 532.6 L813.2 532.6 L814.1 533.0 L815.0 531.9 L815.9 532.8 L816.8 532.9 L817.7 532.5 L818.6 533.0 L819.5 533.5 L820.4 532.7 L821.3 532.5 L822.2 531.5 L823.1 532.8 L824.0 532.4 L824.9 532.1 L825.8 531.6 L826.7 533.0 L827.6 535.0 L828.5 532.9 L829.4 532.5 L830.3 532.9 L831.2 531.9 L832.1 532.6 L833.0 531.8 L833.9 531.8 L834.8 532.7 L835.7 532.7 L836.6 532.4 L837.5 531.7 L838.4 532.7 L839.3 531.4 L840.2 533.2 L841.1 532.1 L842.0 532.5 L842.9 533.3 L843.8 533.0 L844.7 531.2 L845.6 532.2 L846.5 532.8 L847.4 531.4 L848.3 530.1 L849.2 532.4 L850.1 532.4 L851.0 532.9 L851.9 532.6 L852.8 532.6 L853.7 532.7 L854.6 533.8 L855.5 533.0 L856.4 533.0 L857.3 532.1 L858.2 533.6 L859.1 532.3 L860.0 533.2 L860.9 530.4 L861.8 532.7 L862.7 532.4 L863.6 532.0 L864.5 533.8 L865.4 532.9 L866.3 532.3 L867.2 532.0 L868.1 534.4 L869.0 533.2 L869.9 533.1 L870.8 531.7 L871.7 533.8 L872.6 533.0 L873.5 532.2 L874.4 532.4 L875.3 530.9 L876.2 533.1 L877.1 531.4 L878.0 533.3 L878.9 532.0 L879.8 531.9 L880.7 532.9 L881.6 532.7 L882.5 531.4 L883.4 532.4 L884.3 533.1 L885.2 532.2 L886.1 531.2 L887.0 532.3 L887.9 531.5 L888.8 531.9 L889.7 532.5 L890.6 532.4 L891.5 532.3 L892.4 530.8 L893.3 532.8 L894.2 532.3 L895.1 532.1 L896.0 532.7" fill="none" stroke="#0c6a2c" stroke-width="1.6" stroke-linejoin="round"/><path d="M274.2 532.2 L294.3 532.2 L295.2 528.0 L297.0 505.0 L299.0 480.0 L301.5 455.0 L304.0 439.0 L306.0 431.5 L308.0 428.9 L310.0 430.5 L313.3 435.5 L316.5 440.0 L320.0 444.4 L325.0 450.0 L331.0 455.5 L337.0 460.6 L344.4 465.7 L354.0 471.5 L365.7 477.7 L377.0 483.5 L388.8 488.8 L402.0 494.5 L417.7 500.0 L430.0 504.2 L442.0 508.0 L456.0 511.6 L470.0 514.6 L483.0 517.0 L495.4 519.0 L509.0 521.2 L522.5 523.0 L536.0 524.6 L548.7 525.8 L565.0 527.2 L586.7 528.8 L605.0 529.8 L626.7 530.7 L650.0 531.4 L678.3 532.0 L738.0 532.4 L896.6 532.5" fill="none" stroke="#000" stroke-width="1.5" stroke-linejoin="round"/><path d="M295.0 537.9 L295.4 528.1 L295.9 518.8 L296.3 510.0 L296.8 501.5 L297.2 493.5 L297.7 486.0 L298.2 478.9 L298.6 472.2 L299.1 466.0 L299.5 460.3 L300.0 455.0 L300.4 450.2 L300.9 445.9 L301.3 442.0 L301.8 438.7 L302.3 435.8 L302.7 433.4 L303.2 431.6 L303.6 430.2 L304.1 429.5 L304.5 429.3 L305.0 429.9 L305.4 431.0 L305.9 432.7 L306.4 435.0 L306.8 437.8 L307.3 441.1 L307.7 444.9 L308.2 449.2 L308.6 454.0 L309.1 459.3 L309.6 465.1 L310.0 471.3 L310.5 478.1 L310.9 485.3" fill="none" stroke="#e81010" stroke-width="1.5" stroke-linejoin="round"/><path d="M260 652.4H904.5" stroke="#111" stroke-width="1.2"/><g clip-path="url(#cd)"><path d="M274.5 654.0 L275.0 652.0 L275.5 650.2 L276.0 649.7 L276.5 650.3 L277.0 652.3 L277.5 651.8 L278.0 652.8 L278.5 654.7 L279.0 653.2 L279.5 650.8 L280.0 652.0 L280.5 652.9 L281.0 654.2 L281.5 652.6 L282.0 653.4 L282.5 652.3 L283.0 651.6 L283.5 656.3 L284.0 652.6 L284.5 654.9 L285.0 654.0 L285.5 654.5 L286.0 650.5 L286.5 651.2 L287.0 651.5 L287.5 653.7 L288.0 654.9 L288.5 653.1 L289.0 652.0 L289.5 652.5 L290.0 651.2 L290.5 653.0 L291.0 649.3 L291.5 651.3 L292.0 649.0 L292.5 652.0 L293.0 652.8 L293.5 653.9 L294.0 651.0 L294.5 650.6 L295.0 652.1 L295.5 651.7 L296.0 652.9 L296.5 653.4 L297.0 653.9 L297.5 657.2 L298.0 656.4 L298.5 655.2 L299.0 655.7 L299.5 654.7 L300.0 651.7 L300.5 648.2 L301.0 644.9 L301.5 645.0 L302.0 638.4 L302.5 637.3 L303.0 635.2 L303.5 640.2 L304.0 644.1 L304.5 649.2 L305.0 653.7 L305.5 661.6 L306.0 666.0 L306.5 664.8 L307.0 669.7 L307.5 674.7 L308.0 677.9 L308.5 673.7 L309.0 663.2 L309.5 663.6 L310.0 659.8 L310.5 652.4 L311.0 646.8 L311.5 634.0 L312.0 624.1 L312.5 620.6 L313.0 617.5 L313.5 620.2 L314.0 626.0 L314.5 628.6 L315.0 636.6 L315.5 644.9 L316.0 647.2 L316.5 658.5 L317.0 660.7 L317.5 666.8 L318.0 662.7 L318.5 668.9 L319.0 671.6 L319.5 670.2 L320.0 670.8 L320.5 669.1 L321.0 666.2 L321.5 666.8 L322.0 663.7 L322.5 661.1 L323.0 660.8 L323.5 658.6 L324.0 658.1 L324.5 655.9 L325.0 657.4 L325.5 656.4 L326.0 658.3 L326.5 656.1 L327.0 656.3 L327.5 654.4 L328.0 655.4 L328.5 652.3 L329.0 647.7 L329.5 652.9 L330.0 650.0 L330.5 649.3 L331.0 651.0 L331.5 649.6 L332.0 649.4 L332.5 647.1 L333.0 648.6 L333.5 642.9 L334.0 645.9 L334.5 645.3 L335.0 643.5 L335.5 644.8 L336.0 647.3 L336.5 646.4 L337.0 646.9 L337.5 646.5 L338.0 645.2 L338.5 650.5 L339.0 650.2 L339.5 648.1 L340.0 647.0 L340.5 648.8 L341.0 648.5 L341.5 646.5 L342.0 647.4 L342.5 649.0 L343.0 649.6 L343.5 651.8 L344.0 648.6 L344.5 649.5 L345.0 651.5 L345.5 649.3 L346.0 651.0 L346.5 651.1 L347.0 653.6 L347.5 649.4 L348.0 652.5 L348.5 650.9 L349.0 651.2 L349.5 652.8 L350.0 652.2 L350.5 652.7 L351.0 652.9 L351.5 652.3 L352.0 653.9 L352.5 651.8 L353.0 652.9 L353.5 655.3 L354.0 652.7 L354.5 654.3 L355.0 652.9 L355.5 658.0 L356.0 653.5 L356.5 658.1 L357.0 655.1 L357.5 649.0 L358.0 653.6 L358.5 653.0 L359.0 656.2 L359.5 657.1 L360.0 655.5 L360.5 654.7 L361.0 655.6 L361.5 656.6 L362.0 657.0 L362.5 656.2 L363.0 652.7 L363.5 655.5 L364.0 656.2 L364.5 656.0 L365.0 657.3 L365.5 658.0 L366.0 655.4 L366.5 653.3 L367.0 654.8 L367.5 658.1 L368.0 653.1 L368.5 655.3 L369.0 652.5 L369.5 656.0 L370.0 658.2 L370.5 655.5 L371.0 656.2 L371.5 657.8 L372.0 657.2 L372.5 656.5 L373.0 657.3 L373.5 654.6 L374.0 655.1 L374.5 656.3 L375.0 656.1 L375.5 653.8 L376.0 654.6 L376.5 657.2 L377.0 654.6 L377.5 652.0 L378.0 654.4 L378.5 656.3 L379.0 652.1 L379.5 650.3 L380.0 654.3 L380.5 658.5 L381.0 657.0 L381.5 651.1 L382.0 654.5 L382.5 652.9 L383.0 653.1 L383.5 653.7 L384.0 650.9 L384.5 653.4 L385.0 652.6 L385.5 653.1 L386.0 653.1 L386.5 649.3 L387.0 655.4 L387.5 655.6 L388.0 651.5 L388.5 655.6 L389.0 653.1 L389.5 655.1 L390.0 651.6 L390.5 653.3 L391.0 652.0 L391.5 654.5 L392.0 653.4 L392.5 657.1 L393.0 651.7 L393.5 652.4 L394.0 653.0 L394.5 652.9 L395.0 653.6 L395.5 653.1 L396.0 649.6 L396.5 653.9 L397.0 653.7 L397.5 651.6 L398.0 652.4 L398.5 653.8 L399.0 649.8 L399.5 649.7 L400.0 653.2 L400.5 649.4 L401.0 655.0 L401.5 649.8 L402.0 655.3 L402.5 651.8 L403.0 652.7 L403.5 653.0 L404.0 651.2 L404.5 654.0 L405.0 653.6 L405.5 654.3 L406.0 649.7 L406.5 653.4 L407.0 651.7 L407.5 652.7 L408.0 650.5 L408.5 654.1 L409.0 653.8 L409.5 653.4 L410.0 652.0 L410.5 653.7 L411.0 651.5 L411.5 651.4 L412.0 650.5 L412.5 651.4 L413.0 649.9 L413.5 652.9 L414.0 653.2 L414.5 653.5 L415.0 653.5 L415.5 654.6 L416.0 651.6 L416.5 652.1 L417.0 656.0 L417.5 652.5 L418.0 653.6 L418.5 653.9 L419.0 652.8 L419.5 650.2 L420.0 652.1 L420.5 655.8 L421.0 651.8 L421.5 653.9 L422.0 649.5 L422.5 653.2 L423.0 652.5 L423.5 652.7 L424.0 653.8 L424.5 653.1 L425.0 652.5 L425.5 648.5 L426.0 652.1 L426.5 651.4 L427.0 652.1 L427.5 652.0 L428.0 651.7 L428.5 649.9 L429.0 657.5 L429.5 653.4 L430.0 653.8 L430.5 650.8 L431.0 653.7 L431.5 650.6 L432.0 650.4 L432.5 653.3 L433.0 651.3 L433.5 653.1 L434.0 650.9 L434.5 651.4 L435.0 650.2 L435.5 650.9 L436.0 654.1 L436.5 649.8 L437.0 652.2 L437.5 650.4 L438.0 652.1 L438.5 650.7 L439.0 654.4 L439.5 650.0 L440.0 654.0 L440.5 652.5 L441.0 651.4 L441.5 654.9 L442.0 651.6 L442.5 652.2 L443.0 650.9 L443.5 652.4 L444.0 654.0 L444.5 654.2 L445.0 653.7 L445.5 652.0 L446.0 652.6 L446.5 651.2 L447.0 649.6 L447.5 652.8 L448.0 653.1 L448.5 651.6 L449.0 651.5 L449.5 656.0 L450.0 653.4 L450.5 652.2 L451.0 651.3 L451.5 653.1 L452.0 654.1 L452.5 648.7 L453.0 657.7 L453.5 649.9 L454.0 653.5 L454.5 653.0 L455.0 652.4 L455.5 651.8 L456.0 654.0 L456.5 654.8 L457.0 651.8 L457.5 650.2 L458.0 652.9 L458.5 648.5 L459.0 654.6 L459.5 651.0 L460.0 651.6 L460.5 650.1 L461.0 654.3 L461.5 651.3 L462.0 652.6 L462.5 656.4 L463.0 653.2 L463.5 654.9 L464.0 653.0 L464.5 651.3 L465.0 652.6 L465.5 649.2 L466.0 651.2 L466.5 653.4 L467.0 653.0 L467.5 651.7 L468.0 653.6 L468.5 651.4 L469.0 651.3 L469.5 650.7 L470.0 652.0 L470.5 652.0 L471.0 654.3 L471.5 651.9 L472.0 652.5 L472.5 652.0 L473.0 651.5 L473.5 653.4 L474.0 652.9 L474.5 653.5 L475.0 654.2 L475.5 655.3 L476.0 654.0 L476.5 651.4 L477.0 656.2 L477.5 651.4 L478.0 651.0 L478.5 650.7 L479.0 652.8 L479.5 652.8 L480.0 650.5 L480.5 651.0 L481.0 649.3 L481.5 652.9 L482.0 653.0 L482.5 650.3 L483.0 652.9 L483.5 652.5 L484.0 650.0 L484.5 650.9 L485.0 652.9 L485.5 651.3 L486.0 652.3 L486.5 650.4 L487.0 651.6 L487.5 653.7 L488.0 649.3 L488.5 652.3 L489.0 652.1 L489.5 653.3 L490.0 652.2 L490.5 652.9 L491.0 651.2 L491.5 651.3 L492.0 650.2 L492.5 650.9 L493.0 653.1 L493.5 653.4 L494.0 653.6 L494.5 650.5 L495.0 653.5 L495.5 649.6 L496.0 651.9 L496.5 652.3 L497.0 651.9 L497.5 649.1 L498.0 652.0 L498.5 652.8 L499.0 654.0 L499.5 654.9 L500.0 653.4 L500.5 650.0 L501.0 651.2 L501.5 653.5 L502.0 656.4 L502.5 650.3 L503.0 651.6 L503.5 655.8 L504.0 652.6 L504.5 654.1 L505.0 650.5 L505.5 651.1 L506.0 653.4 L506.5 656.1 L507.0 652.8 L507.5 647.8 L508.0 651.4 L508.5 653.1 L509.0 650.6 L509.5 653.1 L510.0 649.4 L510.5 655.2 L511.0 653.0 L511.5 649.6 L512.0 650.2 L512.5 651.3 L513.0 654.8 L513.5 652.2 L514.0 651.1 L514.5 653.0 L515.0 652.2 L515.5 650.7 L516.0 652.9 L516.5 651.3 L517.0 652.7 L517.5 654.3 L518.0 654.9 L518.5 653.5 L519.0 653.8 L519.5 650.6 L520.0 652.2 L520.5 655.6 L521.0 649.7 L521.5 648.1 L522.0 653.1 L522.5 651.4 L523.0 652.5 L523.5 651.0 L524.0 652.1 L524.5 651.5 L525.0 652.4 L525.5 653.4 L526.0 652.9 L526.5 653.7 L527.0 653.5 L527.5 653.1 L528.0 647.9 L528.5 651.0 L529.0 649.1 L529.5 654.9 L530.0 652.8 L530.5 650.6 L531.0 650.1 L531.5 651.5 L532.0 653.1 L532.5 654.9 L533.0 652.0 L533.5 655.3 L534.0 651.9 L534.5 653.3 L535.0 653.6 L535.5 653.7 L536.0 655.1 L536.5 654.7 L537.0 651.9 L537.5 653.7 L538.0 653.9 L538.5 650.9 L539.0 651.5 L539.5 651.9 L540.0 655.1 L540.5 650.6 L541.0 651.5 L541.5 654.2 L542.0 653.5 L542.5 650.9 L543.0 650.4 L543.5 653.1 L544.0 654.4 L544.5 650.3 L545.0 653.2 L545.5 651.0 L546.0 652.3 L546.5 652.6 L547.0 653.1 L547.5 649.8 L548.0 653.0 L548.5 652.3 L549.0 653.5 L549.5 648.9 L550.0 652.2 L550.5 654.3 L551.0 652.5 L551.5 655.4 L552.0 652.7 L552.5 654.5 L553.0 650.3 L553.5 649.8 L554.0 648.3 L554.5 652.9 L555.0 653.8 L555.5 656.0 L556.0 651.9 L556.5 653.6 L557.0 650.0 L557.5 648.7 L558.0 654.8 L558.5 652.5 L559.0 649.3 L559.5 654.9 L560.0 654.4 L560.5 650.8 L561.0 651.6 L561.5 655.4 L562.0 651.4 L562.5 652.9 L563.0 652.2 L563.5 651.6 L564.0 649.2 L564.5 650.7 L565.0 653.9 L565.5 649.8 L566.0 651.0 L566.5 651.4 L567.0 653.5 L567.5 653.8 L568.0 652.2 L568.5 649.7 L569.0 651.5 L569.5 652.0 L570.0 651.8 L570.5 651.7 L571.0 652.8 L571.5 652.2 L572.0 655.6 L572.5 652.4 L573.0 650.7 L573.5 651.9 L574.0 649.7 L574.5 649.6 L575.0 652.9 L575.5 654.6 L576.0 652.3 L576.5 654.7 L577.0 650.9 L577.5 652.6 L578.0 651.1 L578.5 652.8 L579.0 653.7 L579.5 649.6 L580.0 652.6 L580.5 652.3 L581.0 652.1 L581.5 653.2 L582.0 652.9 L582.5 654.8 L583.0 652.4 L583.5 651.8 L584.0 654.0 L584.5 655.5 L585.0 653.3 L585.5 651.4 L586.0 651.2 L586.5 651.8 L587.0 653.9 L587.5 651.7 L588.0 652.7 L588.5 651.0 L589.0 651.6 L589.5 654.0 L590.0 652.0 L590.5 652.1 L591.0 650.5 L591.5 649.2 L592.0 654.9 L592.5 653.3 L593.0 653.4 L593.5 653.3 L594.0 652.9 L594.5 649.5 L595.0 651.2 L595.5 652.5 L596.0 651.4 L596.5 652.0 L597.0 653.2 L597.5 652.3 L598.0 651.4 L598.5 650.3 L599.0 654.0 L599.5 652.1 L600.0 651.8 L600.5 651.6 L601.0 652.9 L601.5 653.0 L602.0 655.0 L602.5 654.1 L603.0 653.4 L603.5 653.6 L604.0 651.7 L604.5 653.0 L605.0 653.2 L605.5 653.7 L606.0 652.2 L606.5 654.9 L607.0 649.7 L607.5 654.7 L608.0 653.4 L608.5 652.5 L609.0 652.5 L609.5 651.7 L610.0 655.9 L610.5 652.5 L611.0 654.5 L611.5 650.0 L612.0 655.8 L612.5 652.6 L613.0 651.4 L613.5 652.6 L614.0 652.1 L614.5 652.3 L615.0 651.7 L615.5 650.6 L616.0 652.3 L616.5 650.4 L617.0 652.3 L617.5 650.8 L618.0 654.6 L618.5 649.7 L619.0 651.5 L619.5 651.2 L620.0 649.5 L620.5 653.7 L621.0 654.1 L621.5 656.9 L622.0 650.5 L622.5 651.5 L623.0 648.8 L623.5 652.2 L624.0 651.7 L624.5 652.3 L625.0 651.9 L625.5 651.9 L626.0 653.4 L626.5 653.6 L627.0 653.0 L627.5 654.3 L628.0 650.0 L628.5 653.7 L629.0 652.8 L629.5 652.4 L630.0 653.4 L630.5 649.8 L631.0 651.7 L631.5 650.6 L632.0 654.8 L632.5 653.7 L633.0 656.2 L633.5 650.4 L634.0 653.4 L634.5 651.4 L635.0 650.3 L635.5 654.8 L636.0 651.2 L636.5 652.8 L637.0 651.9 L637.5 652.1 L638.0 651.5 L638.5 652.7 L639.0 655.0 L639.5 653.9 L640.0 652.7 L640.5 652.7 L641.0 654.3 L641.5 653.5 L642.0 652.4 L642.5 650.5 L643.0 652.4 L643.5 653.6 L644.0 652.2 L644.5 654.3 L645.0 651.8 L645.5 655.0 L646.0 651.1 L646.5 653.6 L647.0 650.3 L647.5 652.9 L648.0 653.2 L648.5 652.1 L649.0 653.0 L649.5 652.6 L650.0 649.1 L650.5 651.4 L651.0 651.4 L651.5 656.0 L652.0 650.2 L652.5 651.2 L653.0 652.6 L653.5 654.5 L654.0 654.9 L654.5 653.9 L655.0 652.5 L655.5 652.0 L656.0 651.9 L656.5 651.9 L657.0 652.2 L657.5 652.8 L658.0 654.7 L658.5 648.7 L659.0 650.7 L659.5 650.6 L660.0 652.6 L660.5 654.7 L661.0 649.7 L661.5 653.9 L662.0 654.9 L662.5 651.2 L663.0 649.8 L663.5 652.9 L664.0 652.2 L664.5 651.1 L665.0 652.0 L665.5 652.3 L666.0 651.0 L666.5 650.9 L667.0 653.3 L667.5 652.2 L668.0 651.6 L668.5 650.7 L669.0 651.8 L669.5 653.0 L670.0 652.1 L670.5 654.0 L671.0 652.6 L671.5 650.4 L672.0 652.2 L672.5 651.8 L673.0 651.5 L673.5 652.4 L674.0 654.2 L674.5 653.8 L675.0 650.7 L675.5 652.6 L676.0 654.8 L676.5 649.8 L677.0 653.3 L677.5 654.7 L678.0 648.8 L678.5 651.3 L679.0 652.3 L679.5 651.2 L680.0 651.2 L680.5 653.4 L681.0 651.0 L681.5 653.5 L682.0 653.6 L682.5 655.0 L683.0 652.1 L683.5 648.5 L684.0 654.4 L684.5 653.6 L685.0 651.1 L685.5 649.1 L686.0 652.6 L686.5 651.8 L687.0 653.0 L687.5 652.8 L688.0 650.6 L688.5 653.1 L689.0 650.6 L689.5 650.8 L690.0 653.0 L690.5 653.9 L691.0 652.5 L691.5 654.3 L692.0 653.6 L692.5 652.1 L693.0 651.8 L693.5 652.4 L694.0 655.7 L694.5 653.0 L695.0 651.4 L695.5 650.4 L696.0 651.0 L696.5 656.0 L697.0 654.3 L697.5 653.4 L698.0 654.4 L698.5 655.6 L699.0 654.5 L699.5 651.5 L700.0 652.9 L700.5 651.7 L701.0 651.8 L701.5 649.0 L702.0 652.1 L702.5 650.4 L703.0 652.9 L703.5 652.2 L704.0 655.0 L704.5 653.4 L705.0 653.8 L705.5 651.0 L706.0 652.8 L706.5 651.9 L707.0 652.1 L707.5 651.7 L708.0 655.3 L708.5 650.5 L709.0 654.9 L709.5 652.2 L710.0 650.8 L710.5 653.1 L711.0 649.0 L711.5 650.9 L712.0 652.4 L712.5 653.8 L713.0 654.4 L713.5 651.6 L714.0 652.4 L714.5 651.8 L715.0 651.3 L715.5 652.8 L716.0 652.4 L716.5 651.5 L717.0 654.1 L717.5 653.3 L718.0 653.7 L718.5 651.9 L719.0 653.1 L719.5 651.5 L720.0 653.4 L720.5 654.6 L721.0 652.6 L721.5 653.4 L722.0 654.3 L722.5 652.5 L723.0 653.0 L723.5 654.4 L724.0 652.8 L724.5 653.0 L725.0 653.0 L725.5 652.6 L726.0 653.1 L726.5 651.9 L727.0 652.2 L727.5 651.4 L728.0 652.5 L728.5 652.6 L729.0 652.9 L729.5 653.4 L730.0 653.1 L730.5 654.7 L731.0 654.1 L731.5 653.4 L732.0 654.3 L732.5 652.4 L733.0 652.5 L733.5 651.2 L734.0 652.0 L734.5 655.2 L735.0 651.5 L735.5 651.2 L736.0 652.2 L736.5 653.9 L737.0 652.6 L737.5 651.2 L738.0 651.7 L738.5 652.1 L739.0 652.4 L739.5 651.6 L740.0 653.7 L740.5 652.7 L741.0 653.7 L741.5 652.6 L742.0 656.0 L742.5 650.1 L743.0 652.1 L743.5 649.9 L744.0 654.0 L744.5 650.4 L745.0 650.5 L745.5 652.4 L746.0 653.4 L746.5 653.7 L747.0 654.4 L747.5 651.4 L748.0 649.3 L748.5 652.0 L749.0 652.9 L749.5 654.7 L750.0 652.0 L750.5 650.3 L751.0 652.3 L751.5 651.0 L752.0 653.0 L752.5 656.5 L753.0 652.3 L753.5 649.4 L754.0 655.5 L754.5 646.3 L755.0 648.5 L755.5 653.2 L756.0 651.0 L756.5 651.1 L757.0 649.5 L757.5 654.0 L758.0 653.4 L758.5 654.5 L759.0 652.3 L759.5 653.3 L760.0 652.9 L760.5 652.7 L761.0 653.7 L761.5 648.1 L762.0 651.8 L762.5 649.8 L763.0 650.6 L763.5 652.2 L764.0 654.2 L764.5 653.4 L765.0 653.2 L765.5 651.6 L766.0 648.9 L766.5 652.4 L767.0 655.4 L767.5 652.8 L768.0 652.3 L768.5 651.8 L769.0 656.7 L769.5 653.4 L770.0 650.2 L770.5 649.7 L771.0 648.9 L771.5 652.6 L772.0 653.0 L772.5 653.2 L773.0 654.9 L773.5 654.5 L774.0 651.5 L774.5 650.0 L775.0 653.5 L775.5 656.9 L776.0 651.6 L776.5 654.3 L777.0 654.7 L777.5 655.1 L778.0 653.4 L778.5 652.1 L779.0 654.4 L779.5 653.5 L780.0 652.1 L780.5 654.0 L781.0 654.7 L781.5 652.9 L782.0 652.1 L782.5 653.1 L783.0 654.8 L783.5 653.0 L784.0 653.2 L784.5 650.3 L785.0 654.2 L785.5 652.1 L786.0 653.3 L786.5 652.7 L787.0 650.3 L787.5 647.7 L788.0 652.2 L788.5 651.9 L789.0 651.5 L789.5 652.0 L790.0 653.6 L790.5 654.6 L791.0 653.5 L791.5 652.2 L792.0 651.9 L792.5 653.4 L793.0 655.8 L793.5 652.1 L794.0 653.2 L794.5 653.4 L795.0 650.8 L795.5 648.9 L796.0 651.7 L796.5 650.2 L797.0 656.4 L797.5 649.5 L798.0 654.1 L798.5 653.1 L799.0 650.0 L799.5 652.2 L800.0 652.6 L800.5 647.8 L801.0 650.1 L801.5 649.2 L802.0 650.3 L802.5 653.3 L803.0 651.5 L803.5 655.0 L804.0 649.9 L804.5 652.9 L805.0 653.1 L805.5 651.7 L806.0 653.8 L806.5 651.5 L807.0 654.2 L807.5 651.0 L808.0 654.1 L808.5 655.6 L809.0 648.1 L809.5 650.2 L810.0 652.7 L810.5 654.7 L811.0 652.7 L811.5 653.0 L812.0 653.6 L812.5 650.8 L813.0 653.2 L813.5 650.1 L814.0 652.4 L814.5 649.0 L815.0 654.4 L815.5 652.5 L816.0 651.9 L816.5 654.4 L817.0 653.5 L817.5 653.2 L818.0 651.0 L818.5 652.5 L819.0 651.6 L819.5 654.4 L820.0 651.9 L820.5 655.5 L821.0 651.1 L821.5 655.1 L822.0 651.3 L822.5 652.3 L823.0 654.5 L823.5 653.6 L824.0 652.1 L824.5 653.8 L825.0 655.6 L825.5 649.3 L826.0 653.0 L826.5 650.1 L827.0 652.9 L827.5 657.1 L828.0 650.9 L828.5 652.7 L829.0 653.0 L829.5 651.0 L830.0 654.3 L830.5 651.3 L831.0 653.8 L831.5 654.0 L832.0 654.1 L832.5 655.1 L833.0 654.8 L833.5 654.5 L834.0 650.8 L834.5 651.7 L835.0 652.7 L835.5 650.8 L836.0 654.5 L836.5 652.9 L837.0 652.2 L837.5 653.4 L838.0 652.4 L838.5 651.7 L839.0 650.5 L839.5 655.2 L840.0 655.3 L840.5 654.4 L841.0 654.6 L841.5 652.8 L842.0 652.5 L842.5 652.8 L843.0 651.6 L843.5 653.6 L844.0 653.3 L844.5 653.6 L845.0 653.4 L845.5 651.2 L846.0 652.1 L846.5 650.7 L847.0 653.2 L847.5 653.5 L848.0 654.3 L848.5 655.0 L849.0 651.8 L849.5 650.4 L850.0 653.8 L850.5 652.0 L851.0 654.0 L851.5 652.4 L852.0 652.2 L852.5 653.0 L853.0 652.5 L853.5 652.6 L854.0 650.5 L854.5 653.2 L855.0 651.6 L855.5 655.8 L856.0 650.5 L856.5 654.8 L857.0 653.4 L857.5 649.9 L858.0 652.4 L858.5 649.8 L859.0 653.2 L859.5 651.5 L860.0 654.6 L860.5 650.2 L861.0 652.4 L861.5 653.7 L862.0 650.2 L862.5 650.9 L863.0 651.4 L863.5 651.5 L864.0 652.7 L864.5 653.6 L865.0 651.6 L865.5 654.9 L866.0 654.7 L866.5 653.4 L867.0 650.4 L867.5 651.1 L868.0 652.2 L868.5 654.6 L869.0 651.2 L869.5 649.8 L870.0 654.9 L870.5 653.7 L871.0 652.5 L871.5 650.9 L872.0 655.4 L872.5 651.7 L873.0 654.9 L873.5 653.6 L874.0 653.7 L874.5 653.9 L875.0 653.1 L875.5 653.4 L876.0 655.8 L876.5 653.3 L877.0 649.7 L877.5 651.8 L878.0 652.0 L878.5 651.9 L879.0 651.1 L879.5 654.0 L880.0 651.7 L880.5 651.9 L881.0 652.7 L881.5 651.5 L882.0 653.4 L882.5 653.0 L883.0 650.5 L883.5 654.5 L884.0 651.6 L884.5 650.1 L885.0 651.9 L885.5 651.4 L886.0 652.1 L886.5 652.8 L887.0 650.4 L887.5 652.5 L888.0 652.8 L888.5 650.6 L889.0 652.1 L889.5 652.0 L890.0 649.7 L890.5 650.9 L891.0 655.9 L891.5 648.0 L892.0 652.8 L892.5 652.3 L893.0 650.2 L893.5 650.9 L894.0 650.8 L894.5 653.2 L895.0 654.7 L895.5 650.7 L896.0 652.6 L896.5 655.7" fill="none" stroke="#0c6a2c" stroke-width="1.6" stroke-linejoin="round"/></g><path d="M274.6 652.4H300.2" stroke="#111" stroke-width="1.2"/><path d="M261.1 684.3v-3.5M261.1 422v3.5M274.1 684.3v-2M274.1 422v2M287.1 684.3v-2M287.1 422v2M300.2 684.3v-2M300.2 422v2M313.2 684.3v-3.5M313.2 422v3.5M326.2 684.3v-2M326.2 422v2M339.3 684.3v-2M339.3 422v2M352.3 684.3v-2M352.3 422v2M365.3 684.3v-3.5M365.3 422v3.5M378.3 684.3v-2M378.3 422v2M391.4 684.3v-2M391.4 422v2M404.4 684.3v-2M404.4 422v2M417.4 684.3v-3.5M417.4 422v3.5M430.5 684.3v-2M430.5 422v2M443.5 684.3v-2M443.5 422v2M456.5 684.3v-2M456.5 422v2M469.6 684.3v-3.5M469.6 422v3.5M482.6 684.3v-2M482.6 422v2M495.6 684.3v-2M495.6 422v2M508.6 684.3v-2M508.6 422v2M521.7 684.3v-3.5M521.7 422v3.5M534.7 684.3v-2M534.7 422v2M547.7 684.3v-2M547.7 422v2M560.8 684.3v-2M560.8 422v2M573.8 684.3v-3.5M573.8 422v3.5M586.8 684.3v-2M586.8 422v2M599.9 684.3v-2M599.9 422v2M612.9 684.3v-2M612.9 422v2M625.9 684.3v-3.5M625.9 422v3.5M639.0 684.3v-2M639.0 422v2M652.0 684.3v-2M652.0 422v2M665.0 684.3v-2M665.0 422v2M678.0 684.3v-3.5M678.0 422v3.5M691.1 684.3v-2M691.1 422v2M704.1 684.3v-2M704.1 422v2M717.1 684.3v-2M717.1 422v2M730.2 684.3v-3.5M730.2 422v3.5M743.2 684.3v-2M743.2 422v2M756.2 684.3v-2M756.2 422v2M769.2 684.3v-2M769.2 422v2M782.3 684.3v-3.5M782.3 422v3.5M795.3 684.3v-2M795.3 422v2M808.3 684.3v-2M808.3 422v2M821.4 684.3v-2M821.4 422v2M834.4 684.3v-3.5M834.4 422v3.5M847.4 684.3v-2M847.4 422v2M860.5 684.3v-2M860.5 422v2M873.5 684.3v-2M873.5 422v2M886.5 684.3v-3.5M886.5 422v3.5M899.5 684.3v-2M899.5 422v2M260 600.0h3.5M904.5 600.0h-3.5M260 591.4h2M904.5 591.4h-2M260 586.4h2M904.5 586.4h-2M260 582.8h2M904.5 582.8h-2M260 580.1h2M904.5 580.1h-2M260 577.8h2M904.5 577.8h-2M260 575.9h2M904.5 575.9h-2M260 574.3h2M904.5 574.3h-2M260 572.8h2M904.5 572.8h-2M260 571.5h3.5M904.5 571.5h-3.5M260 562.9h2M904.5 562.9h-2M260 557.9h2M904.5 557.9h-2M260 554.3h2M904.5 554.3h-2M260 551.6h2M904.5 551.6h-2M260 549.3h2M904.5 549.3h-2M260 547.4h2M904.5 547.4h-2M260 545.8h2M904.5 545.8h-2M260 544.3h2M904.5 544.3h-2M260 543.0h3.5M904.5 543.0h-3.5M260 534.4h2M904.5 534.4h-2M260 529.4h2M904.5 529.4h-2M260 525.8h2M904.5 525.8h-2M260 523.1h2M904.5 523.1h-2M260 520.8h2M904.5 520.8h-2M260 518.9h2M904.5 518.9h-2M260 517.3h2M904.5 517.3h-2M260 515.8h2M904.5 515.8h-2M260 514.5h3.5M904.5 514.5h-3.5M260 505.9h2M904.5 505.9h-2M260 500.9h2M904.5 500.9h-2M260 497.3h2M904.5 497.3h-2M260 494.6h2M904.5 494.6h-2M260 492.3h2M904.5 492.3h-2M260 490.4h2M904.5 490.4h-2M260 488.8h2M904.5 488.8h-2M260 487.3h2M904.5 487.3h-2M260 486.0h3.5M904.5 486.0h-3.5M260 477.4h2M904.5 477.4h-2M260 472.4h2M904.5 472.4h-2M260 468.8h2M904.5 468.8h-2M260 466.1h2M904.5 466.1h-2M260 463.8h2M904.5 463.8h-2M260 461.9h2M904.5 461.9h-2M260 460.3h2M904.5 460.3h-2M260 458.8h2M904.5 458.8h-2M260 457.5h3.5M904.5 457.5h-3.5M260 448.9h2M904.5 448.9h-2M260 443.9h2M904.5 443.9h-2M260 440.3h2M904.5 440.3h-2M260 437.6h2M904.5 437.6h-2M260 435.3h2M904.5 435.3h-2M260 433.4h2M904.5 433.4h-2M260 431.8h2M904.5 431.8h-2M260 430.3h2M904.5 430.3h-2M260 429.0h3.5M904.5 429.0h-3.5M260 680.2h3.5M904.5 680.2h-3.5M260 673.2h2M904.5 673.2h-2M260 666.3h2M904.5 666.3h-2M260 659.4h2M904.5 659.4h-2M260 652.4h3.5M904.5 652.4h-3.5M260 645.4h2M904.5 645.4h-2M260 638.5h2M904.5 638.5h-2M260 631.5h2M904.5 631.5h-2M260 624.6h3.5M904.5 624.6h-3.5M260 617.6h2M904.5 617.6h-2" stroke="#222" stroke-width="0.8" fill="none"/><rect x="260" y="422" width="644.5" height="262.29999999999995" fill="none" stroke="#222" stroke-width="1.2"/><path d="M260 609.7H904.5" stroke="#000" stroke-width="1.6"/><path d="M274.6 422V684.3" stroke="#1020f0" stroke-width="1.6"/><path d="M275.1 422v4l3 -2zM275.1 444v4l3 -2zM275.1 467v4l3 -2zM275.1 489v4l3 -2zM275.1 512v4l3 -2zM275.1 534v4l3 -2zM275.1 557v4l3 -2zM275.1 579v4l3 -2zM275.1 602v4l3 -2zM275.1 624v4l3 -2zM275.1 647v4l3 -2zM275.1 669v4l3 -2z" fill="#1020f0"/><path d="M896.0 422V684.3" stroke="#1020f0" stroke-width="1.6"/><path d="M895.5 422v4l-3 -2zM895.5 444v4l-3 -2zM895.5 467v4l-3 -2zM895.5 489v4l-3 -2zM895.5 512v4l-3 -2zM895.5 534v4l-3 -2zM895.5 557v4l-3 -2zM895.5 579v4l-3 -2zM895.5 602v4l-3 -2zM895.5 624v4l-3 -2zM895.5 647v4l-3 -2zM895.5 669v4l-3 -2z" fill="#1020f0"/><rect x="833.8" y="426.8" width="68.5" height="90.5" fill="#777"/><rect x="832.5" y="425.5" width="68.5" height="90.5" fill="#ffffc0" stroke="#333" stroke-width="0.8"/><rect x="834.5" y="429.6" width="9" height="4.8" fill="#f01010"/><text x="846.5" y="434.8" font-family="DejaVu Sans, Liberation Sans, sans-serif" font-size="7.25" fill="#111">Calculated IRF</text><rect x="834.5" y="440.9" width="9" height="4.8" fill="#0c6a2c"/><text x="846.5" y="446.1" font-family="DejaVu Sans, Liberation Sans, sans-serif" font-size="7.25" fill="#111">Overall Decay</text><rect x="834.5" y="452.1" width="9" height="4.8" fill="#c0c0c0"/><text x="846.5" y="457.3" font-family="DejaVu Sans, Liberation Sans, sans-serif" font-size="7.25" fill="#111">Pixel (1,1)</text><rect x="834.5" y="463.4" width="9" height="4.8" fill="#c0c0c0"/><text x="846.5" y="468.6" font-family="DejaVu Sans, Liberation Sans, sans-serif" font-size="7.25" fill="#111">ROI 0</text><rect x="834.5" y="474.6" width="9" height="4.8" fill="#c0c0c0"/><text x="846.5" y="479.8" font-family="DejaVu Sans, Liberation Sans, sans-serif" font-size="7.25" fill="#111">ROI 1</text><rect x="834.5" y="485.9" width="9" height="4.8" fill="#c0c0c0"/><text x="846.5" y="491.1" font-family="DejaVu Sans, Liberation Sans, sans-serif" font-size="7.25" fill="#111">ROI 2</text><rect x="834.5" y="497.2" width="9" height="4.8" fill="#c0c0c0"/><text x="846.5" y="502.4" font-family="DejaVu Sans, Liberation Sans, sans-serif" font-size="7.25" fill="#111">ROI 3</text><rect x="834.5" y="508.4" width="9" height="4.8" fill="#000"/><text x="846.5" y="513.6" font-family="DejaVu Sans, Liberation Sans, sans-serif" font-size="7.25" fill="#111">Fitted Curve</text><rect x="821.3" y="614.8" width="81.5" height="24.3" fill="#777"/><rect x="820" y="613.5" width="81.5" height="24.3" fill="#ffffc0" stroke="#333" stroke-width="0.8"/><rect x="822" y="617.6" width="9" height="4.8" fill="#0c6a2c"/><text x="834" y="622.8" font-family="DejaVu Sans, Liberation Sans, sans-serif" font-size="7.25" fill="#111">Residuals</text><text x="834" y="634.3" font-family="DejaVu Sans, Liberation Sans, sans-serif" font-size="7.25" fill="#111">Local X² = 0.0000</text><text x="567.5" y="418" text-anchor="middle" font-family="Liberation Sans, sans-serif" font-weight="bold" font-size="10" fill="#111">Fit</text><text x="253.6" y="603.2" text-anchor="end" font-family="Liberation Sans, sans-serif" font-size="9.4" fill="#111">10</text><text x="253.8" y="599.6" font-family="Liberation Sans, sans-serif" font-size="6.3" fill="#111">0</text><text x="253.6" y="574.7" text-anchor="end" font-family="Liberation Sans, sans-serif" font-size="9.4" fill="#111">10</text><text x="253.8" y="571.1" font-family="Liberation Sans, sans-serif" font-size="6.3" fill="#111">1</text><text x="253.6" y="546.2" text-anchor="end" font-family="Liberation Sans, sans-serif" font-size="9.4" fill="#111">10</text><text x="253.8" y="542.6" font-family="Liberation Sans, sans-serif" font-size="6.3" fill="#111">2</text><text x="253.6" y="517.7" text-anchor="end" font-family="Liberation Sans, sans-serif" font-size="9.4" fill="#111">10</text><text x="253.8" y="514.1" font-family="Liberation Sans, sans-serif" font-size="6.3" fill="#111">3</text><text x="253.6" y="489.2" text-anchor="end" font-family="Liberation Sans, sans-serif" font-size="9.4" fill="#111">10</text><text x="253.8" y="485.6" font-family="Liberation Sans, sans-serif" font-size="6.3" fill="#111">4</text><text x="253.6" y="460.7" text-anchor="end" font-family="Liberation Sans, sans-serif" font-size="9.4" fill="#111">10</text><text x="253.8" y="457.1" font-family="Liberation Sans, sans-serif" font-size="6.3" fill="#111">5</text><text x="253.6" y="432.2" text-anchor="end" font-family="Liberation Sans, sans-serif" font-size="9.4" fill="#111">10</text><text x="253.8" y="428.6" font-family="Liberation Sans, sans-serif" font-size="6.3" fill="#111">6</text><text x="257" y="683.4" text-anchor="end" font-family="Liberation Sans, sans-serif" font-size="9.4" fill="#111">-20</text><text x="257" y="655.6" text-anchor="end" font-family="Liberation Sans, sans-serif" font-size="9.4" fill="#111">0</text><text x="257" y="627.8" text-anchor="end" font-family="Liberation Sans, sans-serif" font-size="9.4" fill="#111">20</text><clipPath id="c84"><rect x="258.6" y="680" width="20" height="20"/></clipPath><text x="260.6" y="695" text-anchor="middle" font-family="Liberation Sans, sans-serif" font-size="9.4" fill="#111" clip-path="url(#c84)">84</text><text x="313.2" y="695" text-anchor="middle" font-family="Liberation Sans, sans-serif" font-size="9.4" fill="#111">88</text><text x="365.3" y="695" text-anchor="middle" font-family="Liberation Sans, sans-serif" font-size="9.4" fill="#111">92</text><text x="417.4" y="695" text-anchor="middle" font-family="Liberation Sans, sans-serif" font-size="9.4" fill="#111">96</text><text x="469.6" y="695" text-anchor="middle" font-family="Liberation Sans, sans-serif" font-size="9.4" fill="#111">100</text><text x="521.7" y="695" text-anchor="middle" font-family="Liberation Sans, sans-serif" font-size="9.4" fill="#111">104</text><text x="573.8" y="695" text-anchor="middle" font-family="Liberation Sans, sans-serif" font-size="9.4" fill="#111">108</text><text x="625.9" y="695" text-anchor="middle" font-family="Liberation Sans, sans-serif" font-size="9.4" fill="#111">112</text><text x="678.0" y="695" text-anchor="middle" font-family="Liberation Sans, sans-serif" font-size="9.4" fill="#111">116</text><text x="730.2" y="695" text-anchor="middle" font-family="Liberation Sans, sans-serif" font-size="9.4" fill="#111">120</text><text x="782.3" y="695" text-anchor="middle" font-family="Liberation Sans, sans-serif" font-size="9.4" fill="#111">124</text><text x="834.4" y="695" text-anchor="middle" font-family="Liberation Sans, sans-serif" font-size="9.4" fill="#111">128</text><text x="886.5" y="695" text-anchor="middle" font-family="Liberation Sans, sans-serif" font-size="9.4" fill="#111">132</text><text x="582" y="709" text-anchor="middle" font-family="Liberation Sans, sans-serif" font-size="9.4" fill="#111">Time [ns]</text><text transform="translate(238,520) rotate(-90)" text-anchor="middle" font-family="Liberation Sans, sans-serif" font-size="8.6" fill="#111">Intensity [ Cnts]</text><text transform="translate(238,651) rotate(-90)" text-anchor="middle" font-family="Liberation Sans, sans-serif" font-size="8.6" fill="#111">Resids. [StdDev.]</text></svg>
<div class="a" style="left:222px;top:716.6px;width:691px;height:4px;background:#e1ebe0"></div>
<div class="a" style="left:0;top:717.7px;width:913px;height:1.2px;background:#8c918c"></div>
</body></html>
